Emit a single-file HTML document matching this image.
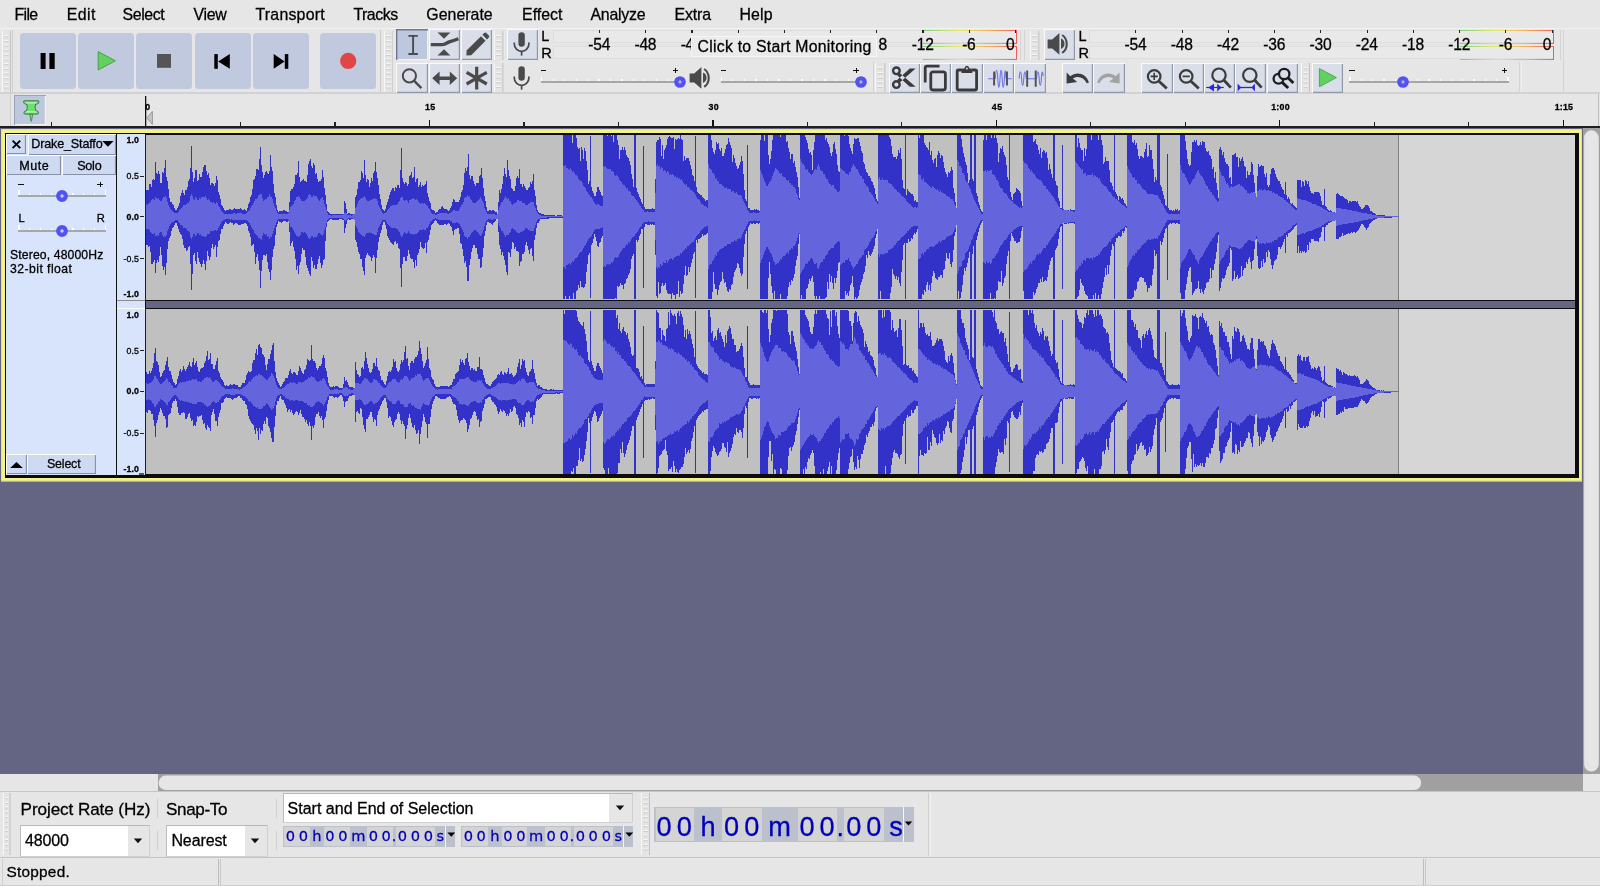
<!DOCTYPE html>
<html lang="en"><head><meta charset="utf-8"><title>Audacity</title>
<style>
html,body{margin:0;padding:0;}
body{width:1600px;height:886px;overflow:hidden;background:#e6e6e6;font-family:"Liberation Sans",sans-serif;color:#000;}
#app{position:relative;width:1600px;height:886px;overflow:hidden;background:#e6e6e6;will-change:transform;}
#app div,#app svg{position:absolute;box-sizing:border-box;}
.t{white-space:pre;-webkit-text-stroke:0.28px currentColor;}
.tb{background:#c1c9de;border-radius:3.5px;}
</style></head><body><div id="app">
<div id="menubar" style="left:0;top:0;width:1600px;height:28px;">
<div class="t" style="left:14.5px;top:6.61px;font-size:15.9px;line-height:15.9px;letter-spacing:-0.674px;">File</div>
<div class="t" style="left:66.8px;top:6.61px;font-size:15.9px;line-height:15.9px;letter-spacing:0.434px;">Edit</div>
<div class="t" style="left:122.5px;top:6.61px;font-size:15.9px;line-height:15.9px;letter-spacing:-0.398px;">Select</div>
<div class="t" style="left:193.4px;top:6.61px;font-size:15.9px;line-height:15.9px;letter-spacing:-0.259px;">View</div>
<div class="t" style="left:255.5px;top:6.61px;font-size:15.9px;line-height:15.9px;letter-spacing:0.218px;">Transport</div>
<div class="t" style="left:353.4px;top:6.61px;font-size:15.9px;line-height:15.9px;letter-spacing:-0.462px;">Tracks</div>
<div class="t" style="left:426.3px;top:6.61px;font-size:15.9px;line-height:15.9px;letter-spacing:0.015px;">Generate</div>
<div class="t" style="left:522px;top:6.61px;font-size:15.9px;line-height:15.9px;letter-spacing:0.027px;">Effect</div>
<div class="t" style="left:590.5px;top:6.61px;font-size:15.9px;line-height:15.9px;letter-spacing:-0.261px;">Analyze</div>
<div class="t" style="left:674.5px;top:6.61px;font-size:15.9px;line-height:15.9px;letter-spacing:-0.153px;">Extra</div>
<div class="t" style="left:739.5px;top:6.61px;font-size:15.9px;line-height:15.9px;letter-spacing:0.099px;">Help</div>
</div>
<div style="left:0px;top:28px;width:1600px;height:1px;background:#f2f2f2;"></div>
<div style="left:0px;top:92px;width:1600px;height:1.6px;background:#d2d2d2;"></div>
<svg style="left:2px;top:30.5px;" width="9" height="61" viewBox="0 0 9 61"><rect x="0" y="0" width="9" height="61" fill="#e4e4e4"/><rect x="0" y="0" width="1" height="61" fill="#f8f8f8"/><rect x="8" y="0" width="1" height="61" fill="#c2c2c2"/><rect x="2.4" y="4.2" width="4.2" height="1.1" fill="#fafafa"/><rect x="2.4" y="5.3" width="4.2" height="0.9" fill="#cacaca"/><rect x="2.4" y="8.86" width="4.2" height="1.1" fill="#fafafa"/><rect x="2.4" y="9.96" width="4.2" height="0.9" fill="#cacaca"/><rect x="2.4" y="13.52" width="4.2" height="1.1" fill="#fafafa"/><rect x="2.4" y="14.62" width="4.2" height="0.9" fill="#cacaca"/><rect x="2.4" y="18.18" width="4.2" height="1.1" fill="#fafafa"/><rect x="2.4" y="19.28" width="4.2" height="0.9" fill="#cacaca"/><rect x="2.4" y="22.84" width="4.2" height="1.1" fill="#fafafa"/><rect x="2.4" y="23.94" width="4.2" height="0.9" fill="#cacaca"/><rect x="2.4" y="27.5" width="4.2" height="1.1" fill="#fafafa"/><rect x="2.4" y="28.6" width="4.2" height="0.9" fill="#cacaca"/><rect x="2.4" y="32.16" width="4.2" height="1.1" fill="#fafafa"/><rect x="2.4" y="33.26" width="4.2" height="0.9" fill="#cacaca"/><rect x="2.4" y="36.82" width="4.2" height="1.1" fill="#fafafa"/><rect x="2.4" y="37.92" width="4.2" height="0.9" fill="#cacaca"/><rect x="2.4" y="41.48" width="4.2" height="1.1" fill="#fafafa"/><rect x="2.4" y="42.58" width="4.2" height="0.9" fill="#cacaca"/><rect x="2.4" y="46.14" width="4.2" height="1.1" fill="#fafafa"/><rect x="2.4" y="47.24" width="4.2" height="0.9" fill="#cacaca"/><rect x="2.4" y="50.8" width="4.2" height="1.1" fill="#fafafa"/><rect x="2.4" y="51.9" width="4.2" height="0.9" fill="#cacaca"/><rect x="2.4" y="55.46" width="4.2" height="1.1" fill="#fafafa"/><rect x="2.4" y="56.56" width="4.2" height="0.9" fill="#cacaca"/></svg>
<div style="left:11.5px;top:30px;width:1px;height:62px;background:#d0d0d0;"></div>
<div style="left:380px;top:30px;width:1.4px;height:62px;background:#cbcbcb;"></div>
<div class="tb" style="left:20px;top:32.8px;width:56px;height:56px;"></div>
<div class="tb" style="left:78.2px;top:32.8px;width:56px;height:56px;"></div>
<div class="tb" style="left:136.4px;top:32.8px;width:56px;height:56px;"></div>
<div class="tb" style="left:194.6px;top:32.8px;width:56px;height:56px;"></div>
<div class="tb" style="left:252.8px;top:32.8px;width:56px;height:56px;"></div>
<div class="tb" style="left:320.2px;top:32.8px;width:56px;height:56px;"></div>
<svg style="left:20px;top:32.8px;" width="360" height="56" viewBox="0 0 360 56"><rect x="20.6" y="20" width="5" height="16" fill="#000"/><rect x="29.4" y="20" width="5.3" height="16" fill="#000"/><path d="M78.2 18.6 L95.4 27.8 L78.2 37 Z" fill="#62d162" stroke="#3f9c3f" stroke-width="0.9" stroke-linejoin="round"/><rect x="137" y="21" width="14" height="13.8" fill="#555"/><rect x="194.3" y="21.1" width="3.5" height="14.7" fill="#000"/><path d="M209.8 21.1 V35.8 L198.2 28.45 Z" fill="#000"/><rect x="264.8" y="21.1" width="3.5" height="14.7" fill="#000"/><path d="M253.7 21.1 V35.8 L264.6 28.45 Z" fill="#000"/><circle cx="328.2" cy="27.9" r="8.1" fill="#e04646"/></svg>
<svg style="left:383.6px;top:30.5px;" width="9.4" height="61" viewBox="0 0 9.4 61"><rect x="0" y="0" width="9.4" height="61" fill="#e4e4e4"/><rect x="0" y="0" width="1" height="61" fill="#f8f8f8"/><rect x="8.4" y="0" width="1" height="61" fill="#c2c2c2"/><rect x="2.4" y="4.2" width="4.6" height="1.1" fill="#fafafa"/><rect x="2.4" y="5.3" width="4.6" height="0.9" fill="#cacaca"/><rect x="2.4" y="8.86" width="4.6" height="1.1" fill="#fafafa"/><rect x="2.4" y="9.96" width="4.6" height="0.9" fill="#cacaca"/><rect x="2.4" y="13.52" width="4.6" height="1.1" fill="#fafafa"/><rect x="2.4" y="14.62" width="4.6" height="0.9" fill="#cacaca"/><rect x="2.4" y="18.18" width="4.6" height="1.1" fill="#fafafa"/><rect x="2.4" y="19.28" width="4.6" height="0.9" fill="#cacaca"/><rect x="2.4" y="22.84" width="4.6" height="1.1" fill="#fafafa"/><rect x="2.4" y="23.94" width="4.6" height="0.9" fill="#cacaca"/><rect x="2.4" y="27.5" width="4.6" height="1.1" fill="#fafafa"/><rect x="2.4" y="28.6" width="4.6" height="0.9" fill="#cacaca"/><rect x="2.4" y="32.16" width="4.6" height="1.1" fill="#fafafa"/><rect x="2.4" y="33.26" width="4.6" height="0.9" fill="#cacaca"/><rect x="2.4" y="36.82" width="4.6" height="1.1" fill="#fafafa"/><rect x="2.4" y="37.92" width="4.6" height="0.9" fill="#cacaca"/><rect x="2.4" y="41.48" width="4.6" height="1.1" fill="#fafafa"/><rect x="2.4" y="42.58" width="4.6" height="0.9" fill="#cacaca"/><rect x="2.4" y="46.14" width="4.6" height="1.1" fill="#fafafa"/><rect x="2.4" y="47.24" width="4.6" height="0.9" fill="#cacaca"/><rect x="2.4" y="50.8" width="4.6" height="1.1" fill="#fafafa"/><rect x="2.4" y="51.9" width="4.6" height="0.9" fill="#cacaca"/><rect x="2.4" y="55.46" width="4.6" height="1.1" fill="#fafafa"/><rect x="2.4" y="56.56" width="4.6" height="0.9" fill="#cacaca"/></svg>
<div style="left:396.4px;top:29.4px;width:31.4px;height:30.5px;background:#bdc8df;box-shadow:inset 1.4px 1.4px 0 #6f7690, inset -1px -1px 0 #eef2fa;"></div>
<div style="left:396.4px;top:62.5px;width:31.4px;height:30px;background:#d9dee9;box-shadow:inset 1px 1px 0 #fbfbf2, inset -1.2px -1.2px 0 #9098ac;"></div>
<div style="left:428.6px;top:29.4px;width:31.4px;height:30.5px;background:#d9dee9;box-shadow:inset 1px 1px 0 #fbfbf2, inset -1.2px -1.2px 0 #9098ac;"></div>
<div style="left:428.6px;top:62.5px;width:31.4px;height:30px;background:#d9dee9;box-shadow:inset 1px 1px 0 #fbfbf2, inset -1.2px -1.2px 0 #9098ac;"></div>
<div style="left:460.8px;top:29.4px;width:31.4px;height:30.5px;background:#d9dee9;box-shadow:inset 1px 1px 0 #fbfbf2, inset -1.2px -1.2px 0 #9098ac;"></div>
<div style="left:460.8px;top:62.5px;width:31.4px;height:30px;background:#d9dee9;box-shadow:inset 1px 1px 0 #fbfbf2, inset -1.2px -1.2px 0 #9098ac;"></div>
<svg style="left:396.4px;top:29.1px;" width="31.4" height="30.6" viewBox="0 0 31.4 30.6"><path d="M12.4 6.9 H21.8 M12.4 25 H21.8 M17.1 6.9 V25" stroke="#4a4a4a" stroke-width="1.9" fill="none"/></svg>
<svg style="left:428.6px;top:29.1px;" width="31.4" height="30.6" viewBox="0 0 31.4 30.6"><path d="M8.6 3.6 H21.4 L15 9.8 Z M8.6 26.4 H21.4 L15 20.2 Z" fill="#4a4a4a"/><path d="M1.8 15.6 H13.5 C17 15.6 18 13.4 21 12.6 S26.5 11 29.4 9.8" stroke="#4a4a4a" stroke-width="3.4" fill="none"/></svg>
<svg style="left:460.8px;top:29.1px;" width="31.4" height="30.6" viewBox="0 0 31.4 30.6"><path d="M5.6 21.6 L20 7.2 L24.6 11.8 L10.2 26.2 L5.4 26.6 Z" fill="#4a4a4a"/><path d="M21.4 5.8 L23.2 4 Q24.4 3 25.6 4.2 L27.8 6.4 Q28.8 7.6 27.8 8.6 L26 10.4 Z" fill="#4a4a4a"/></svg>
<svg style="left:396.4px;top:63px;" width="31.4" height="30.2" viewBox="0 0 31.4 30.2"><circle cx="13.4" cy="12.8" r="6.6" stroke="#4a4a4a" stroke-width="2" fill="none"/><path d="M18.2 17.8 L25.4 25.2" stroke="#4a4a4a" stroke-width="2.4"/></svg>
<svg style="left:428.6px;top:63px;" width="31.4" height="30.2" viewBox="0 0 31.4 30.2"><path d="M3.2 15.2 L10.6 8.4 V13.4 H20.8 V8.4 L28.2 15.2 L20.8 22 V17 H10.6 V22 Z" fill="#4a4a4a"/></svg>
<svg style="left:460.8px;top:63px;" width="31.4" height="30.2" viewBox="0 0 31.4 30.2"><path d="M15.7 3.8 V26.4 M5.6 9.4 L25.8 21 M25.8 9.4 L5.6 21" stroke="#4a4a4a" stroke-width="3.2" fill="none"/></svg>
<svg style="left:494.4px;top:30.5px;" width="9.4" height="29.5" viewBox="0 0 9.4 29.5"><rect x="0" y="0" width="9.4" height="29.5" fill="#e4e4e4"/><rect x="0" y="0" width="1" height="29.5" fill="#f8f8f8"/><rect x="8.4" y="0" width="1" height="29.5" fill="#c2c2c2"/><rect x="2.4" y="4.2" width="4.6" height="1.1" fill="#fafafa"/><rect x="2.4" y="5.3" width="4.6" height="0.9" fill="#cacaca"/><rect x="2.4" y="8.86" width="4.6" height="1.1" fill="#fafafa"/><rect x="2.4" y="9.96" width="4.6" height="0.9" fill="#cacaca"/><rect x="2.4" y="13.52" width="4.6" height="1.1" fill="#fafafa"/><rect x="2.4" y="14.62" width="4.6" height="0.9" fill="#cacaca"/><rect x="2.4" y="18.18" width="4.6" height="1.1" fill="#fafafa"/><rect x="2.4" y="19.28" width="4.6" height="0.9" fill="#cacaca"/><rect x="2.4" y="22.84" width="4.6" height="1.1" fill="#fafafa"/><rect x="2.4" y="23.94" width="4.6" height="0.9" fill="#cacaca"/></svg>
<div style="left:506.6px;top:29.4px;width:31.2px;height:30.5px;background:#d9dee9;box-shadow:inset 1px 1px 0 #fbfbf2, inset -1.2px -1.2px 0 #9098ac;"></div>
<svg style="left:506.6px;top:29.2px;" width="32" height="31" viewBox="0 0 32 31"><rect x="11.4" y="3.2" width="6.4" height="14.6" rx="3.2" fill="#4a4a4a"/><path d="M7.3 13.4 v1.6 a7.3 7.3 0 0 0 14.6 0 v-1.6" stroke="#4a4a4a" stroke-width="1.7" fill="none"/><path d="M14.6 22 v4.6" stroke="#4a4a4a" stroke-width="1.7"/></svg>
<div class="t" style="left:541.3px;top:28.81px;font-size:14.5px;line-height:14.5px;">L</div>
<div class="t" style="left:541.3px;top:45.81px;font-size:14.5px;line-height:14.5px;">R</div>
<div style="left:552.5px;top:30.2px;width:464.1px;height:12.6px;border:1px solid #dedede;border-right:none;background:#e9e9e9;"></div>
<div style="left:552.5px;top:46px;width:464.1px;height:12.8px;border:1px solid #dedede;border-right:none;background:#e9e9e9;"></div>
<div style="left:922.97px;top:29.8px;width:93.63px;height:1.1px;background:linear-gradient(90deg,#7fd07f 0%,#e6ef63 40%,#f5b05a 70%,#f0605a 100%);"></div>
<div style="left:922.97px;top:43.2px;width:93.63px;height:1.1px;background:linear-gradient(90deg,#7fd07f 0%,#e6ef63 40%,#f5b05a 70%,#f0605a 100%);"></div>
<div style="left:922.97px;top:46px;width:93.63px;height:1.1px;background:linear-gradient(90deg,#7fd07f 0%,#e6ef63 40%,#f5b05a 70%,#f0605a 100%);"></div>
<div style="left:922.97px;top:59.2px;width:93.63px;height:1.1px;background:linear-gradient(90deg,#7fd07f 0%,#e6ef63 40%,#f5b05a 70%,#f0605a 100%);"></div>
<div style="left:1016px;top:29.8px;width:1.2px;height:14.5px;background:#ef5d5a;"></div>
<div style="left:1016px;top:46px;width:1.2px;height:14.3px;background:#ef5d5a;"></div>
<div style="left:599px;top:30px;width:1.1px;height:3.2px;background:#222;"></div>
<div class="t" style="left:588.251px;top:36.76px;font-size:15.6px;line-height:15.6px;letter-spacing:-0.225px;">-54</div>
<div style="left:645.21px;top:30px;width:1.1px;height:3.2px;background:#222;"></div>
<div class="t" style="left:634.461px;top:36.76px;font-size:15.6px;line-height:15.6px;letter-spacing:-0.225px;">-48</div>
<div style="left:691.42px;top:30px;width:1.1px;height:3.2px;background:#222;"></div>
<div class="t" style="left:680.671px;top:36.76px;font-size:15.6px;line-height:15.6px;letter-spacing:-0.225px;">-42</div>
<div style="left:737.63px;top:30px;width:1.1px;height:3.2px;background:#222;"></div>
<div style="left:783.84px;top:30px;width:1.1px;height:3.2px;background:#222;"></div>
<div style="left:830.05px;top:30px;width:1.1px;height:3.2px;background:#222;"></div>
<div style="left:876.26px;top:30px;width:1.1px;height:3.2px;background:#222;"></div>
<div style="left:922.47px;top:30px;width:1.1px;height:3.2px;background:#222;"></div>
<div class="t" style="left:911.721px;top:36.76px;font-size:15.6px;line-height:15.6px;letter-spacing:-0.225px;">-12</div>
<div style="left:968.68px;top:30px;width:1.1px;height:3.2px;background:#222;"></div>
<div class="t" style="left:962.183px;top:36.76px;font-size:15.6px;line-height:15.6px;letter-spacing:-0.277px;">-6</div>
<div style="left:1014.89px;top:30px;width:1.1px;height:3.2px;background:#222;"></div>
<div class="t" style="left:1005.99px;top:36.76px;font-size:15.6px;line-height:15.6px;letter-spacing:-0.174px;">0</div>
<div class="t" style="left:878.4px;top:36.76px;font-size:15.6px;line-height:15.6px;">8</div>
<div style="left:691.2px;top:35.6px;width:185.6px;height:21px;background:#ebebeb;border:1px solid #f6f6f6;"></div>
<div class="t" style="left:697.6px;top:38.66px;font-size:15.8px;line-height:15.8px;letter-spacing:0.253px;">Click to Start Monitoring</div>
<div style="left:1019.5px;top:30px;width:1px;height:30px;background:#d4d4d4;"></div>
<div style="left:1023.5px;top:30px;width:1px;height:30px;background:#d4d4d4;"></div>
<svg style="left:1030.4px;top:30.5px;" width="9.4" height="29.5" viewBox="0 0 9.4 29.5"><rect x="0" y="0" width="9.4" height="29.5" fill="#e4e4e4"/><rect x="0" y="0" width="1" height="29.5" fill="#f8f8f8"/><rect x="8.4" y="0" width="1" height="29.5" fill="#c2c2c2"/><rect x="2.4" y="4.2" width="4.6" height="1.1" fill="#fafafa"/><rect x="2.4" y="5.3" width="4.6" height="0.9" fill="#cacaca"/><rect x="2.4" y="8.86" width="4.6" height="1.1" fill="#fafafa"/><rect x="2.4" y="9.96" width="4.6" height="0.9" fill="#cacaca"/><rect x="2.4" y="13.52" width="4.6" height="1.1" fill="#fafafa"/><rect x="2.4" y="14.62" width="4.6" height="0.9" fill="#cacaca"/><rect x="2.4" y="18.18" width="4.6" height="1.1" fill="#fafafa"/><rect x="2.4" y="19.28" width="4.6" height="0.9" fill="#cacaca"/><rect x="2.4" y="22.84" width="4.6" height="1.1" fill="#fafafa"/><rect x="2.4" y="23.94" width="4.6" height="0.9" fill="#cacaca"/></svg>
<div style="left:1043.7px;top:29.4px;width:31.2px;height:30.5px;background:#d9dee9;box-shadow:inset 1px 1px 0 #fbfbf2, inset -1.2px -1.2px 0 #9098ac;"></div>
<svg style="left:1043.7px;top:29.2px;" width="32" height="31" viewBox="0 0 32 31"><path d="M3.6 10.4 h4.6 l7.2 -6.4 v21.8 l-7.2 -6.4 h-4.6 z" fill="#4a4a4a"/><path d="M17 9.6 a5.6 5.6 0 0 1 0 10.4 z" fill="#4a4a4a"/><path d="M18.2 6 a11 11 0 0 1 0 17.8" stroke="#4a4a4a" stroke-width="2.1" fill="none"/></svg>
<div class="t" style="left:1078.6px;top:28.81px;font-size:14.5px;line-height:14.5px;">L</div>
<div class="t" style="left:1078.6px;top:45.81px;font-size:14.5px;line-height:14.5px;">R</div>
<div style="left:1088.8px;top:30.2px;width:464.9px;height:12.6px;border:1px solid #dedede;border-right:none;background:#e9e9e9;"></div>
<div style="left:1088.8px;top:46px;width:464.9px;height:12.8px;border:1px solid #dedede;border-right:none;background:#e9e9e9;"></div>
<div style="left:1459.55px;top:29.8px;width:94.15px;height:1.1px;background:linear-gradient(90deg,#7fd07f 0%,#e6ef63 40%,#f5b05a 70%,#f0605a 100%);"></div>
<div style="left:1459.55px;top:43.2px;width:94.15px;height:1.1px;background:linear-gradient(90deg,#7fd07f 0%,#e6ef63 40%,#f5b05a 70%,#f0605a 100%);"></div>
<div style="left:1459.55px;top:46px;width:94.15px;height:1.1px;background:linear-gradient(90deg,#7fd07f 0%,#e6ef63 40%,#f5b05a 70%,#f0605a 100%);"></div>
<div style="left:1459.55px;top:59.2px;width:94.15px;height:1.1px;background:linear-gradient(90deg,#7fd07f 0%,#e6ef63 40%,#f5b05a 70%,#f0605a 100%);"></div>
<div style="left:1553.1px;top:29.8px;width:1.2px;height:14.5px;background:#ef5d5a;"></div>
<div style="left:1553.1px;top:46px;width:1.2px;height:14.3px;background:#ef5d5a;"></div>
<div style="left:1135.3px;top:30px;width:1.1px;height:3.2px;background:#222;"></div>
<div class="t" style="left:1124.55px;top:36.76px;font-size:15.6px;line-height:15.6px;letter-spacing:-0.225px;">-54</div>
<div style="left:1181.55px;top:30px;width:1.1px;height:3.2px;background:#222;"></div>
<div class="t" style="left:1170.8px;top:36.76px;font-size:15.6px;line-height:15.6px;letter-spacing:-0.225px;">-48</div>
<div style="left:1227.8px;top:30px;width:1.1px;height:3.2px;background:#222;"></div>
<div class="t" style="left:1217.05px;top:36.76px;font-size:15.6px;line-height:15.6px;letter-spacing:-0.225px;">-42</div>
<div style="left:1274.05px;top:30px;width:1.1px;height:3.2px;background:#222;"></div>
<div class="t" style="left:1263.3px;top:36.76px;font-size:15.6px;line-height:15.6px;letter-spacing:-0.225px;">-36</div>
<div style="left:1320.3px;top:30px;width:1.1px;height:3.2px;background:#222;"></div>
<div class="t" style="left:1309.55px;top:36.76px;font-size:15.6px;line-height:15.6px;letter-spacing:-0.225px;">-30</div>
<div style="left:1366.55px;top:30px;width:1.1px;height:3.2px;background:#222;"></div>
<div class="t" style="left:1355.8px;top:36.76px;font-size:15.6px;line-height:15.6px;letter-spacing:-0.225px;">-24</div>
<div style="left:1412.8px;top:30px;width:1.1px;height:3.2px;background:#222;"></div>
<div class="t" style="left:1402.05px;top:36.76px;font-size:15.6px;line-height:15.6px;letter-spacing:-0.225px;">-18</div>
<div style="left:1459.05px;top:30px;width:1.1px;height:3.2px;background:#222;"></div>
<div class="t" style="left:1448.3px;top:36.76px;font-size:15.6px;line-height:15.6px;letter-spacing:-0.225px;">-12</div>
<div style="left:1505.3px;top:30px;width:1.1px;height:3.2px;background:#222;"></div>
<div class="t" style="left:1498.8px;top:36.76px;font-size:15.6px;line-height:15.6px;letter-spacing:-0.277px;">-6</div>
<div style="left:1551.55px;top:30px;width:1.1px;height:3.2px;background:#222;"></div>
<div class="t" style="left:1542.65px;top:36.76px;font-size:15.6px;line-height:15.6px;letter-spacing:-0.174px;">0</div>
<div style="left:1560px;top:30px;width:1px;height:30px;background:#d4d4d4;"></div>
<div style="left:1563px;top:30px;width:1px;height:62px;background:#d4d4d4;"></div>
<svg style="left:494.4px;top:62.5px;" width="9.4" height="29.5" viewBox="0 0 9.4 29.5"><rect x="0" y="0" width="9.4" height="29.5" fill="#e4e4e4"/><rect x="0" y="0" width="1" height="29.5" fill="#f8f8f8"/><rect x="8.4" y="0" width="1" height="29.5" fill="#c2c2c2"/><rect x="2.4" y="4.2" width="4.6" height="1.1" fill="#fafafa"/><rect x="2.4" y="5.3" width="4.6" height="0.9" fill="#cacaca"/><rect x="2.4" y="8.86" width="4.6" height="1.1" fill="#fafafa"/><rect x="2.4" y="9.96" width="4.6" height="0.9" fill="#cacaca"/><rect x="2.4" y="13.52" width="4.6" height="1.1" fill="#fafafa"/><rect x="2.4" y="14.62" width="4.6" height="0.9" fill="#cacaca"/><rect x="2.4" y="18.18" width="4.6" height="1.1" fill="#fafafa"/><rect x="2.4" y="19.28" width="4.6" height="0.9" fill="#cacaca"/><rect x="2.4" y="22.84" width="4.6" height="1.1" fill="#fafafa"/><rect x="2.4" y="23.94" width="4.6" height="0.9" fill="#cacaca"/></svg>
<svg style="left:506.6px;top:63.2px;" width="32" height="31" viewBox="0 0 32 31"><rect x="11.4" y="3.2" width="6.4" height="14.6" rx="3.2" fill="#4a4a4a"/><path d="M7.3 13.4 v1.6 a7.3 7.3 0 0 0 14.6 0 v-1.6" stroke="#4a4a4a" stroke-width="1.7" fill="none"/><path d="M14.6 22 v4.6" stroke="#4a4a4a" stroke-width="1.7"/></svg>
<div style="left:541.2px;top:69.7px;width:5.2px;height:1.5px;background:#111;"></div>
<div style="left:672.8px;top:69.7px;width:5.6px;height:1.5px;background:#111;"></div>
<div style="left:674.9px;top:67.6px;width:1.5px;height:5.6px;background:#111;"></div>
<div style="left:541.2px;top:81.4px;width:138.8px;height:2.1px;background:#a6a6a6;"></div>
<div style="left:541.2px;top:76.8px;width:1.3px;height:4.6px;background:#ffffff;"></div>
<div style="left:552.642px;top:79px;width:1.3px;height:2.4px;background:#ffffff;"></div>
<div style="left:564.083px;top:79px;width:1.3px;height:2.4px;background:#ffffff;"></div>
<div style="left:575.525px;top:79px;width:1.3px;height:2.4px;background:#ffffff;"></div>
<div style="left:586.967px;top:79px;width:1.3px;height:2.4px;background:#ffffff;"></div>
<div style="left:598.408px;top:79px;width:1.3px;height:2.4px;background:#ffffff;"></div>
<div style="left:609.85px;top:79px;width:1.3px;height:2.4px;background:#ffffff;"></div>
<div style="left:621.292px;top:79px;width:1.3px;height:2.4px;background:#ffffff;"></div>
<div style="left:632.733px;top:79px;width:1.3px;height:2.4px;background:#ffffff;"></div>
<div style="left:644.175px;top:79px;width:1.3px;height:2.4px;background:#ffffff;"></div>
<div style="left:655.617px;top:79px;width:1.3px;height:2.4px;background:#ffffff;"></div>
<div style="left:667.058px;top:79px;width:1.3px;height:2.4px;background:#ffffff;"></div>
<div style="left:678.5px;top:76.8px;width:1.3px;height:4.6px;background:#ffffff;"></div>
<svg style="left:673.2px;top:75.3px;" width="14" height="14" viewBox="0 0 14 14"><circle cx="7" cy="7" r="3.75" stroke="#5252f0" stroke-width="4.2" fill="#b0b0c8"/></svg>
<svg style="left:686.2px;top:63.2px;" width="32" height="31" viewBox="0 0 32 31"><path d="M3.6 10.4 h4.6 l7.2 -6.4 v21.8 l-7.2 -6.4 h-4.6 z" fill="#4a4a4a"/><path d="M17 9.6 a5.6 5.6 0 0 1 0 10.4 z" fill="#4a4a4a"/><path d="M18.2 6 a11 11 0 0 1 0 17.8" stroke="#4a4a4a" stroke-width="2.1" fill="none"/></svg>
<div style="left:720.6px;top:69.7px;width:5.2px;height:1.5px;background:#111;"></div>
<div style="left:853.4px;top:69.7px;width:5.6px;height:1.5px;background:#111;"></div>
<div style="left:855.5px;top:67.6px;width:1.5px;height:5.6px;background:#111;"></div>
<div style="left:720.6px;top:81.4px;width:140px;height:2.1px;background:#a6a6a6;"></div>
<div style="left:720.6px;top:76.8px;width:1.3px;height:4.6px;background:#ffffff;"></div>
<div style="left:732.142px;top:79px;width:1.3px;height:2.4px;background:#ffffff;"></div>
<div style="left:743.683px;top:79px;width:1.3px;height:2.4px;background:#ffffff;"></div>
<div style="left:755.225px;top:79px;width:1.3px;height:2.4px;background:#ffffff;"></div>
<div style="left:766.767px;top:79px;width:1.3px;height:2.4px;background:#ffffff;"></div>
<div style="left:778.308px;top:79px;width:1.3px;height:2.4px;background:#ffffff;"></div>
<div style="left:789.85px;top:79px;width:1.3px;height:2.4px;background:#ffffff;"></div>
<div style="left:801.392px;top:79px;width:1.3px;height:2.4px;background:#ffffff;"></div>
<div style="left:812.933px;top:79px;width:1.3px;height:2.4px;background:#ffffff;"></div>
<div style="left:824.475px;top:79px;width:1.3px;height:2.4px;background:#ffffff;"></div>
<div style="left:836.017px;top:79px;width:1.3px;height:2.4px;background:#ffffff;"></div>
<div style="left:847.558px;top:79px;width:1.3px;height:2.4px;background:#ffffff;"></div>
<div style="left:859.1px;top:76.8px;width:1.3px;height:4.6px;background:#ffffff;"></div>
<svg style="left:853.7px;top:75.3px;" width="14" height="14" viewBox="0 0 14 14"><circle cx="7" cy="7" r="3.75" stroke="#5252f0" stroke-width="4.2" fill="#b0b0c8"/></svg>
<div style="left:872.8px;top:62px;width:1px;height:30px;background:#d4d4d4;"></div>
<svg style="left:875.4px;top:62.5px;" width="10.4" height="29.5" viewBox="0 0 10.4 29.5"><rect x="0" y="0" width="10.4" height="29.5" fill="#e4e4e4"/><rect x="0" y="0" width="1" height="29.5" fill="#f8f8f8"/><rect x="9.4" y="0" width="1" height="29.5" fill="#c2c2c2"/><rect x="2.4" y="4.2" width="5.6" height="1.1" fill="#fafafa"/><rect x="2.4" y="5.3" width="5.6" height="0.9" fill="#cacaca"/><rect x="2.4" y="8.86" width="5.6" height="1.1" fill="#fafafa"/><rect x="2.4" y="9.96" width="5.6" height="0.9" fill="#cacaca"/><rect x="2.4" y="13.52" width="5.6" height="1.1" fill="#fafafa"/><rect x="2.4" y="14.62" width="5.6" height="0.9" fill="#cacaca"/><rect x="2.4" y="18.18" width="5.6" height="1.1" fill="#fafafa"/><rect x="2.4" y="19.28" width="5.6" height="0.9" fill="#cacaca"/><rect x="2.4" y="22.84" width="5.6" height="1.1" fill="#fafafa"/><rect x="2.4" y="23.94" width="5.6" height="0.9" fill="#cacaca"/></svg>
<div style="left:888.8px;top:62.5px;width:31.2px;height:30px;background:#d9dee9;box-shadow:inset 1px 1px 0 #fbfbf2, inset -1.2px -1.2px 0 #9098ac;"></div>
<div style="left:920.2px;top:62.5px;width:31.2px;height:30px;background:#d9dee9;box-shadow:inset 1px 1px 0 #fbfbf2, inset -1.2px -1.2px 0 #9098ac;"></div>
<div style="left:951.4px;top:62.5px;width:31.2px;height:30px;background:#d9dee9;box-shadow:inset 1px 1px 0 #fbfbf2, inset -1.2px -1.2px 0 #9098ac;"></div>
<div style="left:983px;top:62.5px;width:31.2px;height:30px;background:#d9dee9;box-shadow:inset 1px 1px 0 #fbfbf2, inset -1.2px -1.2px 0 #9098ac;"></div>
<div style="left:1014.4px;top:62.5px;width:31.2px;height:30px;background:#d9dee9;box-shadow:inset 1px 1px 0 #fbfbf2, inset -1.2px -1.2px 0 #9098ac;"></div>
<div style="left:1062.2px;top:62.5px;width:31.2px;height:30px;background:#d9dee9;box-shadow:inset 1px 1px 0 #fbfbf2, inset -1.2px -1.2px 0 #9098ac;"></div>
<div style="left:1093.4px;top:62.5px;width:31.2px;height:30px;background:#d9dee9;box-shadow:inset 1px 1px 0 #fbfbf2, inset -1.2px -1.2px 0 #9098ac;"></div>
<div style="left:1141.4px;top:62.5px;width:31.2px;height:30px;background:#d9dee9;box-shadow:inset 1px 1px 0 #fbfbf2, inset -1.2px -1.2px 0 #9098ac;"></div>
<div style="left:1172.8px;top:62.5px;width:31.2px;height:30px;background:#d9dee9;box-shadow:inset 1px 1px 0 #fbfbf2, inset -1.2px -1.2px 0 #9098ac;"></div>
<div style="left:1204px;top:62.5px;width:31.2px;height:30px;background:#d9dee9;box-shadow:inset 1px 1px 0 #fbfbf2, inset -1.2px -1.2px 0 #9098ac;"></div>
<div style="left:1235.2px;top:62.5px;width:31.2px;height:30px;background:#d9dee9;box-shadow:inset 1px 1px 0 #fbfbf2, inset -1.2px -1.2px 0 #9098ac;"></div>
<div style="left:1266.6px;top:62.5px;width:31.2px;height:30px;background:#d9dee9;box-shadow:inset 1px 1px 0 #fbfbf2, inset -1.2px -1.2px 0 #9098ac;"></div>
<svg style="left:888.8px;top:63px;" width="31.2" height="30.2" viewBox="0 0 31.2 30.2"><circle cx="7.4" cy="7.8" r="3.3" stroke="#3a3a3a" stroke-width="2.4" fill="none"/><circle cx="7.4" cy="21.6" r="3.3" stroke="#3a3a3a" stroke-width="2.4" fill="none"/><path d="M10.2 9.4 L26.6 23.8 L20.8 23.8 L8.4 12.6 Z M10.2 20 L26.6 5.6 L20.8 5.6 L8.4 16.8 Z" fill="#3a3a3a"/></svg>
<svg style="left:920.2px;top:63px;" width="31.2" height="30.2" viewBox="0 0 31.2 30.2"><rect x="10.8" y="8.8" width="14.6" height="18.2" rx="2.2" stroke="#3a3a3a" stroke-width="2.8" fill="none"/><path d="M5.2 19.6 V5 Q5.2 3.2 7 3.2 H19.6" stroke="#3a3a3a" stroke-width="2.8" fill="none"/></svg>
<svg style="left:951.4px;top:63px;" width="31.2" height="30.2" viewBox="0 0 31.2 30.2"><path d="M11 7 H7.6 Q6.2 7 6.2 8.4 V25.6 Q6.2 27 7.6 27 H24.2 Q25.6 27 25.6 25.6 V8.4 Q25.6 7 24.2 7 H20.8" stroke="#3a3a3a" stroke-width="2.8" fill="none"/><path d="M10.4 10 L11.2 5.6 H13.4 Q13.8 2.8 15.9 2.8 T18.4 5.6 H20.6 L21.4 10 Z" fill="#3a3a3a"/><circle cx="15.9" cy="5.4" r="1" fill="#d9dee9"/></svg>
<svg style="left:983px;top:63px;" width="31.2" height="30.2" viewBox="0 0 31.2 30.2"><path d="M5.2 15.8 H10.4 M24.8 15.8 H28.8" stroke="#6f74ec" stroke-width="1.1"/><path d="M12.4 15.8 C13 4.4 14.2 4.4 14.8 15.8 S16.4 27 17 15.8 S18.6 4.4 19.2 15.8 S20.8 27 21.4 15.8 S22.6 6 23 15.8" stroke="#6f74ec" stroke-width="1.1" fill="none"/><path d="M11.1 8.6 V22.4 M24 8.6 V22.4" stroke="#4f4f4f" stroke-width="1.9"/></svg>
<svg style="left:1014.4px;top:63px;" width="31.2" height="30.2" viewBox="0 0 31.2 30.2"><path d="M5.2 15.6 C5.8 6.6 7 6.6 7.6 15.6 S9.2 24.6 9.8 15.6 S11.4 6.6 12.2 15.6 M22.6 15.6 C23.2 6.6 24.6 6.6 25.2 15.6 S26.8 24.6 27.4 15.6 S28.6 8 29.2 13" stroke="#6f74ec" stroke-width="1.1" fill="none"/><path d="M14 15.8 H21" stroke="#6f74ec" stroke-width="1.1"/><path d="M13.2 7.6 V23.8 M21.7 7.6 V23.8" stroke="#4f4f4f" stroke-width="1.9"/></svg>
<svg style="left:1062.2px;top:63px;" width="31.2" height="30.2" viewBox="0 0 31.2 30.2"><path d="M4.6 9.6 L4.6 20.6 L15.2 19 L11 15.6 C15.6 12.6 21.6 14 24.8 20.2 L27 19.4 C24.2 10.6 15 7.8 8.4 13.2 Z" fill="#3c3c3c"/></svg>
<svg style="left:1093.4px;top:63px;" width="31.2" height="30.2" viewBox="0 0 31.2 30.2"><path d="M26.6 9.6 L26.6 20.6 L16 19 L20.2 15.6 C15.6 12.6 9.6 14 6.4 20.2 L4.2 19.4 C7 10.6 16.2 7.8 22.8 13.2 Z" fill="#a2a2a2"/></svg>
<svg style="left:1141.4px;top:63px;" width="31.2" height="30.2" viewBox="0 0 31.2 30.2"><circle cx="13.2" cy="13.4" r="6.3" stroke="#3c3c3c" stroke-width="2.2" fill="none"/><path d="M17.736 17.936 L25.8 25.6" stroke="#3c3c3c" stroke-width="2.8"/><path d="M9.6 13.4 H16.8 M13.2 9.8 V17" stroke="#3c3c3c" stroke-width="1.6"/></svg>
<svg style="left:1172.8px;top:63px;" width="31.2" height="30.2" viewBox="0 0 31.2 30.2"><circle cx="13.2" cy="13.4" r="6.3" stroke="#3c3c3c" stroke-width="2.2" fill="none"/><path d="M17.736 17.936 L25.8 25.6" stroke="#3c3c3c" stroke-width="2.8"/><path d="M9.6 13.4 H16.8" stroke="#3c3c3c" stroke-width="1.7"/></svg>
<svg style="left:1204px;top:63px;" width="31.2" height="30.2" viewBox="0 0 31.2 30.2"><circle cx="15" cy="12.2" r="6.7" stroke="#3c3c3c" stroke-width="2.2" fill="none"/><path d="M19.824 17.024 L26.8 24.6" stroke="#3c3c3c" stroke-width="2.8"/><path d="M2.2 24.5 H19.8" stroke="#2a2ad0" stroke-width="1.2"/><path d="M4.1 24.5 L10 20.7 V28.4 Z M17.6 24.5 L13.2 20.7 V28.4 Z" fill="#2a2ad0"/></svg>
<svg style="left:1235.2px;top:63px;" width="31.2" height="30.2" viewBox="0 0 31.2 30.2"><circle cx="14.8" cy="12.2" r="6.7" stroke="#3c3c3c" stroke-width="2.2" fill="none"/><path d="M19.624 17.024 L26.6 24.6" stroke="#3c3c3c" stroke-width="2.8"/><path d="M3 24.5 H19.6" stroke="#2a2ad0" stroke-width="1.3"/><path d="M2.6 20.5 V28.5 L6.2 24.5 Z M19.9 20.5 V28.5 L16.5 24.5 Z" fill="#2a2ad0"/></svg>
<svg style="left:1266.6px;top:63px;" width="31.2" height="30.2" viewBox="0 0 31.2 30.2"><circle cx="11.5" cy="15.7" r="4.9" stroke="#1c1c1c" stroke-width="2.3" fill="none"/><path d="M15.2 19.4 L21.2 25" stroke="#1c1c1c" stroke-width="2.9"/><circle cx="17.2" cy="11" r="5.2" stroke="#1c1c1c" stroke-width="2.3" fill="#d9dee9"/><path d="M21 14.8 L26.4 20" stroke="#1c1c1c" stroke-width="2.9"/></svg>
<svg style="left:1300.6px;top:62.5px;" width="9" height="29.5" viewBox="0 0 9 29.5"><rect x="0" y="0" width="9" height="29.5" fill="#e4e4e4"/><rect x="0" y="0" width="1" height="29.5" fill="#f8f8f8"/><rect x="8" y="0" width="1" height="29.5" fill="#c2c2c2"/><rect x="2.4" y="4.2" width="4.2" height="1.1" fill="#fafafa"/><rect x="2.4" y="5.3" width="4.2" height="0.9" fill="#cacaca"/><rect x="2.4" y="8.86" width="4.2" height="1.1" fill="#fafafa"/><rect x="2.4" y="9.96" width="4.2" height="0.9" fill="#cacaca"/><rect x="2.4" y="13.52" width="4.2" height="1.1" fill="#fafafa"/><rect x="2.4" y="14.62" width="4.2" height="0.9" fill="#cacaca"/><rect x="2.4" y="18.18" width="4.2" height="1.1" fill="#fafafa"/><rect x="2.4" y="19.28" width="4.2" height="0.9" fill="#cacaca"/><rect x="2.4" y="22.84" width="4.2" height="1.1" fill="#fafafa"/><rect x="2.4" y="23.94" width="4.2" height="0.9" fill="#cacaca"/></svg>
<div style="left:1312px;top:62.5px;width:31.4px;height:30px;background:#d9dee9;box-shadow:inset 1px 1px 0 #fbfbf2, inset -1.2px -1.2px 0 #9098ac;"></div>
<svg style="left:1312px;top:63px;" width="31.4" height="30.2" viewBox="0 0 31.4 30.2"><path d="M7.4 5.6 L24.4 14.6 L7.4 23.8 Z" fill="#62d162" stroke="#46a646" stroke-width="0.9" stroke-linejoin="round"/></svg>
<div style="left:1349.4px;top:69.7px;width:5.2px;height:1.5px;background:#111;"></div>
<div style="left:1501.6px;top:69.7px;width:5.6px;height:1.5px;background:#111;"></div>
<div style="left:1503.7px;top:67.6px;width:1.5px;height:5.6px;background:#111;"></div>
<div style="left:1349.4px;top:81.4px;width:159.4px;height:2.1px;background:#a6a6a6;"></div>
<div style="left:1349.4px;top:76.8px;width:1.3px;height:4.6px;background:#ffffff;"></div>
<div style="left:1360.68px;top:79px;width:1.3px;height:2.4px;background:#ffffff;"></div>
<div style="left:1371.96px;top:79px;width:1.3px;height:2.4px;background:#ffffff;"></div>
<div style="left:1383.24px;top:79px;width:1.3px;height:2.4px;background:#ffffff;"></div>
<div style="left:1394.51px;top:79px;width:1.3px;height:2.4px;background:#ffffff;"></div>
<div style="left:1405.79px;top:79px;width:1.3px;height:2.4px;background:#ffffff;"></div>
<div style="left:1417.07px;top:79px;width:1.3px;height:2.4px;background:#ffffff;"></div>
<div style="left:1428.35px;top:79px;width:1.3px;height:2.4px;background:#ffffff;"></div>
<div style="left:1439.63px;top:79px;width:1.3px;height:2.4px;background:#ffffff;"></div>
<div style="left:1450.91px;top:79px;width:1.3px;height:2.4px;background:#ffffff;"></div>
<div style="left:1462.19px;top:79px;width:1.3px;height:2.4px;background:#ffffff;"></div>
<div style="left:1473.46px;top:79px;width:1.3px;height:2.4px;background:#ffffff;"></div>
<div style="left:1484.74px;top:79px;width:1.3px;height:2.4px;background:#ffffff;"></div>
<div style="left:1496.02px;top:79px;width:1.3px;height:2.4px;background:#ffffff;"></div>
<div style="left:1507.3px;top:76.8px;width:1.3px;height:4.6px;background:#ffffff;"></div>
<svg style="left:1395.9px;top:75.3px;" width="14" height="14" viewBox="0 0 14 14"><circle cx="7" cy="7" r="3.75" stroke="#5252f0" stroke-width="4.2" fill="#b0b0c8"/></svg>
<div style="left:1518.6px;top:62px;width:1px;height:30px;background:#d4d4d4;"></div>
<div style="left:1521px;top:62px;width:1px;height:30px;background:#f0f0f0;"></div>
<div id="ruler" style="left:0;top:94px;width:1600px;height:34px;">
<div style="left:0px;top:0px;width:1598px;height:32px;background:#e6e6e6;"></div>
<div style="left:1598px;top:0px;width:1.2px;height:33px;background:#bdbdbd;"></div>
<div style="left:0px;top:0px;width:11px;height:31.6px;background:#e3e3e3;border-right:1px solid #d0d0d0;"></div>
<div style="left:14px;top:0.8px;width:31.6px;height:30.6px;background:#bdc8df;box-shadow:inset 1px 1px 0 #98a3bd, inset -1.2px -1px 0 #f4f4ea;"></div>
<svg style="left:14px;top:0.8px;" width="31.6" height="30.6" viewBox="0 0 31.6 30.6"><path d="M10.2 5.8 H24.2 Q25.2 5.9 24.8 6.9 L24.2 8.4 Q23.9 9 23 9 H21.6 Q20.4 12.8 22 16.2 H23.2 Q24.2 16.3 24.3 17.2 L24.4 18.2 Q24.4 19.1 23.4 19.1 H11 Q10 19.1 10 18.2 L10.1 17.2 Q10.2 16.3 11.2 16.2 H12.4 Q14 12.8 12.8 9 H11.4 Q10.5 9 10.2 8.4 L9.6 6.9 Q9.2 5.9 10.2 5.8 Z" fill="#6ee06e" stroke="#2f7d39" stroke-width="1"/><path d="M11.6 7.9 H22.8 M11.8 16.9 H22.6" stroke="#e6fbe2" stroke-width="0.9"/><path d="M15.8 19.3 H18.6 L17.6 25.4 L17.2 26.4 L16.8 25.4 Z" fill="#8be08b" stroke="#2f7d39" stroke-width="0.8"/></svg>
<div style="left:50.9167px;top:27.8px;width:1.2px;height:3.8px;background:#222;"></div>
<div style="left:145px;top:1.6px;width:1px;height:30.2px;background:#111;"></div>
<div style="left:146px;top:1.6px;width:1px;height:30.2px;background:#a8a8a8;"></div>
<div style="left:239.883px;top:27.8px;width:1.2px;height:3.8px;background:#222;"></div>
<div style="left:334.367px;top:27.8px;width:1.2px;height:3.8px;background:#222;"></div>
<div style="left:428.85px;top:25.6px;width:1.3px;height:6px;background:#111;"></div>
<div style="left:523.333px;top:27.8px;width:1.2px;height:3.8px;background:#222;"></div>
<div style="left:617.817px;top:27.8px;width:1.2px;height:3.8px;background:#222;"></div>
<div style="left:712.3px;top:25.6px;width:1.3px;height:6px;background:#111;"></div>
<div style="left:806.783px;top:27.8px;width:1.2px;height:3.8px;background:#222;"></div>
<div style="left:901.267px;top:27.8px;width:1.2px;height:3.8px;background:#222;"></div>
<div style="left:995.75px;top:25.6px;width:1.3px;height:6px;background:#111;"></div>
<div style="left:1090.23px;top:27.8px;width:1.2px;height:3.8px;background:#222;"></div>
<div style="left:1184.72px;top:27.8px;width:1.2px;height:3.8px;background:#222;"></div>
<div style="left:1279.2px;top:25.6px;width:1.3px;height:6px;background:#111;"></div>
<div style="left:1373.68px;top:27.8px;width:1.2px;height:3.8px;background:#222;"></div>
<div style="left:1468.17px;top:27.8px;width:1.2px;height:3.8px;background:#222;"></div>
<div style="left:1562.65px;top:25.6px;width:1.3px;height:6px;background:#111;"></div>
<div class="t" style="left:145.2px;top:8.66px;font-size:8.8px;line-height:8.8px;letter-spacing:-0.494px;font-weight:bold;">0</div>
<div class="t" style="left:424.96px;top:8.66px;font-size:8.8px;line-height:8.8px;letter-spacing:0.392px;font-weight:bold;">15</div>
<div class="t" style="left:708.41px;top:8.66px;font-size:8.8px;line-height:8.8px;letter-spacing:0.392px;font-weight:bold;">30</div>
<div class="t" style="left:991.86px;top:8.66px;font-size:8.8px;line-height:8.8px;letter-spacing:0.392px;font-weight:bold;">45</div>
<div class="t" style="left:1271.24px;top:8.66px;font-size:8.8px;line-height:8.8px;letter-spacing:0.235px;font-weight:bold;">1:00</div>
<div class="t" style="left:1554.69px;top:8.66px;font-size:8.8px;line-height:8.8px;letter-spacing:0.235px;font-weight:bold;">1:15</div>
<svg style="left:145px;top:16px;" width="9" height="16" viewBox="0 0 9 16"><path d="M7.4 1.4 V14.4 L1.8 7.9 Z" fill="#c4c4c4" stroke="#8a8a8a" stroke-width="0.8"/></svg>
<div style="left:0px;top:31.8px;width:1600px;height:2.2px;background:#1e1e1e;"></div>
</div>
<div id="trackpanel" style="left:0;top:128px;width:1582.5px;height:646px;background:#636583;overflow:hidden;">
<div style="left:1px;top:1px;width:1581.3px;height:352.2px;background:#f4f486;box-shadow:inset 0 0 0 0.6px #d6d68a;"></div>
<div style="left:4.6px;top:4.5px;width:1574px;height:345px;background:#0c0c10;"></div>
<div style="left:1px;top:353px;width:1581px;height:1px;background:#b4b586;"></div>
<div style="left:6px;top:6px;width:110.4px;height:340.5px;background:#d7e4fb;"></div>
<div style="left:116.3px;top:6px;width:1px;height:340.6px;background:#111;"></div>
<div style="left:117.2px;top:6px;width:27.6px;height:340.6px;background:#d7e4fb;"></div>
<div style="left:144.8px;top:6.6px;width:1430.2px;height:165.4px;background:#c0c0c0;"></div>
<div style="left:144.8px;top:181.2px;width:1430.2px;height:165.3px;background:#c0c0c0;"></div>
<div style="left:1398.8px;top:6.6px;width:176.2px;height:165.4px;background:#d6d6d6;"></div>
<div style="left:1398.8px;top:181.2px;width:176.2px;height:165.3px;background:#d6d6d6;"></div>
<div style="left:1398px;top:6.6px;width:1px;height:165.4px;background:#7e7e7e;"></div>
<div style="left:1398px;top:181.2px;width:1px;height:165.3px;background:#7e7e7e;"></div>
<div style="left:144.8px;top:172px;width:1430.2px;height:9.2px;background:#0c0c10;"></div>
<div style="left:146px;top:173px;width:1429px;height:7.2px;background:#646684;"></div>
<div style="left:117.2px;top:171.8px;width:27.6px;height:1px;background:#8c8c8c;"></div>
<div style="left:117.2px;top:179.8px;width:27.6px;height:1.2px;background:#fbfbfb;"></div>
<div style="left:144.8px;top:6.6px;width:1.3px;height:165.4px;background:#3a1414;"></div>
<div style="left:144.8px;top:181.2px;width:1.3px;height:165.3px;background:#3a1414;"></div>
<svg style="left:0;top:6px;" width="1582" height="342" viewBox="0 0 1582 342" shape-rendering="crispEdges">
<path fill="#3232c8" d="M146 56V56h1V56h1V55.9h1V50.4h1V50h1V52.8h1V45.5h1V44.5h1V45.6h1V27.6h1V39h1V39.5h1V36.8h1V40.3h1V48.8h1V48.5h1V38.3h1V39.1h1V34.1h1V25.6h1V42.6h1V46.9h1V54.7h1V64h1V68h1V68h1V70.1h1V71.3h1V73.7h1V75.8h1V75.7h1V73.8h1V72h1V68.6h1V62.4h1V58.9h1V56.4h1V59.1h1V60.9h1V56.3h1V56.4h1V53.2h1V47.4h1V45.2h1V33.5h1V11.6h1V38.2h1V48.3h1V44.2h1V36.1h1V36.4h1V47.1h1V45.7h1V39.5h1V43.4h1V43.2h1V38h1V32.8h1V30.8h1V31.4h1V37.1h1V41h1V38.5h1V44.1h1V50.5h1V49h1V48.6h1V50.1h1V51.7h1V49.1h1V42.4h1V46.2h1V57.5h1V61.2h1V64.8h1V71.3h1V72.1h1V74.4h1V76.4h1V77h1V75.5h1V76.4h1V76.4h1V75h1V75.4h1V76.2h1V75.6h1V74.7h1V74.4h1V75.3h1V75.2h1V75.1h1V75.4h1V74.6h1V74.1h1V75.1h1V76.2h1V75.7h1V75.4h1V75.5h1V76.6h1V74.3h1V69.9h1V67.7h1V62.5h1V60.9h1V55.3h1V45.8h1V44.9h1V42.4h1V34.8h1V35.1h1V36h1V25h1V12.6h1V31.1h1V37.6h1V43.6h1V41.3h1V37.5h1V37.2h1V38.7h1V40.4h1V37h1V20.6h1V33.2h1V37.2h1V49.6h1V59.1h1V63.1h1V71.2h1V75.5h1V77.5h1V77.2h1V76.7h1V77.4h1V77.2h1V76.3h1V76.3h1V76.6h1V76.6h1V77.6h1V78.4h1V68.4h1V57.1h1V54.9h1V55.3h1V53h1V50.1h1V41.3h1V41.3h1V39h1V26.6h1V43.1h1V47.7h1V46.7h1V46.2h1V44.9h1V47.3h1V46.8h1V47.5h1V41h1V30.3h1V27.2h1V24.6h1V32.1h1V34.1h1V29h1V31.1h1V39.5h1V39.4h1V44.7h1V48.1h1V47.2h1V47.4h1V44.6h1V36.4h1V43.3h1V54.4h1V61.4h1V69.6h1V77h1V78.3h1V79.1h1V79.8h1V80.2h1V80.1h1V80.1h1V80.2h1V80h1V79.7h1V79.7h1V79.6h1V79.7h1V79.7h1V79.5h1V79.5h1V79.6h1V66.6h1V69.3h1V75.2h1V79.7h1V79.4h1V79h1V79.7h1V80h1V79.7h1V79.5h1V79.7h1V62.8h1V60.7h1V54.6h1V48.1h1V47.9h1V46.4h1V37.3h1V39.1h1V44.4h1V25.6h1V40.8h1V48.1h1V44.8h1V45.8h1V53.4h1V49.1h1V44.3h1V47.1h1V38.8h1V36.6h1V27.6h1V37.9h1V44.4h1V51.1h1V60h1V65.3h1V70.7h1V75.2h1V76.4h1V77.1h1V75.2h1V71.4h1V68.3h1V65.2h1V61.2h1V58.1h1V56.4h1V54.2h1V54h1V56.8h1V53h1V53.9h1V50.6h1V50.5h1V53.9h1V36.3h1V13.6h1V43.5h1V47.6h1V49.5h1V47.8h1V49.2h1V52h1V49.7h1V42h1V40.9h1V37.8h1V43.7h1V42.5h1V32.6h1V47.5h1V44.7h1V44.4h1V52.5h1V51h1V47.7h1V53.1h1V50.9h1V51.5h1V50.5h1V49.6h1V46.6h1V58.9h1V62.8h1V66.7h1V69.4h1V74.6h1V76h1V76.1h1V77.4h1V79h1V78.3h1V77.8h1V75.8h1V74.7h1V75.3h1V73.4h1V72.2h1V74.1h1V75.2h1V75.3h1V75h1V75.8h1V76.7h1V75.5h1V74.2h1V72h1V68.3h1V64.6h1V66.1h1V67.8h1V68.2h1V68.3h1V68h1V65.8h1V62.8h1V57.5h1V55.5h1V50.6h1V38.9h1V34.3h1V37.3h1V32.5h1V19.6h1V41.4h1V45.3h1V41.5h1V41.7h1V46.5h1V49.9h1V51.7h1V49h1V49.3h1V48.7h1V41.9h1V40.5h1V33.6h1V43.6h1V53.6h1V62h1V66.7h1V73.1h1V76.9h1V77h1V75.8h1V76.1h1V76.9h1V76.1h1V75.8h1V77h1V77.9h1V78.4h1V79.9h1V68h1V56.4h1V59.2h1V55.4h1V49.7h1V42.2h1V34.4h1V40.2h1V42.9h1V25.6h1V35.5h1V42.4h1V45.2h1V54.4h1V55.2h1V56.8h1V56.5h1V51.7h1V44h1V41.5h1V44.1h1V34.6h1V49.5h1V50.2h1V52.5h1V49.6h1V52h1V54.1h1V56.1h1V55.5h1V54h1V52.9h1V48.3h1V49.5h1V46.5h1V39.6h1V55.6h1V61.7h1V70.9h1V76.1h1V77.5h1V78.5h1V79.2h1V79.9h1V80.1h1V80h1V80.5h1V80.5h1V80.8h1V81h1V81h1V81.1h1V81.3h1V81.3h1V81.3h1V81h1V81.2h1V81.5h1V81.5h1V81.4h1V81.4h1V81.4h1V81.4h1V81.4h1V81.7h1V0.6h1V0.6h1V0.6h1V0.6h1V0.6h1V0.6h1V0.6h1V0.6h1V0.6h1V8.6h1V0.6h1V0.6h1V0.6h1V3.8h1V13.2h1V14.5h1V14.3h1V26.7h1V13.4h1V16h1V24.6h1V14.2h1V16.8h1V26.7h1V35.6h1V49.9h1V46.9h1V1.6h1V52.8h1V56.9h1V59.3h1V61.7h1V61.8h1V58.4h1V53.2h1V52.5h1V55.8h1V57.7h1V60.6h1V62.4h1V0.6h1V0.6h1V0.6h1V0.6h1V1.7h1V0.6h1V0.6h1V0.6h1V2h1V0.6h1V7.8h1V0.6h1V0.6h1V0.6h1V5.8h1V11.3h1V24.8h1V16.1h1V15.9h1V12.8h1V15.9h1V13.4h1V16.3h1V20.7h1V22.7h1V23.8h1V26.5h1V30.8h1V40h1V44.9h1V53.2h1V0.6h1V0.6h1V54.3h1V58.1h1V60.4h1V62.9h1V64.5h1V68h1V70h1V11.6h1V73.2h1V75h1V75h1V74.9h1V74.5h1V74.5h1V74.9h1V75.1h1V74.4h1V74.9h1V75.1h1V45.2h1V8.3h1V5.5h1V6.4h1V3h1V5h1V21.8h1V10.7h1V25.4h1V15.7h1V13.6h1V11.3h1V4.7h1V3.3h1V2.3h1V3.2h1V4.1h1V3.6h1V2.8h1V15.3h1V4.7h1V6.2h1V4.8h1V3.8h1V5.2h1V0.6h1V4.5h1V5.9h1V26.8h1V21.5h1V25.6h1V23.5h1V24.1h1V24.4h1V27.2h1V30.7h1V34.9h1V41.2h1V42.1h1V47h1V1.6h1V53.4h1V57.9h1V59.1h1V60.3h1V60.8h1V61.4h1V62.8h1V64h1V64.5h1V66.7h1V65.8h1V65.9h1V0.6h1V0.6h1V0.6h1V5.5h1V14.1h1V17.8h1V19.5h1V16.4h1V7.8h1V9.5h1V9.2h1V14.6h1V16.8h1V14h1V21.9h1V22.3h1V19h1V14.5h1V11.2h1V9.8h1V3.9h1V8.3h1V10.5h1V14h1V28.2h1V20.8h1V23.5h1V29.3h1V31.6h1V34.6h1V33.9h1V31h1V27.9h1V21.5h1V26.6h1V39.7h1V55.9h1V65.2h1V67.1h1V10.6h1V73.6h1V74.4h1V75.7h1V76h1V75.7h1V75.9h1V75.4h1V75.7h1V75.4h1V76h1V75.5h1V76.6h1V5.5h1V0.6h1V0.6h1V0.6h1V7.4h1V0.6h1V0.6h1V0.6h1V21.2h1V30.2h1V25h1V16.9h1V6.1h1V0.6h1V0.6h1V0.6h1V0.6h1V1.2h1V0.6h1V0.6h1V2.8h1V0.6h1V0.6h1V0.6h1V0.6h1V0.6h1V8.1h1V6.9h1V14.4h1V18h1V24.5h1V19.7h1V19.5h1V28.9h1V27.1h1V33.1h1V38.4h1V43.4h1V52.9h1V64.2h1V0.6h1V0.6h1V0.6h1V0.6h1V0.6h1V3.2h1V5.6h1V8.5h1V15h1V18.9h1V17.5h1V21.4h1V35.7h1V15.8h1V8.3h1V0.6h1V0.6h1V0.6h1V0.6h1V0.6h1V0.6h1V0.6h1V0.6h1V0.6h1V0.6h1V6.1h1V3.7h1V7.6h1V9.6h1V13.3h1V18.8h1V22.4h1V17.7h1V9.6h1V7.9h1V14.6h1V20h1V30.6h1V36.9h1V38h1V0.6h1V0.6h1V0.6h1V0.6h1V1.8h1V0.6h1V0.6h1V0.6h1V1.6h1V10.1h1V14.4h1V16.9h1V20.2h1V10.2h1V3.9h1V4.9h1V5h1V3.5h1V3.7h1V7.9h1V11.5h1V17h1V19.1h1V27.8h1V29.5h1V35h1V38.4h1V38.7h1V42.4h1V42.4h1V43.9h1V47.2h1V48.3h1V50.5h1V54h1V59.7h1V65.4h1V67.3h1V0.6h1V0.6h1V0.6h1V0.6h1V0.6h1V0.6h1V0.6h1V0.6h1V0.6h1V0.6h1V0.6h1V2.6h1V4.8h1V12.3h1V19.7h1V22.9h1V22.9h1V22.7h1V24.7h1V22.3h1V15.8h1V19.2h1V13.6h1V25h1V45.6h1V53.7h1V54.5h1V0.6h1V60.5h1V54.9h1V56.8h1V58.4h1V59.1h1V59.7h1V60.3h1V62.3h1V66.7h1V65.6h1V67.6h1V68.3h1V0.6h1V3.7h1V0.6h1V0.6h1V0.6h1V1.2h1V9.4h1V11h1V12.5h1V13.9h1V15.9h1V7.9h1V20.9h1V17h1V26.3h1V28.6h1V24.9h1V23.5h1V32.8h1V21.1h1V17.3h1V18.6h1V24.3h1V20.7h1V22.2h1V28.3h1V33.7h1V37.7h1V40h1V43.4h1V37.9h1V38.8h1V37.3h1V32.7h1V36.4h1V53.5h1V59.4h1V67.5h1V73.8h1V0.6h1V0.6h1V0.6h1V1h1V4.7h1V13.2h1V18.7h1V23.2h1V27.5h1V30.9h1V39.1h1V49.2h1V45.9h1V0.6h1V0.6h1V45.4h1V46.7h1V0.6h1V0.6h1V59h1V62.3h1V67.5h1V71h1V74.8h1V76.6h1V77.5h1V5.9h1V0.6h1V0.6h1V6.1h1V0.6h1V0.6h1V0.6h1V0.6h1V4.1h1V0.6h1V0.6h1V4.1h1V0.6h1V4h1V9h1V28.2h1V18.6h1V14.4h1V15h1V12.4h1V18.1h1V21.4h1V22.8h1V31.4h1V43.1h1V46.4h1V0.6h1V58h1V63.3h1V65.7h1V59.7h1V59.4h1V57.6h1V53.7h1V54.7h1V56.1h1V57.3h1V59.2h1V67.3h1V72.3h1V0.6h1V0.6h1V0.6h1V0.6h1V0.6h1V0.6h1V0.6h1V0.6h1V0.6h1V0.6h1V8h1V7.4h1V5.1h1V10.1h1V11.4h1V15.8h1V20.2h1V14.2h1V24.2h1V17.8h1V15.6h1V17h1V19.4h1V18.3h1V23.5h1V35.7h1V29.8h1V34.9h1V40h1V43.6h1V0.6h1V0.6h1V47.4h1V50.8h1V51.7h1V63.9h1V67h1V73.7h1V73.5h1V10.6h1V75.2h1V76.1h1V75.5h1V76.1h1V75.8h1V75.7h1V76.5h1V75.4h1V75.9h1V75.5h1V75.9h1V75.7h1V0.6h1V0.6h1V13.3h1V4.3h1V8.7h1V13.8h1V16.3h1V16.1h1V26.7h1V14.2h1V21.9h1V15.3h1V0.6h1V0.6h1V0.6h1V0.6h1V5.9h1V0.6h1V0.6h1V0.6h1V0.6h1V0.6h1V0.6h1V6.2h1V0.6h1V0.6h1V6.3h1V10.5h1V30h1V28.4h1V23h1V26.7h1V26.9h1V26.5h1V36.1h1V47.8h1V49.1h1V51.6h1V55.5h1V0.6h1V57.5h1V60.2h1V62.1h1V66h1V61.9h1V62.8h1V64.5h1V64.2h1V65.8h1V68.9h1V70.3h1V72.2h1V0.6h1V0.6h1V0.6h1V1.1h1V0.6h1V7.7h1V8.6h1V6.3h1V10.5h1V8.9h1V14.7h1V21.9h1V24.8h1V22.3h1V22.3h1V23.3h1V23.5h1V18.3h1V15.1h1V9.3h1V22.6h1V22.2h1V10.9h1V15.8h1V16.3h1V24.8h1V34.6h1V48h1V43.3h1V45.5h1V0.6h1V0.6h1V0.6h1V51.3h1V53.4h1V57h1V61.4h1V65.3h1V70.7h1V71.9h1V19.6h1V74.2h1V75.8h1V75.5h1V75.7h1V76.5h1V76.1h1V77h1V75.4h1V75.6h1V75.4h1V76.9h1V75.7h1V0.6h1V0.6h1V0.6h1V0.6h1V0.6h1V6.6h1V16.3h1V25h1V30.4h1V32.4h1V30.6h1V18.4h1V8.1h1V7.7h1V5.9h1V8.2h1V6.3h1V11h1V11.8h1V11.4h1V8.1h1V11.4h1V7.1h1V7.9h1V8.4h1V14.1h1V16.5h1V18.4h1V17.4h1V21.2h1V22.3h1V24.6h1V34.7h1V32.9h1V44.1h1V38.3h1V49.3h1V55.6h1V64.4h1V15h1V13.1h1V16.4h1V20.9h1V18.1h1V24.2h1V27.8h1V29.5h1V29.7h1V32h1V43.8h1V42.9h1V50.3h1V20.6h1V20.8h1V19.5h1V18.7h1V23.3h1V23.4h1V33.2h1V24.2h1V26.7h1V25.3h1V23.3h1V27.1h1V32.1h1V33.4h1V44.2h1V37.4h1V40.6h1V40.7h1V38.1h1V27.9h1V30.3h1V40.5h1V48.6h1V59.1h1V63.3h1V41.8h1V30.1h1V33h1V31.7h1V30.7h1V31.5h1V32h1V40.4h1V42.6h1V39.3h1V50.6h1V52.6h1V51.2h1V39.5h1V35h1V33.9h1V34.3h1V35.8h1V40.1h1V43.1h1V45.1h1V46.6h1V47.4h1V50h1V52.8h1V55.4h1V56.3h1V59.7h1V48.1h1V60.7h1V64.6h1V63h1V64.7h1V69.4h1V69.5h1V68.8h1V71.2h1V71.8h1V73.4h1V73.6h1V45.8h1V45.9h1V45.9h1V45.5h1V52.6h1V47.1h1V48.2h1V52.2h1V46.4h1V47.4h1V49.5h1V46.7h1V52.6h1V57.4h1V59.2h1V59h1V59.5h1V58.2h1V58h1V58.1h1V57.8h1V58.2h1V58.6h1V62.3h1V66.8h1V71.3h1V71.4h1V55h1V72.3h1V73h1V74.5h1V76.1h1V76.5h1V76.4h1V76.9h1V78.1h1V78.1h1V78.3h1V78.8h1V59.9h1V58.7h1V60h1V61h1V61.8h1V62h1V62.4h1V63.3h1V64.1h1V65h1V65h1V66.3h1V68.9h1V66.6h1V66.7h1V68.2h1V67.2h1V66.8h1V67.1h1V67h1V67.6h1V67.3h1V70h1V72h1V73.2h1V74.7h1V75.1h1V74.2h1V72.7h1V71.1h1V70.8h1V70.5h1V72.2h1V73.8h1V76.6h1V77.1h1V78h1V78.6h1V79.2h1V80.3h1V80.6h1V81.1h1V81.3h1V81.3h1V81.3h1V81.3h1V81.4h1V81.4h1V81.4h1V81.6h1V81.6h1V81.5h1V81.7h1V81.8h1V81.7h1V81.8h1V81.8h1V81.8h1V81.9h1V81.9h1V81.9h1V82h1V82h1V83.2h-1V83.2h-1V83.3h-1V83.3h-1V83.3h-1V83.4h-1V83.4h-1V83.5h-1V83.5h-1V83.6h-1V83.5h-1V83.6h-1V83.7h-1V83.6h-1V83.7h-1V83.6h-1V83.8h-1V83.8h-1V83.8h-1V83.7h-1V83.9h-1V84.1h-1V84.8h-1V85.4h-1V86.1h-1V86.4h-1V87.2h-1V87.9h-1V89.3h-1V90h-1V92.9h-1V93.8h-1V95.5h-1V93.7h-1V92.7h-1V91.2h-1V89.8h-1V89.9h-1V92h-1V94.3h-1V96.2h-1V97h-1V98.4h-1V99.2h-1V98.1h-1V98.1h-1V98.5h-1V98.1h-1V98.7h-1V99.7h-1V99.3h-1V99.5h-1V100.4h-1V100.7h-1V100.8h-1V102.1h-1V98.9h-1V102.2h-1V102.7h-1V103.4h-1V105.2h-1V104.7h-1V105.1h-1V86.4h-1V86.6h-1V87.1h-1V87.4h-1V88.3h-1V88.4h-1V89.1h-1V89.2h-1V90.9h-1V90.7h-1V93.2h-1V106.8h-1V93.1h-1V92.9h-1V97.7h-1V102.9h-1V104.3h-1V108.1h-1V106.9h-1V107.1h-1V107.1h-1V106.5h-1V105h-1V105.2h-1V105.1h-1V108.9h-1V108.1h-1V115.7h-1V110.6h-1V117.9h-1V118.9h-1V117h-1V118.4h-1V116.9h-1V119.2h-1V117.3h-1V119.4h-1V112.4h-1V119.2h-1V91.3h-1V91.8h-1V92.7h-1V94.5h-1V96.1h-1V97.4h-1V98.1h-1V99.4h-1V98.7h-1V102.6h-1V100.9h-1V119.2h-1V105.3h-1V108.2h-1V111.2h-1V113.1h-1V114.5h-1V112.6h-1V112.6h-1V121h-1V125.2h-1V125.5h-1V126.7h-1V130.9h-1V134.5h-1V131.1h-1V125.4h-1V118.3h-1V116.1h-1V122.8h-1V117.6h-1V127.7h-1V129.1h-1V124.9h-1V133h-1V126.6h-1V133.7h-1V135.4h-1V133.5h-1V121.5h-1V104.7h-1V106.1h-1V114.5h-1V126h-1V127.1h-1V135.3h-1V128h-1V122.6h-1V125.4h-1V129.6h-1V128.1h-1V134.3h-1V134.4h-1V136.3h-1V142.2h-1V131.9h-1V143.2h-1V144h-1V144.7h-1V141.3h-1V142.7h-1V145.1h-1V137h-1V144.7h-1V147.1h-1V116.1h-1V114.2h-1V129.1h-1V132.3h-1V133.2h-1V135.9h-1V140.6h-1V144h-1V145.2h-1V143.7h-1V148h-1V153.7h-1V156.7h-1V101.3h-1V109h-1V117.8h-1V124.6h-1V129.5h-1V135.6h-1V136.1h-1V143.5h-1V133.6h-1V145.2h-1V148h-1V147.7h-1V149.1h-1V153.7h-1V155.8h-1V160h-1V157.6h-1V154.7h-1V159.4h-1V155.1h-1V147.4h-1V153.5h-1V154.5h-1V155.2h-1V157.3h-1V158.7h-1V160.9h-1V148.2h-1V133.1h-1V133.5h-1V136.8h-1V143.4h-1V149.5h-1V156.3h-1V164.6h-1V164.6h-1V164.6h-1V164.6h-1V159.1h-1V89.6h-1V89.5h-1V89.4h-1V89.3h-1V89.6h-1V89.1h-1V89.2h-1V89.1h-1V89.5h-1V89.4h-1V89.6h-1V90.7h-1V145.6h-1V93.5h-1V95.2h-1V99.3h-1V104h-1V108.4h-1V110.5h-1V106.8h-1V164.6h-1V164.6h-1V164.6h-1V119.8h-1V121.5h-1V116.4h-1V134.5h-1V140.9h-1V151.5h-1V150.5h-1V154h-1V153.5h-1V157.8h-1V151.2h-1V147.9h-1V147.5h-1V143.8h-1V144.3h-1V142.7h-1V142.9h-1V144.2h-1V147h-1V148.3h-1V154.9h-1V157.1h-1V156.4h-1V162.8h-1V164h-1V164.6h-1V164.6h-1V164.6h-1V164.6h-1V164.6h-1V93.7h-1V92.6h-1V97.3h-1V99.3h-1V97.4h-1V101.9h-1V102.7h-1V101.9h-1V102.4h-1V104h-1V103.9h-1V107.8h-1V164.6h-1V111.8h-1V109.6h-1V116.2h-1V122.4h-1V130.5h-1V139.7h-1V130.7h-1V140.9h-1V134.2h-1V143h-1V147.9h-1V154.3h-1V160h-1V164.6h-1V164.6h-1V160.8h-1V164.6h-1V164.6h-1V158.8h-1V164.6h-1V161.2h-1V164.6h-1V164.6h-1V164.6h-1V164.6h-1V164.6h-1V162h-1V161.4h-1V160.1h-1V157.2h-1V152.3h-1V150.7h-1V148.6h-1V145.4h-1V156.4h-1V162h-1V163.1h-1V164.6h-1V164.6h-1V89.5h-1V89.1h-1V89.3h-1V89.4h-1V89.4h-1V89.4h-1V89.7h-1V89.1h-1V89.5h-1V89.8h-1V89.6h-1V88.8h-1V154.6h-1V91.7h-1V92.6h-1V97.6h-1V105.2h-1V111.9h-1V114.4h-1V116.1h-1V164.6h-1V164.6h-1V122.7h-1V124.1h-1V127.3h-1V131.2h-1V136.1h-1V142.8h-1V146.7h-1V146.2h-1V147h-1V148h-1V142.8h-1V147.9h-1V145.1h-1V149.1h-1V148.7h-1V152.9h-1V154.8h-1V158.8h-1V161h-1V157.8h-1V164.6h-1V164.6h-1V164.6h-1V164.6h-1V164.6h-1V164.6h-1V164.6h-1V164.6h-1V164.6h-1V157h-1V93.1h-1V97.1h-1V104.4h-1V107.9h-1V107.7h-1V109.3h-1V109.4h-1V107.4h-1V106.9h-1V103.7h-1V101.8h-1V99.4h-1V106.9h-1V164.6h-1V117.2h-1V121.7h-1V129.8h-1V141.6h-1V144.2h-1V148.9h-1V151.5h-1V137.4h-1V147.7h-1V147.5h-1V147h-1V156h-1V157.1h-1V164.6h-1V164.2h-1V164.6h-1V164.6h-1V164.6h-1V159.3h-1V164.6h-1V164.6h-1V164.6h-1V164.6h-1V164.6h-1V164.6h-1V164.6h-1V87.3h-1V88.6h-1V90.5h-1V94.1h-1V98.1h-1V101.8h-1V106.2h-1V164.6h-1V164.6h-1V112.3h-1V119.8h-1V164.6h-1V164.6h-1V118.2h-1V123.6h-1V128.7h-1V133.3h-1V136.6h-1V134.3h-1V141.2h-1V150.5h-1V158h-1V164.2h-1V164.6h-1V156.8h-1V164.6h-1V91.4h-1V97.8h-1V102.1h-1V116.3h-1V128h-1V132.7h-1V130.1h-1V119.1h-1V125.2h-1V123.6h-1V119.2h-1V126.9h-1V134.7h-1V136.4h-1V143.8h-1V140.9h-1V140.9h-1V142.5h-1V143.3h-1V145.9h-1V145.2h-1V143.5h-1V138.5h-1V137.3h-1V141.6h-1V148.5h-1V156.7h-1V151.4h-1V155.5h-1V148.2h-1V151h-1V157.6h-1V156.4h-1V160.8h-1V159.5h-1V164.6h-1V164.6h-1V164.6h-1V164.6h-1V94.7h-1V98.1h-1V99.5h-1V98.7h-1V100.5h-1V104.6h-1V104.1h-1V107.2h-1V107.9h-1V104.5h-1V108.6h-1V108.7h-1V164.6h-1V109.4h-1V111.1h-1V126.3h-1V137.5h-1V151.5h-1V149h-1V143.1h-1V146.4h-1V141.6h-1V144.5h-1V142.4h-1V140.3h-1V135h-1V153.3h-1V158.9h-1V164.6h-1V164.6h-1V164.6h-1V164.6h-1V164.6h-1V164.6h-1V164.6h-1V164.6h-1V164.6h-1V156.9h-1V164.6h-1V164.6h-1V94.8h-1V99.7h-1V104.4h-1V111.5h-1V114.7h-1V118.2h-1V120h-1V121.5h-1V120.9h-1V116.5h-1V124.3h-1V120.5h-1V132.1h-1V137.8h-1V140.1h-1V144.7h-1V147.9h-1V150.5h-1V156.2h-1V161.9h-1V163.6h-1V164.6h-1V163.1h-1V164.6h-1V153.3h-1V142.2h-1V148.8h-1V150.9h-1V157.4h-1V161.5h-1V158.5h-1V160.6h-1V157.4h-1V164.6h-1V164.6h-1V164.6h-1V164.6h-1V164.6h-1V127.9h-1V129.2h-1V136.6h-1V144.4h-1V148.7h-1V143.9h-1V155.4h-1V149.2h-1V141.7h-1V147.5h-1V139.5h-1V155.2h-1V148h-1V162.7h-1V163.9h-1V164.6h-1V164.6h-1V164.6h-1V164.6h-1V164.6h-1V161.6h-1V164.6h-1V164.6h-1V161.5h-1V164.6h-1V161.7h-1V148.2h-1V141.7h-1V143.8h-1V147.3h-1V145.3h-1V150.2h-1V153.8h-1V155.3h-1V164.6h-1V164.6h-1V164.6h-1V164.6h-1V160.6h-1V164.6h-1V100.2h-1V110.3h-1V121.5h-1V126.4h-1V132.3h-1V140.2h-1V144h-1V147.1h-1V146.2h-1V151.2h-1V148.2h-1V152.5h-1V161.9h-1V164.6h-1V164.6h-1V164.6h-1V164.6h-1V164.6h-1V164.6h-1V160.1h-1V164.6h-1V164.6h-1V164.6h-1V164.6h-1V164.6h-1V156.5h-1V164.6h-1V159h-1V152.1h-1V140h-1V127.7h-1V144.3h-1V164.6h-1V164.6h-1V164.6h-1V164.6h-1V164.6h-1V164.6h-1V164.6h-1V164.6h-1V89.1h-1V89.6h-1V88.7h-1V89.2h-1V89.5h-1V89.8h-1V89.3h-1V89.5h-1V89.6h-1V89.2h-1V91h-1V92.6h-1V154.6h-1V97.2h-1V99.8h-1V110.3h-1V123.1h-1V140.1h-1V142.2h-1V138.6h-1V133.6h-1V130.1h-1V128.6h-1V133.7h-1V136.3h-1V137.6h-1V143h-1V150.2h-1V151.4h-1V156h-1V155.4h-1V157.6h-1V157.1h-1V153.4h-1V148h-1V148.7h-1V144.8h-1V138.3h-1V146.5h-1V148.4h-1V150.9h-1V155.9h-1V161.2h-1V155h-1V155.3h-1V149.6h-1V137.5h-1V157.7h-1V164.6h-1V164.6h-1V164.6h-1V164.6h-1V99.2h-1V100.4h-1V100.8h-1V101.2h-1V102.1h-1V99.5h-1V102.8h-1V104.3h-1V105.3h-1V105.3h-1V109h-1V106.1h-1V163.6h-1V117.7h-1V120.1h-1V124.7h-1V129.2h-1V132.5h-1V138h-1V132.5h-1V141.4h-1V141.5h-1V132.3h-1V141h-1V150.2h-1V159.4h-1V159.5h-1V157.2h-1V162.8h-1V146.5h-1V159.7h-1V160.3h-1V164.6h-1V160.6h-1V160.6h-1V159.3h-1V164.5h-1V160.4h-1V159.9h-1V159.9h-1V158.7h-1V156.3h-1V148.6h-1V151.2h-1V151.8h-1V149.4h-1V152.2h-1V158.5h-1V159.9h-1V148h-1V164.2h-1V162.2h-1V121.1h-1V90.8h-1V90.6h-1V90.2h-1V90.5h-1V90.2h-1V90.6h-1V90.5h-1V90.6h-1V90.3h-1V90.3h-1V92.5h-1V153.6h-1V95.1h-1V95.3h-1V100.3h-1V101.9h-1V105.5h-1V107.5h-1V105.6h-1V164.6h-1V164.6h-1V119.9h-1V121.8h-1V124.6h-1V135.1h-1V139.4h-1V140.9h-1V144.4h-1V144.6h-1V148.6h-1V149.6h-1V155.1h-1V151.4h-1V150.9h-1V148.6h-1V152.1h-1V153.3h-1V151.5h-1V164.6h-1V164.4h-1V164.6h-1V164.6h-1V164.6h-1V164.6h-1V164.6h-1V164.6h-1V164.6h-1V164.6h-1V164.6h-1V164.6h-1V164.6h-1V164.6h-1V102.4h-1V104.3h-1V107.5h-1V109.4h-1V113h-1V111.5h-1V106.9h-1V102.9h-1V99.5h-1V105.4h-1V108.9h-1V111h-1V163.6h-1V118.6h-1V121h-1V130.2h-1V137.6h-1V150.1h-1V153.4h-1V153.7h-1V152.5h-1V152.9h-1V147.1h-1V154.3h-1V151.1h-1V156.2h-1V156.9h-1V164.6h-1V164.6h-1V159.1h-1V164.6h-1V164.6h-1V164.6h-1V162.3h-1V164.6h-1V164.6h-1V164.6h-1V162h-1V164.6h-1V164.6h-1V83.5h-1V83.6h-1V83.7h-1V83.7h-1V83.5h-1V83.6h-1V83.8h-1V83.9h-1V84h-1V84h-1V83.9h-1V84h-1V84.1h-1V84.4h-1V84.7h-1V84.8h-1V84.8h-1V84.9h-1V84.6h-1V84.8h-1V85h-1V84.9h-1V85.4h-1V87h-1V88.7h-1V89.2h-1V94.2h-1V101.1h-1V105.7h-1V126.5h-1V121.9h-1V113.9h-1V115.4h-1V120.2h-1V116.3h-1V112.3h-1V108h-1V110.5h-1V117.9h-1V120h-1V120.3h-1V126.5h-1V128.2h-1V131.6h-1V118.4h-1V116.6h-1V116.5h-1V113.4h-1V115.1h-1V109.3h-1V107.9h-1V114.8h-1V122.6h-1V118.6h-1V118.1h-1V140.7h-1V137.6h-1V130.7h-1V125.7h-1V121.5h-1V117.5h-1V121.4h-1V115.4h-1V111h-1V97.5h-1V84.8h-1V85.4h-1V87h-1V88.2h-1V88.8h-1V91.3h-1V90.2h-1V89.2h-1V89.1h-1V88.3h-1V88h-1V90.9h-1V97.3h-1V101.9h-1V114.3h-1V122.7h-1V132.6h-1V134h-1V125h-1V124.6h-1V120.4h-1V114h-1V114.4h-1V110.6h-1V111h-1V113.6h-1V117.8h-1V124.9h-1V130.7h-1V146.9h-1V147.4h-1V132.5h-1V126.9h-1V129h-1V122.4h-1V114.9h-1V109.7h-1V109h-1V99.8h-1V94h-1V93.7h-1V94.5h-1V95.2h-1V96.4h-1V101h-1V96.7h-1V92.7h-1V91.8h-1V90.2h-1V89.4h-1V89.9h-1V90.8h-1V89.7h-1V89.5h-1V90.7h-1V91.4h-1V90.7h-1V90.9h-1V91.2h-1V89.8h-1V88.8h-1V87.2h-1V85.8h-1V87.3h-1V88.8h-1V89.7h-1V91.4h-1V95.8h-1V100.7h-1V106h-1V108.2h-1V119.3h-1V109.1h-1V113.8h-1V115.2h-1V113.9h-1V112.9h-1V108.1h-1V114.6h-1V118.6h-1V121h-1V131.9h-1V125.8h-1V133.6h-1V127.9h-1V125.2h-1V124.5h-1V124.1h-1V120.4h-1V115.7h-1V121.6h-1V127h-1V127.4h-1V122.6h-1V122.6h-1V129.6h-1V153h-1V133.8h-1V114.8h-1V113.7h-1V109.4h-1V109.9h-1V106.5h-1V107.8h-1V110.8h-1V109.7h-1V108.9h-1V108h-1V106.4h-1V103.8h-1V101.5h-1V95h-1V91.4h-1V88.2h-1V87.7h-1V91h-1V95.7h-1V99.1h-1V103h-1V107.5h-1V115.7h-1V123.5h-1V138.7h-1V123.3h-1V120.8h-1V123.6h-1V126.9h-1V122.8h-1V121.8h-1V121h-1V119.2h-1V121.3h-1V123.7h-1V140.7h-1V136.6h-1V132.9h-1V125.3h-1V125.3h-1V120.1h-1V117.7h-1V113.2h-1V107.8h-1V106.3h-1V85.6h-1V85.4h-1V85.3h-1V85.4h-1V85.5h-1V85.8h-1V85.4h-1V85.5h-1V89.9h-1V94.4h-1V98.9h-1V86h-1V85.5h-1V85.3h-1V85.1h-1V85.1h-1V85.6h-1V86.3h-1V86.3h-1V86.3h-1V86.3h-1V86.3h-1V85.7h-1V85.1h-1V85.1h-1V85.9h-1V87h-1V87.8h-1V93.3h-1V107.3h-1V124.6h-1V126.1h-1V130.7h-1V133.9h-1V128.5h-1V122.3h-1V125.1h-1V129.9h-1V135.3h-1V134.9h-1V131.2h-1V133.6h-1V127.3h-1V122.5h-1V141.8h-1V139.8h-1V137h-1V133.5h-1V130.6h-1V123h-1V116h-1V116.2h-1V113.9h-1V119.8h-1V128.1h-1V131.4h-1V139.7h-1V131.7h-1V135.8h-1V124.8h-1V116.8h-1V113.2h-1V107.4h-1V108.9h-1V111.5h-1V98.2h-1V87.4h-1V87.7h-1V87.5h-1V87.1h-1V87.1h-1V87.3h-1V87.9h-1V88.5h-1V88.3h-1V87.7h-1V87.3h-1V89.7h-1V92.7h-1V100.6h-1V111.9h-1V115.1h-1V123.1h-1V136.4h-1V145.8h-1V138h-1V135.4h-1V128.4h-1V119.5h-1V121.6h-1V120.9h-1V120.5h-1V125.5h-1V137.2h-1V154h-1V136.4h-1V126.6h-1V120h-1V123.4h-1V129.8h-1V118.1h-1V109.9h-1V110.9h-1V112.2h-1V103.4h-1V99h-1V96.7h-1V91.5h-1V89.9h-1V88.8h-1V89.3h-1V90.4h-1V89.9h-1V90.3h-1V91.1h-1V91.4h-1V91.1h-1V90.1h-1V89h-1V89.1h-1V90.3h-1V90.8h-1V89.3h-1V88.5h-1V88.2h-1V88.7h-1V90.1h-1V89.8h-1V88.6h-1V88.3h-1V89.8h-1V92.3h-1V95.2h-1V94.8h-1V99.5h-1V105.8h-1V106.9h-1V112.8h-1V123.4h-1V111.3h-1V113.2h-1V115.3h-1V110.3h-1V113.5h-1V123.1h-1V125.6h-1V121.5h-1V117.4h-1V127.2h-1V136.4h-1V129.6h-1V125.9h-1V130.4h-1V133.3h-1V130.3h-1V128h-1V123.6h-1V118.2h-1V130h-1V127.1h-1V118.7h-1V120.7h-1V139.6h-1V155.5h-1V129.9h-1V112.4h-1V112.5h-1V115.9h-1V116.6h-1V113.5h-1V114.4h-1V110.6h-1V105h-1V100.7h-1V99.8h-1V97.8h-1V95.1h-1V91.6h-1V89h-1V88.9h-1V91.2h-1V92.8h-1V94.2h-1V97.4h-1V101.9h-1V103.7h-1V107.3h-1V115.2h-1V128.7h-1V140.7h-1V132.7h-1V136.4h-1V132h-1V120.7h-1V112.5h-1V121.6h-1V127.8h-1V125.8h-1V129h-1V138.7h-1V125.9h-1V127.9h-1V130.2h-1V129.7h-1V117.7h-1V111.9h-1V113.3h-1V111.2h-1V111h-1Z"/>
<path fill="#6464dc" d="M146 70.2V70.2h1V70.5h1V69.9h1V69.4h1V67.5h1V65.8h1V65.4h1V65.3h1V65.9h1V63.4h1V63.5h1V64.6h1V63.5h1V65.8h1V67.4h1V66.9h1V64.5h1V62.7h1V63h1V62h1V63.9h1V67.9h1V70.5h1V73.3h1V75h1V76.2h1V77h1V77.7h1V78.6h1V79.1h1V79.1h1V78.8h1V77.6h1V76.3h1V74.7h1V74.1h1V72.8h1V71.4h1V71h1V70.9h1V70.1h1V68.7h1V68.5h1V66.9h1V61.8h1V60h1V61.9h1V65.1h1V65.7h1V63.4h1V64.2h1V65.9h1V66.4h1V63.8h1V65.1h1V63.2h1V62.9h1V62.9h1V62.7h1V61.8h1V63.7h1V65.7h1V64.9h1V65.7h1V67.9h1V68.2h1V68.7h1V67.8h1V69.2h1V69.5h1V67.9h1V68.9h1V71.5h1V73.4h1V75.4h1V76.9h1V77.8h1V78.9h1V79.5h1V79.8h1V79.9h1V79.9h1V79.8h1V79.8h1V79.7h1V80h1V79.5h1V79.1h1V79.2h1V79.6h1V79.6h1V79.4h1V79.3h1V79.3h1V79.3h1V79.3h1V79.6h1V79.6h1V79.6h1V79.7h1V79.2h1V78.3h1V76.8h1V75.8h1V73.8h1V72.3h1V70.7h1V69.4h1V66.6h1V64.8h1V64.6h1V63.5h1V61h1V60.8h1V60.1h1V59.5h1V63.5h1V66.7h1V65.5h1V64.7h1V64.9h1V62.6h1V63.1h1V60.4h1V61.8h1V62.5h1V64.9h1V68.6h1V71.7h1V74.4h1V77.2h1V79h1V80.1h1V80.2h1V80.1h1V80.2h1V80.4h1V80.2h1V80.4h1V80.4h1V80.2h1V79.9h1V79.2h1V76.3h1V72.6h1V71.8h1V70.9h1V69.7h1V67.3h1V65.7h1V63.1h1V63.2h1V62.3h1V63.1h1V64.6h1V66.9h1V67h1V66.5h1V67h1V65.8h1V64.8h1V63.7h1V60.8h1V60.4h1V61.4h1V63.3h1V62.9h1V61.4h1V61.8h1V62.4h1V61.8h1V63.9h1V66.4h1V66.6h1V65.1h1V63.8h1V62.8h1V65.6h1V69.5h1V72.7h1V76.2h1V79h1V80.5h1V81h1V81.3h1V81.5h1V81.3h1V81.2h1V81.3h1V81.3h1V81.2h1V81.2h1V81.3h1V81.4h1V81.4h1V81.4h1V80.8h1V80h1V79h1V78.6h1V79.2h1V80.6h1V81.1h1V81.2h1V81.4h1V81.5h1V81.4h1V80.3h1V79.7h1V74.3h1V72.6h1V70.3h1V67.4h1V66.2h1V65.2h1V64.1h1V63.6h1V63.3h1V62.3h1V64h1V65.8h1V66.7h1V66.7h1V67.4h1V65.9h1V66h1V65.4h1V65.1h1V64.2h1V64.7h1V64.5h1V66.9h1V71.1h1V72.9h1V74.8h1V77.1h1V79h1V79.5h1V79.4h1V78.9h1V77.5h1V75.6h1V74.5h1V73.5h1V72.1h1V71.5h1V71.3h1V71.1h1V71.3h1V71.4h1V70.6h1V70.1h1V67.8h1V67.2h1V63.8h1V62.5h1V63.1h1V65.5h1V66.9h1V65.9h1V65.7h1V66.7h1V68.5h1V66.4h1V65.7h1V65.1h1V65.3h1V64.3h1V65.2h1V65.7h1V64.9h1V65.8h1V67.6h1V69h1V69.5h1V69.4h1V68.9h1V69.8h1V69.1h1V69.5h1V71.2h1V71.7h1V73.6h1V74.9h1V77.1h1V78.6h1V79.6h1V80.1h1V80.4h1V80.8h1V80.6h1V80.3h1V79.6h1V79.3h1V79.1h1V79h1V78.8h1V79.1h1V79.3h1V79.4h1V79.3h1V79.7h1V79.5h1V79.1h1V78.7h1V78h1V76.6h1V76.2h1V76.4h1V76.6h1V76.9h1V76.5h1V76.6h1V75h1V73h1V70.8h1V69.6h1V67.7h1V63.6h1V62.5h1V62.6h1V60.7h1V62.6h1V62.2h1V64.5h1V65.9h1V67.7h1V68.7h1V68.8h1V68.8h1V68h1V67h1V66.1h1V64.6h1V63.3h1V64.6h1V66.6h1V69.2h1V73.5h1V75.8h1V77.9h1V79.6h1V80.2h1V79.8h1V79.8h1V79.7h1V79.6h1V79.9h1V80.3h1V80.7h1V80.5h1V80.4h1V76.2h1V73.1h1V71.3h1V68.2h1V68.3h1V66.4h1V63.9h1V62.4h1V63.9h1V64.6h1V64.1h1V66.6h1V66.8h1V69.8h1V71.1h1V70.1h1V69.3h1V69.4h1V67.7h1V65.9h1V66.4h1V66.6h1V66.9h1V66.8h1V68.5h1V68.7h1V69.3h1V70.9h1V71.2h1V70.6h1V69.5h1V69.2h1V68.2h1V68.1h1V67.9h1V68.3h1V71.6h1V73.8h1V77.2h1V79h1V80.2h1V80.7h1V81.2h1V81.5h1V81.5h1V81.5h1V81.7h1V81.6h1V81.7h1V81.8h1V81.8h1V81.9h1V81.9h1V82h1V82h1V81.9h1V82h1V82h1V82.1h1V82.1h1V82.1h1V82.1h1V82.1h1V82.1h1V82.1h1V31.8h1V31.9h1V30.5h1V34.4h1V34.4h1V35.2h1V36h1V34.3h1V35.9h1V37.9h1V37.3h1V39.4h1V41.2h1V41.3h1V42.3h1V44.6h1V46.1h1V46.9h1V47.4h1V49h1V51.6h1V53.3h1V53.9h1V56.6h1V58.4h1V59.9h1V61.1h1V62.7h1V63.3h1V65.4h1V66.8h1V69.2h1V70.1h1V70.5h1V70.2h1V70.2h1V70.7h1V71.5h1V71.7h1V71.8h1V32.2h1V33h1V32.4h1V34.3h1V34.8h1V35h1V34.6h1V35.3h1V37.3h1V36.6h1V38h1V41.1h1V41.8h1V41.4h1V42.3h1V42.7h1V45.5h1V47.3h1V48.2h1V49.9h1V51.2h1V51.2h1V53.3h1V54.9h1V54.3h1V57.3h1V56.7h1V58.3h1V60.7h1V62h1V61.9h1V63.1h1V65.2h1V66.3h1V67.5h1V68.8h1V70.9h1V72.4h1V73.5h1V75.1h1V76.1h1V77.5h1V77.7h1V77.5h1V77.4h1V77.8h1V77.6h1V77.6h1V77.6h1V77.5h1V77.5h1V77.5h1V58.8h1V32.1h1V30.3h1V32.2h1V31.7h1V35.2h1V33.1h1V33.8h1V36.9h1V35.9h1V36.7h1V39.1h1V36.7h1V38.1h1V40.6h1V40h1V41.2h1V39.7h1V40.6h1V42.6h1V41.8h1V43.7h1V43.1h1V44.5h1V43.7h1V46.2h1V45.3h1V47h1V48.6h1V49.5h1V50.9h1V50h1V52.9h1V52.9h1V53.8h1V55.5h1V56.1h1V57.3h1V57.7h1V59.1h1V60.9h1V63.3h1V64.7h1V64.8h1V66.2h1V68.3h1V69.5h1V69.9h1V71.1h1V71.8h1V71.9h1V72.8h1V73.7h1V30.2h1V33.9h1V34.9h1V35.7h1V38.6h1V38.8h1V40.9h1V44.6h1V43.5h1V46.8h1V47.4h1V49.5h1V50.1h1V50h1V51.6h1V51.6h1V53.5h1V53.6h1V53.1h1V54.9h1V55h1V55.2h1V55.3h1V57.5h1V57.1h1V57.2h1V58.8h1V58.6h1V58.4h1V60.2h1V60.6h1V61.2h1V60.7h1V62.4h1V65.3h1V66.8h1V68.8h1V70.7h1V73.2h1V75.6h1V77.3h1V78.7h1V78.6h1V78.7h1V78.7h1V78.4h1V78.8h1V78.6h1V78.7h1V78.7h1V78.5h1V78.4h1V36.2h1V39.1h1V41.4h1V44.4h1V46.9h1V49.3h1V52.1h1V52.3h1V50.3h1V47.9h1V46.7h1V45.2h1V42.1h1V38.6h1V37.2h1V34.3h1V35.3h1V35.9h1V36.7h1V38.5h1V40.3h1V39.2h1V42h1V43.3h1V43h1V43.9h1V46.3h1V47h1V45.7h1V48.9h1V49.3h1V50.8h1V50.7h1V53.2h1V52.8h1V55.3h1V58.7h1V61.3h1V64.8h1V66.1h1V25.3h1V27.7h1V29.7h1V30.4h1V31.9h1V35h1V35.9h1V34.8h1V38h1V38.5h1V40.4h1V41.4h1V40h1V37.7h1V35.6h1V34.9h1V35.8h1V31.7h1V30.3h1V32.9h1V36.3h1V37.1h1V37h1V40.1h1V40.4h1V43.3h1V44.7h1V44.8h1V48.3h1V49.7h1V49.8h1V51.5h1V51.2h1V51.4h1V54.4h1V55h1V55.8h1V57.6h1V58.3h1V57.3h1V34h1V35.2h1V36.3h1V37.3h1V36.7h1V38.9h1V39.7h1V39.7h1V41.3h1V38.2h1V37.6h1V34.4h1V32.4h1V29.9h1V32.2h1V33h1V35.4h1V35.1h1V38.1h1V40.3h1V41.5h1V42.1h1V44.6h1V44.6h1V49h1V49.9h1V51.7h1V52.1h1V54.3h1V57.7h1V58h1V60.4h1V61h1V62.7h1V64.5h1V67.1h1V67.9h1V70.4h1V45h1V42.5h1V45.5h1V45.5h1V44.2h1V45.7h1V45.7h1V46.2h1V46h1V46.3h1V48.8h1V48.9h1V50.3h1V50.4h1V51.7h1V52.6h1V54.6h1V54.7h1V56.4h1V58.3h1V58.2h1V59h1V59.8h1V61.8h1V62.2h1V62.8h1V64.1h1V65.1h1V66.6h1V67.9h1V68.5h1V69.9h1V70.2h1V71.8h1V72.5h1V73.6h1V73.3h1V73.3h1V73.6h1V73.3h1V40.4h1V40.5h1V41.4h1V44.9h1V45.8h1V44.3h1V47.7h1V47.5h1V49h1V50.2h1V50.7h1V52h1V52.7h1V53.5h1V52.1h1V52.7h1V53.5h1V54.6h1V55.7h1V55h1V56.9h1V57.8h1V56.3h1V57.9h1V58.9h1V58.9h1V59.7h1V60.2h1V61.9h1V61.8h1V63.3h1V63.2h1V64.5h1V64.5h1V64.9h1V67.1h1V69.5h1V71.6h1V73.8h1V25.7h1V28.4h1V31.8h1V32.3h1V33.5h1V38.7h1V39.1h1V40.7h1V45.9h1V47.7h1V48.1h1V50.5h1V53.3h1V55.4h1V59.3h1V60.6h1V63.8h1V65.8h1V67.7h1V69.8h1V72.3h1V74.1h1V76.3h1V78.2h1V79.6h1V79.7h1V36.8h1V36.7h1V35.6h1V37.8h1V36.2h1V36.5h1V37.3h1V35.7h1V36.4h1V39.9h1V41.4h1V41.2h1V42.9h1V45.5h1V46.4h1V47.9h1V51.5h1V53.7h1V54.4h1V55.3h1V57.6h1V59.1h1V59h1V60.3h1V61.8h1V64.3h1V65.4h1V66h1V67.2h1V67.3h1V68.9h1V69.8h1V70.1h1V70.8h1V71.9h1V72.6h1V73.7h1V73.4h1V73.6h1V73.3h1V27.4h1V28.8h1V29.3h1V30h1V30.9h1V33.5h1V35.1h1V37.5h1V35.7h1V38.3h1V39.7h1V39.6h1V41.6h1V44.2h1V45.1h1V44.6h1V46.3h1V45.7h1V47.1h1V48.8h1V50.9h1V51.7h1V51.7h1V54.7h1V54.5h1V56.5h1V57.8h1V58.9h1V61.2h1V62.4h1V63.4h1V65.1h1V66.7h1V68.2h1V69.9h1V71.5h1V73h1V74.9h1V75.4h1V75.7h1V76.4h1V76.1h1V76.3h1V76.3h1V76.3h1V76.7h1V76.9h1V77.2h1V77.2h1V77.3h1V77.5h1V77.7h1V27h1V29.1h1V29.7h1V31.7h1V33.1h1V33.7h1V36.3h1V35.3h1V39.5h1V39.1h1V38.6h1V41.5h1V41.4h1V40.8h1V40.7h1V41.3h1V41.2h1V39.4h1V42.5h1V40.9h1V42.3h1V43.1h1V43.1h1V45.1h1V44h1V47.1h1V48.5h1V50h1V51.2h1V51.9h1V52.3h1V52.9h1V54.7h1V56.6h1V58.1h1V57.6h1V60.3h1V61.5h1V62.7h1V63.1h1V65h1V65.3h1V66.1h1V67.3h1V67.6h1V68.8h1V70.1h1V70.6h1V71.4h1V72.4h1V73h1V73.6h1V32.3h1V34.6h1V36.9h1V39h1V40h1V42.8h1V44.2h1V43.4h1V46.4h1V45.9h1V49.7h1V49.3h1V49.9h1V51h1V52.9h1V54.7h1V55h1V55.9h1V56.3h1V58.2h1V59.5h1V60.3h1V59.7h1V59.7h1V59.8h1V60.1h1V59.8h1V60.8h1V60.7h1V61.2h1V60.7h1V63.2h1V64.5h1V65.8h1V68.6h1V70h1V72h1V73.5h1V75.8h1V77.5h1V79.3h1V79.5h1V79.7h1V79.6h1V79.7h1V79.7h1V79.7h1V79.6h1V79.5h1V79.7h1V79.5h1V79.7h1V79.6h1V31.2h1V36.3h1V38.5h1V38.8h1V40h1V42.5h1V43.9h1V46.7h1V48.9h1V50.6h1V50.1h1V47.8h1V45.9h1V44.7h1V43.8h1V40.5h1V39.4h1V36.9h1V35.7h1V39.4h1V41.4h1V42.3h1V42.9h1V45h1V47.1h1V49.6h1V51.7h1V52.4h1V54.7h1V56.2h1V57.9h1V57.9h1V61h1V61.1h1V63.1h1V64.8h1V66h1V67.7h1V67.4h1V35.1h1V38h1V40.5h1V41.7h1V41.9h1V44.3h1V47h1V49.5h1V48.9h1V50.8h1V54h1V53.4h1V52.4h1V52.5h1V52.6h1V52h1V52.2h1V51.3h1V51.2h1V50h1V50h1V51.7h1V50.6h1V52.5h1V53.3h1V54.8h1V56h1V56h1V58.6h1V59.1h1V59.5h1V59.2h1V58h1V58.6h1V58.2h1V57.6h1V59.1h1V63.3h1V56.8h1V57.2h1V55.2h1V55.9h1V55.2h1V56.5h1V56.3h1V55.4h1V55.6h1V57.2h1V56.2h1V55.9h1V56.7h1V57.3h1V56.5h1V58.5h1V57.5h1V59.2h1V59.6h1V59.5h1V60.1h1V62.1h1V61.9h1V62.7h1V63.2h1V63.7h1V64.3h1V65.8h1V65.8h1V67.6h1V68.2h1V69h1V69.7h1V70.4h1V71.7h1V72.9h1V73.9h1V74.7h1V75.6h1V75.8h1V64.2h1V64.6h1V64.7h1V65.3h1V65.5h1V65.9h1V66.2h1V65.7h1V66.4h1V67.2h1V66.8h1V68.2h1V68.3h1V67.9h1V68.5h1V69.6h1V69.6h1V69.8h1V70.3h1V71.1h1V71.7h1V71.7h1V72.2h1V72.5h1V73.3h1V73.9h1V74.6h1V75h1V76h1V76.4h1V77.3h1V77.8h1V77.7h1V78.1h1V78h1V78.1h1V78.2h1V78.6h1V78.8h1V73.5h1V73.5h1V74.2h1V74h1V74.4h1V74.7h1V74.8h1V74.9h1V75.2h1V75h1V75.2h1V75.6h1V75.8h1V76.1h1V75.9h1V76.3h1V76.6h1V76.7h1V76.8h1V77.2h1V77.1h1V77.7h1V77.6h1V77.9h1V78.2h1V78.5h1V78.5h1V78.9h1V78.9h1V79.1h1V79.3h1V79.6h1V79.8h1V79.9h1V80.1h1V80.4h1V80.5h1V80.8h1V80.9h1V81.2h1V81.4h1V81.6h1V81.6h1V81.7h1V81.7h1V81.7h1V81.7h1V81.7h1V81.8h1V81.8h1V81.8h1V81.8h1V81.9h1V81.9h1V81.9h1V81.9h1V82h1V82h1V82h1V82h1V82.1h1V82.1h1V82.1h1V83.1h-1V83.1h-1V83.1h-1V83.2h-1V83.2h-1V83.2h-1V83.2h-1V83.3h-1V83.3h-1V83.3h-1V83.3h-1V83.4h-1V83.4h-1V83.4h-1V83.4h-1V83.5h-1V83.5h-1V83.5h-1V83.5h-1V83.5h-1V83.6h-1V83.6h-1V83.8h-1V84h-1V84.3h-1V84.4h-1V84.7h-1V84.8h-1V85.1h-1V85.3h-1V85.4h-1V85.6h-1V85.9h-1V86.1h-1V86.3h-1V86.3h-1V86.7h-1V86.7h-1V87h-1V87.3h-1V87.6h-1V87.5h-1V88.1h-1V88h-1V88.4h-1V88.5h-1V88.6h-1V88.9h-1V89.3h-1V89.1h-1V89.4h-1V89.6h-1V90h-1V90.2h-1V90h-1V90.3h-1V90.4h-1V90.5h-1V90.8h-1V91.2h-1V91h-1V91.7h-1V91.7h-1V86.4h-1V86.6h-1V87h-1V87.1h-1V87.2h-1V87.1h-1V87.5h-1V87.4h-1V87.9h-1V88.8h-1V89.2h-1V90.2h-1V90.6h-1V91.3h-1V91.9h-1V92.7h-1V93h-1V93.5h-1V93.5h-1V94.1h-1V94.9h-1V95.4h-1V95.6h-1V95.6h-1V96.7h-1V97.3h-1V96.9h-1V97h-1V98.4h-1V98h-1V98.8h-1V99.5h-1V99h-1V99.3h-1V99.7h-1V99.9h-1V100.5h-1V100.6h-1V101h-1V89.4h-1V89.6h-1V90.5h-1V91.3h-1V92.3h-1V93.5h-1V94.8h-1V95.5h-1V96.2h-1V97h-1V97.6h-1V99.4h-1V99.4h-1V100.9h-1V101.5h-1V102h-1V102.5h-1V103.3h-1V103.1h-1V105.1h-1V105.7h-1V105.6h-1V106h-1V107.7h-1V106.7h-1V108.7h-1V107.9h-1V108.5h-1V109.3h-1V109h-1V108h-1V109.6h-1V109.8h-1V108.9h-1V108.7h-1V110h-1V109.3h-1V110h-1V108h-1V108.4h-1V101.9h-1V106.1h-1V107.6h-1V107h-1V106.6h-1V107.2h-1V106h-1V105.7h-1V106.1h-1V106.6h-1V109.2h-1V109.2h-1V110.4h-1V111.9h-1V112.7h-1V114.6h-1V113.5h-1V115.2h-1V115.2h-1V114h-1V113.9h-1V113h-1V113.2h-1V112.6h-1V112.7h-1V112.8h-1V111.8h-1V111.2h-1V114.4h-1V116.3h-1V115.7h-1V118.2h-1V120.9h-1V123.3h-1V123.5h-1V124.7h-1V127.2h-1V130.1h-1V97.8h-1V97.5h-1V99.2h-1V100.4h-1V102.1h-1V104.1h-1V104.2h-1V107.3h-1V107.3h-1V109h-1V110.5h-1V112.8h-1V113.5h-1V115.6h-1V118.1h-1V120.2h-1V122.3h-1V122.9h-1V123.8h-1V125.8h-1V129.5h-1V128.3h-1V125.8h-1V124.7h-1V121.4h-1V120.5h-1V119.3h-1V117.4h-1V115.1h-1V114.6h-1V116.3h-1V118.5h-1V121.3h-1V122.7h-1V125.2h-1V126.4h-1V126.7h-1V128.9h-1V134h-1V85.6h-1V85.5h-1V85.7h-1V85.5h-1V85.7h-1V85.6h-1V85.5h-1V85.5h-1V85.5h-1V85.6h-1V85.5h-1V85.7h-1V85.9h-1V87.7h-1V89.4h-1V91.7h-1V93.2h-1V95.2h-1V96.6h-1V99.4h-1V100.7h-1V102h-1V104.5h-1V104h-1V104.5h-1V104.4h-1V105.4h-1V105.1h-1V105.4h-1V105.5h-1V105.5h-1V104.9h-1V105.7h-1V107h-1V108.9h-1V109.3h-1V110.2h-1V110.5h-1V112.3h-1V114.2h-1V115.3h-1V115.9h-1V115.5h-1V119.3h-1V118.8h-1V121.8h-1V121h-1V122.4h-1V125.2h-1V126.2h-1V128.3h-1V130.6h-1V132.9h-1V91.6h-1V92.2h-1V92.8h-1V93.8h-1V94.6h-1V95.1h-1V96.4h-1V97.6h-1V97.9h-1V99.1h-1V99.9h-1V100.2h-1V102.1h-1V102.5h-1V103.7h-1V104.9h-1V107.6h-1V107.1h-1V108.6h-1V110.5h-1V112.3h-1V112.9h-1V113.3h-1V114h-1V115.2h-1V116.7h-1V118.1h-1V121.2h-1V120.1h-1V122.1h-1V122.1h-1V122.9h-1V124.3h-1V122.7h-1V125.8h-1V124h-1V123.9h-1V124.5h-1V124.4h-1V123.8h-1V123.7h-1V126.6h-1V126.1h-1V125.7h-1V129.9h-1V128.9h-1V131.5h-1V132.1h-1V133.5h-1V135.5h-1V136.1h-1V138.2h-1V87.5h-1V87.7h-1V87.9h-1V88h-1V88h-1V88.3h-1V88.5h-1V88.9h-1V88.9h-1V88.9h-1V89.1h-1V88.8h-1V89.5h-1V89.8h-1V90.3h-1V92.2h-1V93.7h-1V95.3h-1V97h-1V98.5h-1V100.1h-1V101.8h-1V102.8h-1V104h-1V106.3h-1V107.4h-1V108.7h-1V110.7h-1V110.5h-1V113.5h-1V113.5h-1V114.3h-1V116.4h-1V118.1h-1V119.5h-1V118.9h-1V120.6h-1V120.1h-1V121h-1V123.6h-1V125.6h-1V125.5h-1V126.9h-1V129.5h-1V127.7h-1V130.1h-1V131.7h-1V134.3h-1V135.2h-1V135.9h-1V136.4h-1V137.8h-1V91.9h-1V91.6h-1V91.8h-1V91.5h-1V92.6h-1V93.3h-1V94.4h-1V95.1h-1V95.4h-1V96.3h-1V97.9h-1V98h-1V99.2h-1V99.8h-1V100.9h-1V103.4h-1V104.9h-1V106.2h-1V106.1h-1V107.6h-1V109.9h-1V110.8h-1V111.5h-1V113.7h-1V117.3h-1V118.8h-1V119.7h-1V122.3h-1V124h-1V123.8h-1V125.3h-1V128.8h-1V129.5h-1V127.9h-1V128.7h-1V129h-1V127.4h-1V129.6h-1V128.5h-1V128.4h-1V85.5h-1V85.6h-1V87h-1V88.9h-1V91.1h-1V92.9h-1V95.4h-1V97.5h-1V99.4h-1V101.4h-1V104.6h-1V105.9h-1V109.8h-1V111.9h-1V114.7h-1V117.1h-1V117.5h-1V119.3h-1V124.5h-1V126.1h-1V126.5h-1V131.7h-1V132.9h-1V133.4h-1V136.8h-1V139.5h-1V91.4h-1V93.6h-1V95.7h-1V98.1h-1V100.3h-1V100.7h-1V100.7h-1V102h-1V101.9h-1V103.4h-1V103.3h-1V105h-1V105.5h-1V106.3h-1V106.3h-1V107.3h-1V108.9h-1V107.4h-1V108.3h-1V110.2h-1V109.5h-1V110.6h-1V111.7h-1V112.5h-1V113.1h-1V111.7h-1V112.5h-1V113.2h-1V114.5h-1V115h-1V116.2h-1V117.7h-1V117.5h-1V120.9h-1V119.4h-1V120.3h-1V123.8h-1V124.7h-1V124.8h-1V91.9h-1V91.6h-1V91.9h-1V91.9h-1V91.6h-1V92.7h-1V93.4h-1V95h-1V95.3h-1V96.7h-1V97.3h-1V98.6h-1V100.1h-1V101.1h-1V102.4h-1V103h-1V103.4h-1V105.4h-1V106.2h-1V107h-1V106.9h-1V108.8h-1V110.5h-1V110.6h-1V112.6h-1V113.5h-1V114.8h-1V114.9h-1V116.3h-1V116.4h-1V118.9h-1V119.2h-1V119h-1V119.5h-1V119.5h-1V121h-1V119.7h-1V119.7h-1V122.7h-1V120.2h-1V94.8h-1V97.3h-1V98.1h-1V100.7h-1V102.5h-1V104.2h-1V104.8h-1V107.2h-1V107.5h-1V110.9h-1V113.1h-1V113.5h-1V115.3h-1V116.2h-1V120.6h-1V120.6h-1V123.1h-1V123.7h-1V124.9h-1V127.1h-1V130.1h-1V129.8h-1V132.2h-1V133h-1V135.3h-1V132.8h-1V130.8h-1V127.6h-1V127h-1V123.9h-1V125.5h-1V125.5h-1V126.3h-1V128.5h-1V127.9h-1V128.9h-1V130h-1V131.2h-1V107.9h-1V106.9h-1V107.6h-1V109.4h-1V110.2h-1V110.8h-1V113.8h-1V114h-1V113.7h-1V115.4h-1V115.5h-1V116.9h-1V120.4h-1V120.5h-1V121.9h-1V124.8h-1V125.1h-1V128.2h-1V128.1h-1V128.9h-1V132.3h-1V134.9h-1V133.5h-1V129.4h-1V130.3h-1V129.6h-1V127.5h-1V125.2h-1V123.8h-1V124.8h-1V126.7h-1V127.2h-1V130.4h-1V129.3h-1V130.2h-1V133.3h-1V134.8h-1V135.5h-1V137.5h-1V139.9h-1V99.1h-1V100.4h-1V103.9h-1V106.5h-1V109.9h-1V112.4h-1V112h-1V114.5h-1V114.4h-1V115.9h-1V116.3h-1V119.5h-1V118.2h-1V118.9h-1V121.3h-1V122.2h-1V121.9h-1V123.2h-1V126h-1V124.9h-1V126.7h-1V128.5h-1V129.3h-1V129.9h-1V130.9h-1V128h-1V126.6h-1V123.1h-1V120h-1V118.5h-1V117.3h-1V114.9h-1V112.9h-1V113.1h-1V115.9h-1V118.3h-1V120.8h-1V123.8h-1V126.1h-1V129h-1V86.8h-1V86.7h-1V86.5h-1V86.5h-1V86.6h-1V86.4h-1V86.8h-1V86.5h-1V86.5h-1V86.6h-1V86.5h-1V87.9h-1V89.6h-1V92h-1V94.5h-1V96.4h-1V98.4h-1V99.9h-1V102.8h-1V104.5h-1V104h-1V104.6h-1V105h-1V106.8h-1V106.6h-1V106.4h-1V108h-1V108.1h-1V107.7h-1V109.9h-1V110h-1V110.2h-1V110.3h-1V112.1h-1V111.6h-1V111.7h-1V113.6h-1V113.6h-1V115.2h-1V115.1h-1V115.7h-1V117.8h-1V118.4h-1V121.7h-1V120.6h-1V124.3h-1V126.4h-1V126.6h-1V129.5h-1V130.3h-1V131.3h-1V135h-1V91.5h-1V92.4h-1V93.3h-1V93.4h-1V94.1h-1V95.3h-1V95.7h-1V96.9h-1V99h-1V100.4h-1V100.5h-1V101.9h-1V104.3h-1V106.1h-1V107.5h-1V107.9h-1V109.1h-1V109.7h-1V111.4h-1V112.3h-1V112.3h-1V115.2h-1V114.3h-1V115.7h-1V116.6h-1V118.2h-1V119.9h-1V119h-1V121.5h-1V120.7h-1V122.1h-1V121.5h-1V123.4h-1V122.6h-1V124.6h-1V125.5h-1V124h-1V125.2h-1V124.6h-1V127.1h-1V128.5h-1V126.1h-1V128.5h-1V129.3h-1V128.3h-1V131.4h-1V132.1h-1V130h-1V133.5h-1V133h-1V134.9h-1V133.1h-1V106.4h-1V87.7h-1V87.7h-1V87.7h-1V87.6h-1V87.6h-1V87.6h-1V87.4h-1V87.8h-1V87.7h-1V87.5h-1V87.7h-1V89.1h-1V90.1h-1V91.7h-1V92.8h-1V94.3h-1V96.4h-1V97.7h-1V98.9h-1V100h-1V102.1h-1V103.3h-1V103.2h-1V104.5h-1V106.9h-1V108.5h-1V107.9h-1V110.9h-1V110.3h-1V111.9h-1V114h-1V114h-1V115.3h-1V117h-1V117.9h-1V119.7h-1V122.5h-1V122.9h-1V123.8h-1V123.4h-1V124.1h-1V127.2h-1V128.6h-1V127.9h-1V129.9h-1V130.6h-1V130.2h-1V130.4h-1V130.9h-1V132.8h-1V132.2h-1V133h-1V93.4h-1V93.5h-1V93.7h-1V94.5h-1V95h-1V95h-1V94.7h-1V95.1h-1V96h-1V98.4h-1V99.8h-1V101.9h-1V102.5h-1V104.1h-1V105.3h-1V106.8h-1V108.6h-1V111.3h-1V111.9h-1V113.6h-1V116.2h-1V117.8h-1V118.3h-1V119.1h-1V120.6h-1V122.9h-1V123.9h-1V124h-1V125.8h-1V127.9h-1V127.3h-1V129.3h-1V130.9h-1V129.2h-1V130h-1V130.8h-1V130.8h-1V134.7h-1V133.3h-1V133.4h-1V83.1h-1V83.1h-1V83.1h-1V83.1h-1V83.1h-1V83.1h-1V83.1h-1V83.2h-1V83.2h-1V83.3h-1V83.2h-1V83.2h-1V83.3h-1V83.3h-1V83.4h-1V83.4h-1V83.5h-1V83.6h-1V83.5h-1V83.7h-1V83.7h-1V83.7h-1V84h-1V84.5h-1V85h-1V86.2h-1V88h-1V91.4h-1V93.6h-1V96.9h-1V97.3h-1V97.1h-1V97h-1V96h-1V95.7h-1V94.6h-1V94h-1V94.3h-1V95.9h-1V96.5h-1V96.7h-1V98.4h-1V98.3h-1V98.6h-1V98.8h-1V99.3h-1V97.5h-1V95.8h-1V95.9h-1V95.1h-1V94.1h-1V95.4h-1V98.4h-1V98.6h-1V101.1h-1V100.6h-1V101.3h-1V102.8h-1V101.3h-1V98.8h-1V96.9h-1V97h-1V93.9h-1V92.1h-1V89h-1V84.8h-1V84.7h-1V84.5h-1V84.9h-1V85.3h-1V85.6h-1V85.5h-1V85.4h-1V85.4h-1V85h-1V85.6h-1V87.3h-1V89.4h-1V91.7h-1V96h-1V98.6h-1V100.6h-1V101.9h-1V100.6h-1V99.1h-1V98.2h-1V97.2h-1V96.4h-1V96.4h-1V96.5h-1V97.5h-1V99.3h-1V100.7h-1V103h-1V102.6h-1V104.5h-1V102.6h-1V102.7h-1V101.6h-1V97.5h-1V95.6h-1V94.4h-1V92.2h-1V90.2h-1V88.6h-1V88.7h-1V88.3h-1V88.6h-1V88.8h-1V89h-1V88.6h-1V87.2h-1V86.5h-1V86.1h-1V85.7h-1V85.5h-1V85.9h-1V85.8h-1V85.9h-1V86.1h-1V86.4h-1V86.2h-1V86.1h-1V85.9h-1V85.6h-1V84.9h-1V84.6h-1V84.4h-1V84.8h-1V85.1h-1V85.6h-1V86.6h-1V88.1h-1V90.3h-1V91.6h-1V93.5h-1V94h-1V95.7h-1V96.1h-1V95.4h-1V96.3h-1V95.8h-1V95.7h-1V96.2h-1V97.6h-1V99.4h-1V100.3h-1V99.5h-1V100h-1V100.9h-1V99.9h-1V100.1h-1V99.5h-1V98.8h-1V96.7h-1V98.5h-1V99.5h-1V99.3h-1V98.3h-1V99.7h-1V102.1h-1V102.7h-1V101.4h-1V98h-1V97.4h-1V95.1h-1V94.6h-1V93.8h-1V93.9h-1V94.1h-1V93.9h-1V93.7h-1V93.1h-1V91.7h-1V90.7h-1V89.6h-1V87.7h-1V86.3h-1V85.8h-1V85.7h-1V86.2h-1V88.1h-1V90.4h-1V92.3h-1V94.1h-1V98.3h-1V100.7h-1V100.5h-1V101h-1V100.1h-1V99.8h-1V99.2h-1V99.3h-1V97.8h-1V98.5h-1V98.5h-1V99.4h-1V101.2h-1V102.9h-1V101.9h-1V101.6h-1V101.1h-1V100h-1V99h-1V97.8h-1V94.9h-1V92.6h-1V90.9h-1V85.5h-1V84.9h-1V83.8h-1V83.7h-1V83.8h-1V84h-1V84.1h-1V84.6h-1V86h-1V86.6h-1V86.2h-1V85.2h-1V84.4h-1V83.8h-1V83.8h-1V83.8h-1V83.9h-1V84h-1V84h-1V83.9h-1V83.9h-1V84h-1V83.9h-1V83.7h-1V83.9h-1V84.2h-1V84.7h-1V86.2h-1V89h-1V92.5h-1V95.7h-1V99.6h-1V102.4h-1V101.4h-1V100.1h-1V98.6h-1V98.8h-1V101.3h-1V103.4h-1V102.8h-1V103.4h-1V103.8h-1V102.3h-1V101.9h-1V103.8h-1V104.8h-1V104.4h-1V101.5h-1V100.4h-1V99.4h-1V98.2h-1V98.7h-1V98.2h-1V98.3h-1V100.6h-1V102.1h-1V102.9h-1V102h-1V102.1h-1V99.5h-1V97.9h-1V95.5h-1V94.3h-1V93.4h-1V92.6h-1V88.9h-1V86h-1V85.3h-1V85h-1V84.8h-1V84.8h-1V85h-1V84.8h-1V85h-1V85.1h-1V85h-1V85.1h-1V86.2h-1V88h-1V90.8h-1V93.5h-1V96.6h-1V100.3h-1V102.7h-1V103.4h-1V104.8h-1V102.1h-1V102.6h-1V100.3h-1V100.5h-1V99.7h-1V98.5h-1V101.7h-1V105.7h-1V105.1h-1V104.4h-1V104.2h-1V101.7h-1V100.6h-1V100.4h-1V98.6h-1V95.8h-1V94.5h-1V92.9h-1V91.4h-1V89.4h-1V88.4h-1V86.9h-1V86h-1V85.5h-1V85.6h-1V85.6h-1V85.6h-1V85.9h-1V85.9h-1V85.9h-1V85.9h-1V85.8h-1V85.6h-1V85.6h-1V86h-1V86.1h-1V85.7h-1V85.2h-1V85.5h-1V85.4h-1V85.4h-1V85.3h-1V85.3h-1V85.4h-1V85.7h-1V86.3h-1V87.4h-1V88.3h-1V89.8h-1V91.8h-1V93.7h-1V96.3h-1V97.3h-1V95.7h-1V96h-1V97.4h-1V96.5h-1V97h-1V97.3h-1V99.5h-1V100.3h-1V99.5h-1V101.5h-1V103.4h-1V102.5h-1V102.3h-1V102.3h-1V102h-1V100.1h-1V101.4h-1V98.8h-1V99.3h-1V101h-1V101.8h-1V99.5h-1V100.1h-1V103.3h-1V105.2h-1V103.4h-1V98.3h-1V96.7h-1V96.5h-1V95.1h-1V94.3h-1V94.2h-1V93.8h-1V92.4h-1V91.1h-1V90.5h-1V88.9h-1V87.6h-1V86.4h-1V86.1h-1V86.1h-1V86.6h-1V87.5h-1V88.2h-1V89h-1V90.2h-1V91.9h-1V94.7h-1V97.3h-1V101.3h-1V103.2h-1V102.2h-1V102.5h-1V100.7h-1V98.3h-1V97.8h-1V99.4h-1V101.7h-1V100.6h-1V101.7h-1V101.8h-1V99.3h-1V99.9h-1V99.8h-1V99.4h-1V97.7h-1V95.8h-1V95.3h-1V94.7h-1V95h-1Z"/>
<path fill="#3232c8" d="M146 237.6V237.6h1V240.3h1V240.1h1V237.3h1V238.7h1V237.1h1V234.2h1V229h1V219.1h1V213.6h1V226.5h1V227.9h1V230.9h1V238.4h1V243.1h1V241.5h1V238.9h1V237h1V235.6h1V230.9h1V227.2h1V222.6h1V233.2h1V236.8h1V237.3h1V241.1h1V244.6h1V248.4h1V249.4h1V251h1V250.1h1V245.3h1V242h1V236.9h1V234.6h1V237.8h1V236.3h1V232.2h1V234.7h1V237.2h1V235h1V232.5h1V230.5h1V228h1V231.5h1V232.5h1V228.2h1V223.6h1V230.8h1V229.1h1V227.4h1V233.4h1V237.2h1V237.9h1V235.1h1V234.2h1V233.7h1V233.2h1V229.1h1V226.8h1V222h1V217.3h1V225.5h1V224.8h1V218.6h1V230.2h1V230h1V235.2h1V234.9h1V230.8h1V227.4h1V223.6h1V236.8h1V238.5h1V242.9h1V245.4h1V245.5h1V248.3h1V251.4h1V251.8h1V251.3h1V251.7h1V251.6h1V251.1h1V250.2h1V250.5h1V250.7h1V250.4h1V249.8h1V251.2h1V251.3h1V251.2h1V252.5h1V252.8h1V252.5h1V251.1h1V248.6h1V248.7h1V248.6h1V246.3h1V241.2h1V238.8h1V237.4h1V237.9h1V238.3h1V236.6h1V228.7h1V226.1h1V225.6h1V219.2h1V214.8h1V220.5h1V210.6h1V210.4h1V213.2h1V214h1V220h1V221.3h1V222.9h1V230.8h1V235.8h1V229.7h1V224.9h1V225.3h1V219.5h1V216.3h1V210.8h1V208.6h1V226.7h1V237.8h1V243.7h1V246.7h1V249.3h1V250.9h1V252.9h1V252.2h1V250.2h1V248.1h1V247h1V244.2h1V243.8h1V244.3h1V240.6h1V236.9h1V235.1h1V238.8h1V240h1V237.5h1V238.1h1V238.8h1V240.5h1V241.3h1V236.6h1V232.3h1V234.2h1V236.5h1V239.1h1V239.5h1V236.3h1V234.8h1V231.1h1V225.4h1V225.6h1V226.9h1V226.2h1V210.6h1V224.8h1V227.3h1V226.7h1V229.1h1V233.9h1V235.6h1V234.1h1V232.3h1V231.6h1V229.6h1V223.6h1V220.8h1V224h1V233.5h1V236.9h1V242.8h1V248.6h1V252.3h1V252.5h1V253.3h1V252.6h1V252.4h1V252.8h1V252.4h1V251.8h1V251.9h1V252.9h1V253.6h1V253.6h1V254.4h1V253.5h1V250.4h1V242.6h1V246.9h1V246.1h1V247.8h1V251h1V252.9h1V252.6h1V252.8h1V253.1h1V253.8h1V253.8h1V227.6h1V236.3h1V239.8h1V241.3h1V242.9h1V242.1h1V234.1h1V233.3h1V234.7h1V226.5h1V217.6h1V223.5h1V230.3h1V233.5h1V238.4h1V238.8h1V238.2h1V234.7h1V228.7h1V228.5h1V232.4h1V223.6h1V232.6h1V235.5h1V236.9h1V242.1h1V246h1V246.3h1V248.2h1V249.8h1V251.3h1V246.6h1V241.9h1V238h1V237.4h1V237.7h1V235.5h1V232.6h1V224.6h1V228.2h1V227.4h1V233.7h1V237h1V238.1h1V236.3h1V229.8h1V225.6h1V228.1h1V225.7h1V218.2h1V211.6h1V224.6h1V224.2h1V232.3h1V235.6h1V229.3h1V227.1h1V226.9h1V228.7h1V225.4h1V222.8h1V222.8h1V220.6h1V217.2h1V206.6h1V214.1h1V220.2h1V226.5h1V233.7h1V231.9h1V228.8h1V225.8h1V212.6h1V225.2h1V233.5h1V236.3h1V243.2h1V244.9h1V246.4h1V249.8h1V252h1V252.5h1V253.1h1V253h1V252.6h1V252.4h1V252.2h1V251.8h1V251.6h1V252h1V252.3h1V251.8h1V252.2h1V253.2h1V252.4h1V251.2h1V250.8h1V247.5h1V245.2h1V245.1h1V240.3h1V238.7h1V238.1h1V236.8h1V231.4h1V224.6h1V227.5h1V225.9h1V229.1h1V231h1V225.1h1V223.5h1V218.6h1V227.9h1V231.5h1V235.9h1V234h1V234.2h1V236.1h1V235.3h1V236.6h1V236.5h1V232.6h1V232.8h1V222.6h1V234.6h1V235h1V236h1V241.4h1V243.8h1V247.5h1V250h1V249.9h1V251.4h1V252.1h1V251.8h1V249.6h1V248h1V247.2h1V245.6h1V244.9h1V244.3h1V241h1V240.1h1V241.3h1V238.2h1V237.3h1V240h1V240.7h1V238.2h1V239.2h1V239.5h1V238h1V233.6h1V239.9h1V240.1h1V238.9h1V241.2h1V242.7h1V242.2h1V240.7h1V238.6h1V233.3h1V229.2h1V224.6h1V235h1V230.5h1V224.8h1V226.5h1V226.3h1V234.3h1V238h1V241.4h1V242h1V237.5h1V237.3h1V235.3h1V225.6h1V234.9h1V238.9h1V244.7h1V249.1h1V251.6h1V250.8h1V250.9h1V253h1V253.3h1V254.1h1V254.7h1V254.5h1V254.8h1V255.4h1V255.7h1V255.7h1V255.5h1V255.1h1V255h1V255.5h1V255.4h1V255.6h1V255.9h1V255.9h1V255.7h1V255.5h1V255.5h1V255.8h1V255.8h1V255.8h1V175.6h1V179.7h1V175.6h1V175.6h1V175.6h1V175.6h1V175.6h1V175.6h1V175.6h1V175.6h1V175.6h1V175.7h1V175.6h1V177.2h1V182.9h1V186.9h1V188h1V190.2h1V190.9h1V192.4h1V188.2h1V195.2h1V199.6h1V206.5h1V217.7h1V225.6h1V228.1h1V176.6h1V227.1h1V231.2h1V234.4h1V236.9h1V237.4h1V232.2h1V228.8h1V228.9h1V231.6h1V234.2h1V235.9h1V238.8h1V175.6h1V175.6h1V175.6h1V175.6h1V175.6h1V175.6h1V175.6h1V175.6h1V175.6h1V175.6h1V175.6h1V175.6h1V175.6h1V183.7h1V181.2h1V195.4h1V189.2h1V197h1V199.3h1V195.3h1V192.8h1V197.3h1V197.9h1V200.7h1V199.2h1V205.3h1V207.5h1V213.3h1V219.7h1V222.1h1V221.3h1V175.6h1V175.6h1V233.9h1V233.6h1V235h1V237.9h1V242.8h1V242.4h1V244.8h1V191.6h1V248.5h1V251.1h1V249.8h1V249.7h1V249.6h1V249.7h1V250.1h1V249.6h1V249.6h1V249.6h1V249.7h1V226.8h1V175.6h1V177.5h1V178.9h1V193.6h1V194.4h1V205.7h1V196h1V200.6h1V201.8h1V206.9h1V195.1h1V194.4h1V178h1V190.6h1V176.2h1V179.1h1V180.5h1V181.5h1V179.6h1V181.9h1V189.9h1V178.7h1V176.6h1V182h1V176.9h1V179.7h1V183.3h1V190.9h1V202.8h1V196.4h1V205.2h1V194.8h1V199.9h1V196.6h1V199.8h1V204.7h1V210.1h1V214h1V222.5h1V176.6h1V229.9h1V232.4h1V234.3h1V234.9h1V236.4h1V237.1h1V238.5h1V238.3h1V239.7h1V240h1V240.2h1V240.5h1V175.6h1V175.6h1V182.8h1V199.1h1V196.5h1V207.1h1V204.3h1V202h1V205.8h1V195.9h1V193.5h1V199h1V198.4h1V202h1V205h1V208.1h1V213.2h1V200.7h1V209.4h1V197.2h1V195.1h1V192.4h1V194.4h1V199.5h1V205.1h1V204.8h1V211.4h1V211.1h1V217.8h1V217.4h1V216.7h1V215.1h1V212.2h1V208.6h1V212.1h1V223.2h1V233.8h1V242.5h1V243.1h1V191.6h1V247.2h1V249.2h1V250.7h1V250.9h1V250.9h1V250.4h1V250.8h1V251h1V251h1V250.9h1V250.5h1V251h1V175.6h1V175.6h1V177.6h1V179.2h1V175.6h1V175.6h1V178.5h1V175.6h1V194.9h1V207.8h1V201.3h1V188.5h1V184.9h1V175.6h1V175.6h1V175.6h1V176.6h1V175.6h1V175.6h1V175.6h1V175.6h1V175.6h1V175.6h1V175.6h1V175.6h1V175.6h1V175.6h1V180.1h1V197.7h1V201.2h1V209.7h1V196.7h1V196.9h1V201.5h1V207.9h1V212.7h1V217.1h1V224.5h1V233.3h1V239.5h1V175.6h1V175.6h1V175.6h1V175.6h1V175.6h1V181h1V183.1h1V185.1h1V186.6h1V193.3h1V197.5h1V200.4h1V200.4h1V192.5h1V179.6h1V175.6h1V179.9h1V175.6h1V175.6h1V175.6h1V175.6h1V175.6h1V175.6h1V175.6h1V175.6h1V175.6h1V180.3h1V183.5h1V185.1h1V201h1V176.7h1V192.5h1V175.6h1V175.6h1V175.6h1V182h1V178.2h1V192.3h1V199.7h1V203.6h1V175.6h1V175.6h1V175.6h1V175.6h1V175.6h1V175.6h1V175.6h1V175.6h1V176.7h1V186.9h1V187.4h1V192.2h1V207h1V189.1h1V178.7h1V176.5h1V177.7h1V187.7h1V181.9h1V187h1V191.4h1V192.9h1V195.1h1V198.9h1V212.6h1V206.7h1V210.1h1V212.5h1V218h1V217.4h1V220.8h1V221.7h1V222.5h1V226.1h1V231.9h1V234.3h1V240.5h1V243.3h1V175.6h1V175.6h1V175.6h1V175.6h1V183.5h1V175.6h1V182.5h1V175.6h1V175.6h1V175.6h1V175.6h1V175.6h1V178.2h1V196h1V186.3h1V193.9h1V198.3h1V196.6h1V196.2h1V203.4h1V193.8h1V185h1V184.6h1V196.1h1V212.1h1V231.2h1V230h1V185.6h1V231.3h1V231.5h1V230.9h1V233.5h1V234.3h1V234.2h1V236.9h1V236.1h1V239h1V240.3h1V241.6h1V242.7h1V175.6h1V194h1V188.8h1V189h1V193.3h1V189.2h1V192.9h1V198.8h1V201h1V200.2h1V202.4h1V201.7h1V198.3h1V205.6h1V212.3h1V212.3h1V211.1h1V208.9h1V205.5h1V204.4h1V206.7h1V204.8h1V205.1h1V205.3h1V207.3h1V212h1V216.5h1V226.1h1V228.1h1V228.6h1V221.6h1V227h1V220.8h1V219h1V222.2h1V228.6h1V238.5h1V245.9h1V250.3h1V175.6h1V175.6h1V175.6h1V176h1V184.7h1V189h1V188.6h1V194.3h1V204h1V208.3h1V211h1V215.2h1V225.7h1V175.6h1V175.6h1V223h1V224.2h1V175.6h1V175.6h1V235.3h1V238.9h1V242.7h1V246.5h1V251.1h1V251.8h1V252.9h1V175.6h1V175.6h1V175.6h1V175.6h1V175.6h1V175.6h1V175.6h1V175.6h1V175.6h1V178.4h1V182.6h1V175.6h1V187.1h1V189.4h1V195.2h1V195.4h1V199.6h1V197.6h1V196.9h1V198.9h1V198.7h1V208.2h1V204.3h1V211.9h1V220h1V227.6h1V177.6h1V232.8h1V237.5h1V238.4h1V234.9h1V233.7h1V230.5h1V229.7h1V231.1h1V235.7h1V236.4h1V234.6h1V244.7h1V247.3h1V175.6h1V175.6h1V175.6h1V175.6h1V175.6h1V181.1h1V175.6h1V175.6h1V179.3h1V175.6h1V179.5h1V189.4h1V193.5h1V191.3h1V197.4h1V198.7h1V201.5h1V198.3h1V200.1h1V193.7h1V196.6h1V205.5h1V202.2h1V202.9h1V201.7h1V207.2h1V212.3h1V217.3h1V221.8h1V220h1V175.6h1V175.6h1V225.8h1V228.9h1V228.4h1V234.9h1V242.8h1V246.9h1V248.5h1V185.6h1V250h1V251h1V251h1V250.9h1V250.8h1V251h1V250.9h1V250.4h1V251h1V250.5h1V250.4h1V250.9h1V175.6h1V175.6h1V181.2h1V184.6h1V188.1h1V187.6h1V189.1h1V194.1h1V189.8h1V183.1h1V183.9h1V179.3h1V175.6h1V180.6h1V175.6h1V175.6h1V175.6h1V175.6h1V180h1V182.5h1V175.6h1V182.4h1V175.6h1V175.6h1V180.8h1V179.6h1V182.3h1V185.4h1V193.2h1V193.5h1V195.2h1V199.2h1V198.1h1V199.5h1V209.1h1V217.1h1V225.5h1V228.7h1V233.2h1V175.6h1V233.8h1V234.5h1V236.1h1V236.5h1V237h1V238.4h1V239.6h1V238.8h1V243.9h1V243.5h1V245.4h1V247h1V175.6h1V175.6h1V175.6h1V175.6h1V186.1h1V186.4h1V188.2h1V192.9h1V189.8h1V195.5h1V195.8h1V203.5h1V204.4h1V206.4h1V213.7h1V201.9h1V200.4h1V203.9h1V200h1V196.8h1V201.4h1V195.9h1V194h1V197.3h1V201.4h1V204.7h1V215.9h1V222.7h1V224.1h1V225.1h1V175.6h1V175.6h1V175.6h1V228.9h1V228.5h1V232.5h1V235.8h1V240.5h1V197.6h1V246.6h1V247.9h1V249.8h1V250.8h1V250.9h1V250.7h1V250.4h1V250.5h1V250.5h1V250.6h1V250.9h1V250.7h1V250.4h1V250.5h1V175.6h1V182.2h1V179.1h1V175.6h1V175.6h1V183.6h1V192.4h1V197.3h1V205.5h1V207.8h1V204.4h1V202.4h1V180.7h1V181.5h1V182.2h1V179.8h1V183.4h1V184.2h1V194.6h1V183.3h1V182.2h1V183h1V179.4h1V184.3h1V186.4h1V189.2h1V187.2h1V192.6h1V192.1h1V197.8h1V200.7h1V200h1V201.2h1V209.2h1V211.1h1V215.8h1V224.4h1V231.5h1V241.3h1V186.6h1V192.1h1V189.1h1V193.9h1V198.1h1V197.8h1V202h1V201.5h1V207.8h1V208.3h1V212.8h1V220.1h1V224.5h1V202.2h1V204.6h1V192.8h1V197.1h1V197.7h1V194.1h1V195.1h1V198h1V208.4h1V207.2h1V201.6h1V201.3h1V204.2h1V207.5h1V210.7h1V214.9h1V214.8h1V216.1h1V209.4h1V204.1h1V204.4h1V214.7h1V224.6h1V234.1h1V234.6h1V216.1h1V204.6h1V205.4h1V207.9h1V207.2h1V208.4h1V207.4h1V211.4h1V211.8h1V215.2h1V220.1h1V221.5h1V223.9h1V215.6h1V209.6h1V206.3h1V209h1V210.4h1V212h1V215.6h1V218.8h1V221.6h1V221.6h1V226.5h1V228.4h1V229.5h1V232h1V235.3h1V223.3h1V236.2h1V238h1V237.9h1V240.4h1V241.2h1V242.9h1V244.6h1V246.2h1V248.7h1V248.5h1V248.6h1V221.5h1V219.7h1V221.7h1V220.6h1V226.1h1V226.9h1V222.6h1V223h1V226.7h1V223.2h1V222.7h1V221.9h1V228.2h1V231.3h1V235.2h1V234.2h1V235h1V233h1V233.9h1V236.3h1V233.5h1V231.9h1V233.1h1V236.5h1V243.1h1V247h1V246.4h1V231.6h1V247.6h1V248.5h1V249.8h1V250.9h1V251h1V251.4h1V252h1V252.3h1V253.7h1V253.2h1V253.7h1V233.5h1V235h1V234.7h1V236.5h1V235.9h1V237.6h1V241.3h1V238.4h1V239.2h1V240.1h1V239.6h1V240.7h1V241.5h1V241.2h1V241.5h1V241.7h1V241.7h1V241.9h1V241.1h1V241.7h1V242.5h1V242.1h1V244h1V246.4h1V249.8h1V249.9h1V250.2h1V249h1V248.1h1V246.6h1V245.3h1V246.4h1V247.1h1V249.5h1V250.9h1V252.1h1V253.2h1V253.6h1V254.3h1V255.4h1V255.5h1V256.2h1V256.2h1V256.3h1V256.6h1V256.4h1V256.6h1V256.4h1V256.5h1V256.5h1V256.5h1V256.6h1V256.8h1V256.6h1V256.7h1V256.7h1V256.8h1V256.8h1V256.9h1V257h1V257h1V257h1V257h1V258.2h-1V258.2h-1V258.3h-1V258.3h-1V258.4h-1V258.4h-1V258.4h-1V258.4h-1V258.5h-1V258.5h-1V258.5h-1V258.6h-1V258.6h-1V258.7h-1V258.7h-1V258.6h-1V258.6h-1V258.8h-1V258.8h-1V258.7h-1V258.9h-1V259.1h-1V259.6h-1V259.9h-1V261h-1V261.5h-1V262.1h-1V263.2h-1V264.2h-1V266.2h-1V267.6h-1V269h-1V269.5h-1V268.9h-1V267.2h-1V266.5h-1V265.5h-1V265.2h-1V266.7h-1V268.7h-1V270.5h-1V272.8h-1V272.8h-1V273.2h-1V273h-1V274h-1V274.1h-1V274.4h-1V274h-1V274h-1V274.3h-1V274.9h-1V275.4h-1V275.1h-1V273h-1V277.5h-1V277.1h-1V278.8h-1V278.4h-1V280.3h-1V280.2h-1V281.4h-1V281.3h-1V261.5h-1V262h-1V261.5h-1V262h-1V263.3h-1V263.6h-1V263.7h-1V264.6h-1V264.1h-1V267.3h-1V268h-1V283.7h-1V268.1h-1V266.5h-1V273.4h-1V278h-1V282.7h-1V279.9h-1V282.2h-1V281.9h-1V282.8h-1V277.2h-1V281.4h-1V277.2h-1V279.3h-1V284.4h-1V287.2h-1V291.9h-1V293.4h-1V292.4h-1V294.3h-1V293.9h-1V292.2h-1V293.9h-1V294.2h-1V293.6h-1V292.8h-1V289.5h-1V295.7h-1V266.4h-1V267h-1V267.6h-1V267.7h-1V271.3h-1V271.8h-1V274.5h-1V272.4h-1V276.5h-1V278.1h-1V275.3h-1V293.7h-1V277.3h-1V282.3h-1V284.9h-1V287.7h-1V289.2h-1V292h-1V294.2h-1V297.3h-1V297.7h-1V302.1h-1V303.4h-1V306.2h-1V308.2h-1V303.9h-1V301h-1V292.9h-1V291.4h-1V296h-1V298.3h-1V303.1h-1V306.2h-1V307.6h-1V307h-1V310.4h-1V303h-1V311.8h-1V301.6h-1V297.6h-1V279.7h-1V281.4h-1V289.8h-1V302.4h-1V312.8h-1V309.3h-1V305.4h-1V298.7h-1V298h-1V303.9h-1V303.6h-1V307.3h-1V308.7h-1V311.9h-1V312.5h-1V312.6h-1V306.7h-1V318.4h-1V316h-1V320.2h-1V310.6h-1V310.3h-1V320.3h-1V318.4h-1V319.1h-1V288.5h-1V298.2h-1V304.1h-1V305.9h-1V308h-1V311.5h-1V313.4h-1V318.7h-1V319.3h-1V324.5h-1V326.7h-1V329.4h-1V317h-1V276.2h-1V284.3h-1V294.1h-1V294.9h-1V306.4h-1V310.4h-1V313.9h-1V313.8h-1V319.8h-1V319.3h-1V323.5h-1V323.1h-1V323.1h-1V328.5h-1V332.7h-1V332.8h-1V329.1h-1V332.4h-1V328.8h-1V331h-1V332.4h-1V331.1h-1V332.8h-1V329.6h-1V333.2h-1V319.6h-1V337.8h-1V324.5h-1V308.3h-1V308h-1V312.4h-1V314h-1V324.3h-1V335.1h-1V339.6h-1V339.6h-1V339.6h-1V339.6h-1V339.6h-1V264.8h-1V264.6h-1V264.6h-1V264.8h-1V264.2h-1V264.4h-1V264.7h-1V264.4h-1V264.4h-1V264.5h-1V264.8h-1V265.6h-1V266.8h-1V268.9h-1V317.6h-1V274.3h-1V279.3h-1V284.1h-1V286.4h-1V287.6h-1V339.6h-1V339.6h-1V339.6h-1V283.8h-1V290.9h-1V294.5h-1V301.3h-1V311.9h-1V314.9h-1V318.1h-1V312.7h-1V319.2h-1V320.7h-1V321.5h-1V314.7h-1V315.5h-1V310.5h-1V312h-1V307.8h-1V309.1h-1V312h-1V314.5h-1V317h-1V309.5h-1V319.7h-1V321.3h-1V326.2h-1V326.6h-1V330.3h-1V339.6h-1V339.6h-1V339.6h-1V336.9h-1V268h-1V270.3h-1V271.6h-1V272.1h-1V275.6h-1V275.7h-1V276h-1V277.7h-1V277.4h-1V278.4h-1V280.4h-1V281.6h-1V339.6h-1V285.6h-1V287.8h-1V289.1h-1V297.6h-1V303.6h-1V315.5h-1V312.5h-1V305.3h-1V316h-1V320.1h-1V317.3h-1V318.2h-1V331.5h-1V335.2h-1V334.5h-1V339.6h-1V339.6h-1V339.6h-1V339.6h-1V334.5h-1V339.6h-1V339.6h-1V339.6h-1V339.6h-1V339.6h-1V339.6h-1V332h-1V336.6h-1V334.4h-1V326.8h-1V323.7h-1V322.5h-1V325.3h-1V326.6h-1V327.9h-1V334.6h-1V334.9h-1V339.1h-1V339.6h-1V263.4h-1V264.8h-1V264.7h-1V264.6h-1V263.6h-1V264.7h-1V264.2h-1V264.8h-1V264.5h-1V264.7h-1V264.2h-1V264.6h-1V329.6h-1V267.4h-1V267.9h-1V273.4h-1V279.2h-1V287.5h-1V288.9h-1V289.4h-1V339.6h-1V339.6h-1V294.2h-1V294.3h-1V299h-1V304.9h-1V308.1h-1V309h-1V310.4h-1V314.9h-1V315.3h-1V318h-1V318.8h-1V317.3h-1V318.3h-1V317h-1V320.8h-1V319.5h-1V321.1h-1V324h-1V336.5h-1V337.3h-1V339.6h-1V339.6h-1V339.6h-1V339.6h-1V339.6h-1V339.6h-1V339.6h-1V339.6h-1V339.6h-1V339.6h-1V268.8h-1V272.2h-1V280.7h-1V278.1h-1V282.5h-1V285.2h-1V284.5h-1V284.4h-1V282.6h-1V280.7h-1V277.3h-1V277.6h-1V283.5h-1V337.6h-1V289.4h-1V287.2h-1V303.7h-1V311.3h-1V304.7h-1V320.2h-1V318.3h-1V318.1h-1V319h-1V317.6h-1V315.4h-1V321.6h-1V327.9h-1V332.8h-1V339.6h-1V339.6h-1V339.6h-1V339.6h-1V339.6h-1V339.6h-1V339.6h-1V339.6h-1V339.6h-1V339.6h-1V339.6h-1V339.6h-1V262.3h-1V263.8h-1V266h-1V269h-1V273.2h-1V277.8h-1V280.6h-1V339.6h-1V339.6h-1V292.2h-1V295h-1V339.6h-1V339.6h-1V295.6h-1V296.3h-1V303.3h-1V310.2h-1V302.9h-1V316.3h-1V323.4h-1V328h-1V335.7h-1V339.2h-1V339.6h-1V339.6h-1V339.6h-1V264.5h-1V270.4h-1V276.2h-1V285.1h-1V287.4h-1V299h-1V297.6h-1V293.9h-1V287.8h-1V287.1h-1V291.6h-1V293.8h-1V300.2h-1V296.7h-1V306.7h-1V306h-1V308.6h-1V299.7h-1V308.8h-1V310.8h-1V309.4h-1V304h-1V303.3h-1V299.9h-1V296.1h-1V312.3h-1V308.1h-1V316.2h-1V316.2h-1V303.4h-1V318.6h-1V319.5h-1V318.9h-1V322.4h-1V321.1h-1V320.8h-1V316h-1V321.5h-1V339.6h-1V272h-1V272.4h-1V275.1h-1V275.7h-1V278.7h-1V278.8h-1V276.4h-1V282h-1V282.4h-1V282.9h-1V280.6h-1V283.9h-1V329.6h-1V287h-1V289.5h-1V302.4h-1V319.6h-1V320.5h-1V324.5h-1V323h-1V320.3h-1V319.2h-1V318.6h-1V316.4h-1V318.1h-1V324.2h-1V331h-1V339.4h-1V339.6h-1V339.6h-1V339.6h-1V339.6h-1V332.4h-1V339.6h-1V339.6h-1V339.6h-1V339.6h-1V339.6h-1V339.6h-1V339.6h-1V273h-1V273.8h-1V276.8h-1V287.5h-1V292.2h-1V290.4h-1V292.7h-1V293.4h-1V296.7h-1V298.8h-1V302.7h-1V300.8h-1V308.6h-1V311h-1V316.3h-1V319.8h-1V320h-1V324.9h-1V334.1h-1V325.7h-1V321.5h-1V335h-1V332.5h-1V336.2h-1V328.4h-1V315.4h-1V321.5h-1V323.2h-1V328.6h-1V335.4h-1V339.6h-1V339.6h-1V339.6h-1V339.6h-1V339.6h-1V339.6h-1V339.6h-1V339.6h-1V313.8h-1V319.3h-1V326.3h-1V335.7h-1V339.6h-1V339.6h-1V339.6h-1V339.6h-1V331.9h-1V339.6h-1V327.7h-1V333.2h-1V336.9h-1V339.6h-1V339.6h-1V339.6h-1V335.3h-1V339.6h-1V339.6h-1V338h-1V339.6h-1V339.6h-1V339.6h-1V339.6h-1V339.6h-1V332h-1V319.3h-1V315.9h-1V319.2h-1V321.1h-1V324.6h-1V323.5h-1V328.2h-1V335.3h-1V333.2h-1V339.6h-1V334.9h-1V339.6h-1V339.6h-1V339.6h-1V276.2h-1V282.5h-1V289.9h-1V296.8h-1V301.4h-1V308.4h-1V311.2h-1V313.1h-1V316.8h-1V313.2h-1V314h-1V321.7h-1V335.6h-1V339.6h-1V339.6h-1V339.6h-1V339.6h-1V339.6h-1V335.2h-1V333.8h-1V339.6h-1V339.6h-1V339.6h-1V339.6h-1V335.5h-1V335.2h-1V339.6h-1V319.8h-1V326.6h-1V307.1h-1V306.6h-1V322.6h-1V339.6h-1V339.6h-1V339.6h-1V339.6h-1V339.6h-1V339.6h-1V339.6h-1V339.6h-1V264.3h-1V264.5h-1V264.3h-1V264.6h-1V264.4h-1V264.3h-1V264.4h-1V264.8h-1V264.5h-1V264.4h-1V264.2h-1V268h-1V323.6h-1V273.6h-1V271.7h-1V280.3h-1V293.8h-1V304.3h-1V298.3h-1V295.9h-1V295.9h-1V298.5h-1V297.8h-1V293.8h-1V301.3h-1V299.6h-1V303.1h-1V310h-1V314.2h-1V316.6h-1V319.1h-1V323.1h-1V308h-1V317.6h-1V314.2h-1V313h-1V309h-1V309.4h-1V314.9h-1V316.5h-1V318.1h-1V321.2h-1V321.9h-1V320.4h-1V318.4h-1V313.9h-1V312.2h-1V317.2h-1V322.5h-1V337.2h-1V339.6h-1V339.6h-1V275.1h-1V275.4h-1V275.8h-1V275.7h-1V277.8h-1V277.4h-1V279.1h-1V279.8h-1V280.6h-1V282.3h-1V284h-1V286.4h-1V338.6h-1V292.4h-1V298.4h-1V303.9h-1V306.7h-1V314.6h-1V319h-1V316.2h-1V318.3h-1V320.4h-1V314.4h-1V322.7h-1V330.3h-1V332.7h-1V333h-1V335h-1V336h-1V339.2h-1V337.6h-1V335h-1V338.1h-1V332.4h-1V327.3h-1V338.3h-1V332.9h-1V335.2h-1V335.1h-1V336.8h-1V321.2h-1V316.7h-1V305.8h-1V315.2h-1V315.7h-1V317.1h-1V319.8h-1V321.4h-1V321.8h-1V334.1h-1V339.2h-1V339.6h-1V296.1h-1V265.1h-1V265.3h-1V264.4h-1V264.6h-1V265.3h-1V265.8h-1V265.4h-1V265.6h-1V265.6h-1V265.6h-1V266.8h-1V323.6h-1V270.2h-1V272.6h-1V275.4h-1V278.4h-1V280.9h-1V282.6h-1V285.7h-1V339.6h-1V339.6h-1V291.9h-1V291.5h-1V297.1h-1V301.9h-1V306.4h-1V309.2h-1V311.2h-1V316.1h-1V319.7h-1V323.1h-1V319.1h-1V308.1h-1V318.7h-1V315.4h-1V329.1h-1V328.6h-1V338.9h-1V339.6h-1V339.6h-1V339.6h-1V339.6h-1V339.6h-1V339.6h-1V339.6h-1V339.6h-1V333.5h-1V339.6h-1V339.6h-1V339.6h-1V335.5h-1V333.5h-1V276.7h-1V280h-1V282h-1V284h-1V286.8h-1V287.6h-1V281.9h-1V278.4h-1V277.3h-1V280h-1V282.9h-1V286.6h-1V338.6h-1V289.2h-1V284.4h-1V297.6h-1V307.3h-1V314.5h-1V320.5h-1V327.1h-1V327.5h-1V324.8h-1V327.1h-1V313.8h-1V326.2h-1V332.4h-1V331.7h-1V339.6h-1V339.6h-1V334.2h-1V338h-1V337h-1V339.6h-1V339.6h-1V339.6h-1V339.6h-1V339.6h-1V339.6h-1V339.6h-1V339.6h-1V259.3h-1V259.2h-1V259.3h-1V259.7h-1V259.8h-1V259.5h-1V259.4h-1V259.7h-1V260.1h-1V259.9h-1V259.6h-1V259.9h-1V259.9h-1V259.8h-1V260.1h-1V260.3h-1V260h-1V259.9h-1V260.1h-1V260.3h-1V261.2h-1V262.8h-1V264.1h-1V264.7h-1V265.7h-1V265h-1V266.7h-1V273.6h-1V280.8h-1V280.5h-1V290.2h-1V283.2h-1V283.6h-1V278.4h-1V277.2h-1V279.3h-1V278.3h-1V283.2h-1V293h-1V287.5h-1V286.1h-1V293.2h-1V288.6h-1V291.3h-1V284.4h-1V281.1h-1V280h-1V274h-1V271.6h-1V273.2h-1V277.1h-1V277.8h-1V275.1h-1V278.5h-1V282.1h-1V280.1h-1V282.3h-1V279.3h-1V276.8h-1V276h-1V277.8h-1V276.9h-1V275.4h-1V278.1h-1V280.3h-1V277.4h-1V272.9h-1V270.5h-1V269.8h-1V268.4h-1V268.1h-1V266.2h-1V262.8h-1V262.5h-1V263.4h-1V264.3h-1V264.7h-1V265.2h-1V269.5h-1V273.5h-1V277.3h-1V286.8h-1V288.3h-1V293.3h-1V285.4h-1V285.9h-1V281.8h-1V278.1h-1V276.9h-1V277.5h-1V280.5h-1V283.5h-1V284.6h-1V290.9h-1V295.2h-1V298h-1V289.4h-1V286.2h-1V285.1h-1V283.5h-1V286.3h-1V286.2h-1V286.5h-1V289h-1V285.7h-1V282h-1V276.1h-1V271h-1V269.7h-1V269.6h-1V267.8h-1V264.8h-1V263.1h-1V261.9h-1V262.6h-1V263.1h-1V263.6h-1V265.1h-1V265.1h-1V264.6h-1V264.8h-1V265.4h-1V265h-1V263.8h-1V263.5h-1V262.7h-1V262.1h-1V262.3h-1V265.1h-1V266.6h-1V269.5h-1V275.4h-1V283.1h-1V290.1h-1V289.9h-1V303.5h-1V290.4h-1V287.7h-1V283.3h-1V279.8h-1V286.9h-1V293.3h-1V300h-1V309.6h-1V296h-1V298.6h-1V300.3h-1V295.9h-1V291h-1V294.4h-1V293.3h-1V288.7h-1V284.4h-1V280h-1V284.4h-1V291.1h-1V295.3h-1V304.5h-1V292.2h-1V289.8h-1V287h-1V290.1h-1V286.2h-1V280.2h-1V278.4h-1V279.5h-1V284.8h-1V286h-1V287.6h-1V293.1h-1V290.6h-1V286.8h-1V282.6h-1V282.2h-1V284h-1V274h-1V268h-1V263.5h-1V264.4h-1V265.7h-1V267h-1V269.8h-1V272.2h-1V275.1h-1V277.3h-1V280.9h-1V292.3h-1V285.7h-1V285.4h-1V288h-1V283.2h-1V278.2h-1V277.9h-1V281.2h-1V283h-1V284.6h-1V285.1h-1V298.4h-1V295.3h-1V290.9h-1V282.5h-1V274.7h-1V273.5h-1V279.7h-1V279h-1V276.8h-1V278.1h-1V288.2h-1V260.9h-1V261h-1V260.8h-1V261.5h-1V262.2h-1V261.8h-1V263.7h-1V266.9h-1V266.8h-1V268h-1V272.9h-1V266.6h-1V263h-1V260.9h-1V261.2h-1V261.7h-1V263.2h-1V263.6h-1V262.6h-1V263.3h-1V263.8h-1V262.7h-1V261.8h-1V261.9h-1V261.7h-1V262.1h-1V265.8h-1V269.5h-1V277.1h-1V282.5h-1V284.5h-1V294.3h-1V286.4h-1V281.7h-1V284h-1V281.5h-1V277.9h-1V280.3h-1V279.6h-1V282.8h-1V290.9h-1V293.6h-1V291.8h-1V305.5h-1V292.3h-1V288.4h-1V292.2h-1V290.4h-1V285.7h-1V287.6h-1V284.9h-1V283.3h-1V282.5h-1V280.3h-1V276.4h-1V279h-1V280.6h-1V277.7h-1V276.6h-1V278.2h-1V279.9h-1V280.6h-1V279h-1V276.4h-1V278.1h-1V275.4h-1V275.6h-1V278.1h-1V273.9h-1V271.3h-1V269h-1V266.2h-1V266.3h-1V265.1h-1V262h-1V264h-1V266.6h-1V266.9h-1V270.8h-1V281.6h-1V293.1h-1V307.6h-1V308.2h-1V303.7h-1V298.1h-1V294.1h-1V291.6h-1V283.5h-1V283.3h-1V290.2h-1V286.9h-1V290.4h-1V296.9h-1V295.6h-1V299.5h-1V294.1h-1V305.5h-1V296.8h-1V294.2h-1V299.6h-1V295.7h-1V290.5h-1V289.9h-1V289h-1V287.1h-1V284.5h-1V281.6h-1V274.7h-1V271.2h-1V270.2h-1V267.3h-1V266.9h-1V265.8h-1V264.3h-1V263.6h-1V262h-1V261.7h-1V263.1h-1V263.6h-1V263.5h-1V264.3h-1V265.1h-1V265.6h-1V264.7h-1V264.3h-1V263.7h-1V264.1h-1V263.9h-1V263.2h-1V263.7h-1V265.4h-1V268.4h-1V268.8h-1V268.9h-1V275.5h-1V278.8h-1V282.6h-1V292.3h-1V286.8h-1V287.4h-1V280.1h-1V274.7h-1V278.2h-1V281.1h-1V297.4h-1V293.8h-1V293.4h-1V290.5h-1V295.9h-1V294.4h-1V288.5h-1V289.7h-1V285.6h-1V280.9h-1V281.5h-1V281.7h-1V283.4h-1V282.2h-1V287.8h-1V291.5h-1V290.8h-1V292.3h-1V285.9h-1V286.5h-1V284.2h-1V279.3h-1V279.9h-1V282.8h-1V285.1h-1V285h-1V278.9h-1V277.8h-1V278.6h-1V279.1h-1V281.2h-1V280.6h-1V278.9h-1V273.2h-1V266.9h-1V265.3h-1V266.9h-1V266.8h-1V268.8h-1V274.3h-1V278.9h-1V280.2h-1V280.8h-1V293.3h-1V293.8h-1V285.2h-1V281.9h-1V282.3h-1V278.6h-1V275.6h-1V274.3h-1V278.2h-1V281h-1V285.5h-1V289.1h-1V302.5h-1V291.5h-1V285.7h-1V280.2h-1V279.6h-1V276.5h-1V275.6h-1V275.7h-1V278.5h-1V278.3h-1Z"/>
<path fill="#6464dc" d="M146 248.9V248.9h1V249.5h1V250h1V249.2h1V248.9h1V247.8h1V246.7h1V245h1V242.4h1V242.2h1V244.3h1V245.1h1V247.2h1V248.7h1V250.2h1V249.6h1V249.1h1V247.8h1V247.1h1V246.2h1V244.4h1V244.6h1V247.7h1V247.8h1V249.2h1V250.8h1V252.4h1V253.7h1V254h1V254.1h1V253.5h1V251.9h1V250.1h1V249.1h1V248h1V248.8h1V248.4h1V247.8h1V247.7h1V247.9h1V247.3h1V246.9h1V247h1V246.2h1V246.5h1V246.4h1V245h1V244.9h1V245.6h1V244.9h1V245.2h1V247.2h1V247.7h1V247.4h1V247.6h1V247.5h1V246.2h1V245.8h1V244.2h1V243.8h1V243.1h1V242.6h1V243.6h1V243h1V244.4h1V245.8h1V247.5h1V247.8h1V247.4h1V245.8h1V246.2h1V246.8h1V247.6h1V249.1h1V250.4h1V251.9h1V252.8h1V253.4h1V254.4h1V254.9h1V255h1V254.9h1V254.9h1V255h1V254.5h1V254.6h1V254.4h1V254.7h1V254.6h1V255h1V254.9h1V255.2h1V255.4h1V255.5h1V255.2h1V254.7h1V254h1V253.4h1V253.3h1V252.4h1V251h1V250.3h1V248.4h1V247.4h1V247.8h1V246.3h1V244.8h1V243.3h1V243.3h1V241.8h1V241.3h1V241.8h1V240.4h1V239.9h1V240.5h1V240.6h1V241.7h1V243.2h1V243.6h1V244.6h1V246.4h1V245.6h1V243.8h1V242.5h1V241.7h1V239.4h1V239.8h1V241.5h1V243.5h1V248.1h1V251.1h1V252.9h1V253.9h1V254.6h1V255.1h1V254.8h1V254.1h1V253.7h1V252.9h1V251.7h1V250.9h1V250.4h1V250h1V249.1h1V248.4h1V249.4h1V249.1h1V248.3h1V248.7h1V249.4h1V249.7h1V249.7h1V248.2h1V248.3h1V248.1h1V248.5h1V248.2h1V247.7h1V246.5h1V246.2h1V245.8h1V244.6h1V242.9h1V244.3h1V242.6h1V242.4h1V242.6h1V243.3h1V243.8h1V246.4h1V247.3h1V247.7h1V248.2h1V246.8h1V246h1V246.7h1V245.3h1V243.6h1V245.1h1V247.4h1V249.5h1V251.8h1V253.4h1V254.8h1V255.6h1V255.7h1V255.6h1V255.5h1V255.4h1V255.2h1V255.1h1V255.3h1V255.5h1V255.9h1V255.9h1V255.8h1V255.3h1V254h1V253.5h1V253.3h1V253.1h1V253.6h1V254.7h1V255.4h1V255.6h1V255.8h1V255.9h1V254.8h1V254.3h1V249.3h1V249.3h1V249.3h1V249h1V249.8h1V249.7h1V249h1V246.9h1V245.6h1V244h1V243.8h1V245.2h1V245.2h1V246.7h1V247.7h1V248.5h1V248.6h1V247.6h1V245.2h1V245.2h1V246.4h1V246.1h1V246.8h1V248.6h1V249.3h1V250.8h1V252.1h1V253h1V253.8h1V254h1V253.9h1V252.5h1V250.6h1V248.8h1V248h1V248.1h1V247.1h1V245.2h1V244.8h1V245.4h1V245.1h1V246.8h1V247.8h1V248.9h1V248h1V245.5h1V245.3h1V245.5h1V243.8h1V242.3h1V242.2h1V242.2h1V242.7h1V245.3h1V246.5h1V245.9h1V244.4h1V243.6h1V244.1h1V242.6h1V241.4h1V241.5h1V240.3h1V240.3h1V240.1h1V239.7h1V242.2h1V244.7h1V246.6h1V245.7h1V244.5h1V243.9h1V244.2h1V243.7h1V245.6h1V248.3h1V250.4h1V251.9h1V253.1h1V254.3h1V255h1V255.4h1V255.5h1V255.3h1V255.2h1V254.8h1V254.8h1V254.9h1V255h1V254.8h1V254.9h1V255h1V255.4h1V255.3h1V255.3h1V255h1V254.5h1V253.1h1V252.4h1V252.2h1V250.9h1V249.9h1V248.4h1V247.8h1V245.4h1V244.9h1V245.3h1V244.7h1V245h1V244.9h1V244.2h1V243.9h1V243h1V243.4h1V245h1V246.4h1V247.1h1V247.2h1V247.8h1V248.1h1V248.3h1V247.6h1V245.9h1V246.5h1V245.9h1V246.8h1V246.3h1V249h1V250.3h1V252.2h1V253.4h1V254.2h1V254.6h1V255.1h1V255.2h1V254.9h1V254h1V253.5h1V253.1h1V252.5h1V252h1V251h1V249.9h1V249.1h1V249.4h1V249.5h1V248.7h1V248.9h1V249.4h1V249.1h1V249.1h1V248.6h1V248.8h1V249h1V249.5h1V249.8h1V249.5h1V249.8h1V250.5h1V250.3h1V249.9h1V248.9h1V247.7h1V246.5h1V246h1V246.7h1V244.7h1V244.4h1V244.5h1V244.9h1V246.8h1V248.7h1V248.9h1V249h1V248.4h1V247.6h1V247.6h1V247.9h1V247.7h1V249.2h1V251.3h1V253.1h1V254.3h1V254.5h1V254.8h1V255.3h1V255.7h1V256h1V256.3h1V256.4h1V256.5h1V256.6h1V256.6h1V256.6h1V256.7h1V256.6h1V256.5h1V256.7h1V256.6h1V256.6h1V256.8h1V256.8h1V256.8h1V256.7h1V256.8h1V256.8h1V256.9h1V256.8h1V206h1V205.8h1V207.4h1V206.9h1V208.6h1V210h1V211.4h1V209.1h1V210.1h1V214h1V212.7h1V214.6h1V216.4h1V215.2h1V217.9h1V220.7h1V221.6h1V221.2h1V222.6h1V223.8h1V225.4h1V228.9h1V230.4h1V230h1V232.3h1V233.3h1V236h1V236.5h1V239.5h1V240.9h1V242.5h1V244.3h1V244.5h1V245h1V245.6h1V245.7h1V246h1V245.8h1V246.2h1V246.4h1V206.9h1V205.3h1V206.3h1V207.9h1V209.9h1V209.9h1V208.8h1V211.2h1V213.4h1V212.2h1V213.8h1V213.4h1V216.7h1V217.4h1V219.5h1V217.8h1V221.4h1V220.5h1V223.7h1V225.4h1V225.3h1V227h1V227.4h1V228.6h1V230.9h1V231.8h1V231.8h1V232.9h1V234.7h1V236.6h1V237.9h1V238.6h1V239.6h1V241.6h1V242.7h1V244.5h1V245.7h1V247.2h1V248.9h1V249.7h1V251.3h1V252.8h1V252.5h1V252.4h1V252.6h1V252.7h1V252.6h1V252.6h1V252.6h1V252.6h1V252.7h1V252.5h1V234.6h1V207.6h1V208.1h1V205.7h1V206.9h1V208.5h1V208.2h1V210.7h1V211h1V210.9h1V211.8h1V212.1h1V213.2h1V214.7h1V213.8h1V216.4h1V214.4h1V215.2h1V215.7h1V218.4h1V217.7h1V218.6h1V219.5h1V217.7h1V219.7h1V221.3h1V221h1V223.3h1V223h1V224.3h1V225.7h1V225.4h1V227.8h1V226.5h1V227.9h1V230.5h1V230h1V233.1h1V233.2h1V235.5h1V235.5h1V237.2h1V238.4h1V240.6h1V242.3h1V242.9h1V244.1h1V245.3h1V245.9h1V246.4h1V247.5h1V248h1V248.8h1V208.2h1V207.5h1V211h1V212.6h1V212.6h1V214.2h1V217.6h1V219.3h1V219.4h1V221.2h1V221.7h1V225.8h1V225h1V225.2h1V227.4h1V226.6h1V228.5h1V227.5h1V228h1V229.3h1V229.2h1V230.1h1V232.2h1V232.5h1V232.7h1V233.7h1V233h1V234.3h1V235.2h1V235h1V234.6h1V235.5h1V236.3h1V238.2h1V239.5h1V242h1V243.4h1V246.5h1V248.4h1V250.6h1V252.7h1V253.7h1V253.6h1V253.6h1V253.5h1V253.5h1V253.5h1V253.7h1V253.5h1V253.5h1V253.5h1V253.6h1V209.4h1V211.5h1V214.4h1V218.1h1V221.8h1V223.7h1V226.5h1V228.3h1V226.8h1V223.4h1V221h1V218.3h1V216.4h1V215.4h1V213.2h1V210.5h1V211.4h1V210.8h1V214.3h1V214.3h1V213.5h1V217.3h1V217.7h1V217.3h1V218.4h1V218.4h1V219.2h1V220.8h1V222.9h1V222.8h1V224.1h1V225.8h1V226.6h1V225.9h1V227.3h1V230.5h1V233.2h1V236.5h1V240h1V241.1h1V199.2h1V201.3h1V203.4h1V204.7h1V205.8h1V208.5h1V209.1h1V210.9h1V212.2h1V213.5h1V214.9h1V214.2h1V214.5h1V214.9h1V213h1V212.4h1V210.9h1V208.1h1V206h1V208.2h1V208h1V210.5h1V211.2h1V213.6h1V215.8h1V216.5h1V219.6h1V220.2h1V221.2h1V223.5h1V225.5h1V224.7h1V227h1V227h1V229.1h1V230.6h1V231.4h1V231.6h1V232.9h1V231.6h1V206.7h1V208.3h1V210.1h1V209.3h1V210.7h1V214.8h1V214.9h1V215.4h1V216.4h1V212.6h1V210.3h1V210.4h1V209.7h1V207.3h1V203.2h1V205.2h1V210.3h1V209.1h1V210.5h1V215.5h1V216.7h1V219.1h1V219.8h1V221.7h1V222h1V225.7h1V225.6h1V229.3h1V229.2h1V231.2h1V233.1h1V235h1V236h1V238.1h1V240.3h1V241.8h1V242.5h1V243.3h1V219.8h1V218.8h1V218.5h1V221h1V220h1V220.8h1V219.1h1V221h1V222.3h1V223.7h1V223.6h1V223.4h1V224.3h1V225.1h1V227.5h1V227.8h1V229.1h1V230.4h1V231.2h1V232.9h1V233h1V233.7h1V235h1V236.7h1V237.1h1V238.5h1V238.8h1V240.4h1V240.9h1V243.1h1V243.9h1V244.6h1V246h1V246.4h1V247.3h1V248.7h1V248.9h1V248.3h1V248.7h1V248.7h1V215.4h1V215.3h1V216.1h1V217.5h1V218.6h1V220.9h1V220.8h1V223h1V222.6h1V225.9h1V224.7h1V225.8h1V227.3h1V227.1h1V229.3h1V229.5h1V228.5h1V229.9h1V231h1V230.2h1V231.8h1V231.2h1V232.3h1V233.5h1V233.4h1V234.8h1V234.8h1V235.4h1V235.8h1V237.4h1V238.2h1V237.7h1V239h1V240.1h1V239.8h1V241.2h1V243.6h1V246.6h1V250.7h1V199h1V202h1V203.7h1V209h1V210.5h1V212.7h1V215.7h1V215.8h1V220.7h1V221.4h1V224.7h1V225.8h1V228.4h1V230.4h1V233.2h1V235.2h1V237.6h1V240h1V242.8h1V245h1V247.3h1V249.1h1V251.4h1V253.5h1V254.6h1V254.6h1V211.9h1V209.2h1V212.3h1V212.8h1V213.3h1V211.4h1V212.1h1V211.6h1V213.2h1V212.1h1V213.9h1V215.8h1V219.6h1V219.5h1V223.1h1V223.8h1V226.1h1V226.6h1V229.2h1V229.7h1V230.9h1V233.6h1V233.9h1V236.5h1V237.5h1V239.5h1V240.6h1V241.3h1V241.7h1V243.4h1V243.5h1V244h1V245h1V246.4h1V247.2h1V247.3h1V248.3h1V248.5h1V248.6h1V248.9h1V200.3h1V204.6h1V202.8h1V204.6h1V205.5h1V207.3h1V210h1V209.1h1V212.4h1V214.8h1V214.9h1V215.8h1V215.5h1V217.4h1V218.6h1V219.3h1V222h1V220.6h1V222.9h1V224.2h1V224.3h1V226.5h1V228.1h1V229.9h1V230.6h1V232.2h1V232.4h1V234.2h1V236.3h1V237.2h1V239.1h1V240h1V242.6h1V243.4h1V245.4h1V246.3h1V248h1V249.9h1V250.5h1V250.7h1V251.1h1V251h1V251.1h1V251.3h1V251.5h1V251.8h1V252h1V251.9h1V252.1h1V252.2h1V252.6h1V252.5h1V203.8h1V202.9h1V204.4h1V206.4h1V206.3h1V210.3h1V209.6h1V210.6h1V212.2h1V214.8h1V214.9h1V216.1h1V214.5h1V215.2h1V216.9h1V214.5h1V216.2h1V216.8h1V216.9h1V214.6h1V217.5h1V217h1V217.9h1V217.6h1V220.6h1V221h1V222.8h1V224.9h1V225.6h1V225.3h1V227.7h1V228.5h1V230h1V230.1h1V232h1V233.6h1V233.9h1V235.1h1V236.9h1V238.5h1V239.7h1V240.4h1V241.3h1V242h1V242.6h1V244h1V244.8h1V245.9h1V246.7h1V246.8h1V248h1V248.8h1V208.8h1V210.5h1V213.1h1V212.2h1V215.5h1V216.8h1V218.5h1V218.2h1V220.5h1V220.8h1V224.3h1V224.8h1V226.2h1V227.6h1V227.5h1V230h1V230.7h1V231.7h1V231.8h1V233.9h1V234h1V234.9h1V234.2h1V235.5h1V235.3h1V234.8h1V235.1h1V235.5h1V235.6h1V236.6h1V236.3h1V237.8h1V239.6h1V241.9h1V242.8h1V244.7h1V246.9h1V248.4h1V250.8h1V252.2h1V254.3h1V254.7h1V254.5h1V254.6h1V254.6h1V254.7h1V254.6h1V254.6h1V254.7h1V254.7h1V254.5h1V254.6h1V254.6h1V208.4h1V211.4h1V211.8h1V214.3h1V217.4h1V217.3h1V219.3h1V223h1V224.9h1V226.7h1V225h1V224.2h1V222.1h1V218.7h1V217h1V213.8h1V212.1h1V212.2h1V213.5h1V213.4h1V215.2h1V217.9h1V218h1V220.5h1V223.6h1V223.4h1V226.3h1V228.6h1V230.6h1V230.9h1V232.4h1V234h1V235.3h1V236.8h1V238.4h1V238.9h1V241.1h1V242.4h1V243.1h1V212.8h1V213.4h1V215.6h1V216.4h1V216.8h1V221.1h1V223h1V223.4h1V224.7h1V227h1V229.6h1V227.9h1V228.5h1V227.6h1V227.7h1V226.3h1V227.3h1V225.4h1V224.7h1V224.9h1V223.6h1V226.7h1V226.3h1V227.2h1V228.3h1V229.1h1V230.7h1V232.5h1V233.7h1V233.7h1V235.2h1V234.5h1V233.7h1V233.1h1V233h1V232.3h1V234.1h1V235.5h1V231.4h1V232.2h1V230.7h1V229.8h1V231.2h1V231.2h1V231.3h1V231.4h1V230.7h1V232.1h1V231.3h1V232.8h1V232.4h1V231.3h1V232h1V232.4h1V232.8h1V233.1h1V235h1V234.7h1V236.3h1V236.5h1V236.5h1V237.4h1V237.9h1V238.6h1V240.2h1V240.8h1V240.8h1V242.3h1V242.7h1V243.5h1V244.9h1V245.4h1V246.8h1V247.3h1V248.3h1V249.2h1V250.3h1V250.4h1V239.3h1V239.6h1V239.3h1V239.2h1V240.6h1V240.1h1V240.4h1V241.7h1V242h1V242.1h1V242.8h1V242.7h1V243.2h1V243.7h1V244h1V244.2h1V244.8h1V244.9h1V245.2h1V245.5h1V246.1h1V247.1h1V247.4h1V248.1h1V248.7h1V249.3h1V249.9h1V250.5h1V251.1h1V251.7h1V252.3h1V252.6h1V252.9h1V253h1V253.1h1V253.2h1V253.7h1V253.5h1V253.7h1V248.3h1V248.6h1V249h1V249h1V249.3h1V249.3h1V249.5h1V250.1h1V250.1h1V250.1h1V250.1h1V250.5h1V250.6h1V250.8h1V250.9h1V251.5h1V251.7h1V251.5h1V251.7h1V252.1h1V252.5h1V252.6h1V252.7h1V252.9h1V253.2h1V253.3h1V253.5h1V253.9h1V254h1V254.1h1V254.4h1V254.6h1V254.8h1V254.9h1V255.1h1V255.3h1V255.6h1V255.7h1V256h1V256.1h1V256.4h1V256.6h1V256.6h1V256.6h1V256.7h1V256.7h1V256.7h1V256.7h1V256.8h1V256.8h1V256.8h1V256.8h1V256.8h1V256.9h1V256.9h1V256.9h1V257h1V257h1V257h1V257h1V257.1h1V257.1h1V257.1h1V258.1h-1V258.1h-1V258.1h-1V258.2h-1V258.2h-1V258.2h-1V258.2h-1V258.3h-1V258.3h-1V258.3h-1V258.4h-1V258.4h-1V258.4h-1V258.4h-1V258.4h-1V258.5h-1V258.5h-1V258.5h-1V258.5h-1V258.6h-1V258.6h-1V258.6h-1V258.8h-1V259.1h-1V259.2h-1V259.5h-1V259.6h-1V259.9h-1V260.1h-1V260.3h-1V260.4h-1V260.6h-1V260.8h-1V261.1h-1V261.2h-1V261.3h-1V261.7h-1V261.9h-1V262h-1V262.3h-1V262.5h-1V262.6h-1V262.7h-1V263.1h-1V263.5h-1V263.7h-1V263.5h-1V263.7h-1V264.3h-1V264.4h-1V264.6h-1V264.7h-1V265.1h-1V265.1h-1V265.1h-1V265.1h-1V265.7h-1V265.9h-1V265.9h-1V266.2h-1V266.2h-1V266.6h-1V266.9h-1V261.5h-1V261.7h-1V261.5h-1V262h-1V262.1h-1V262.2h-1V262.3h-1V262.6h-1V262.9h-1V263.5h-1V264.1h-1V264.7h-1V265.3h-1V265.9h-1V266.5h-1V267.1h-1V267.8h-1V268.1h-1V269.1h-1V269.7h-1V270h-1V270.3h-1V270.4h-1V271h-1V271.2h-1V271.5h-1V272h-1V272.5h-1V272.4h-1V273.1h-1V273.2h-1V273.5h-1V274.8h-1V275.1h-1V274.6h-1V276h-1V275.9h-1V275.6h-1V275.9h-1V264.8h-1V264.9h-1V266h-1V266.9h-1V267.9h-1V268.4h-1V269.8h-1V270.3h-1V271.7h-1V272.5h-1V272.9h-1V274.4h-1V274.4h-1V275h-1V276.6h-1V277.3h-1V277.8h-1V278.7h-1V278.7h-1V278.9h-1V280.5h-1V280.2h-1V282.1h-1V282.4h-1V282.8h-1V283.2h-1V283.9h-1V282.8h-1V282.4h-1V283.9h-1V283.1h-1V284.5h-1V283.8h-1V283.9h-1V284h-1V284h-1V285.4h-1V284.5h-1V283h-1V283.8h-1V279.7h-1V281.1h-1V282.9h-1V282.2h-1V282.1h-1V281.5h-1V280.7h-1V280h-1V281.5h-1V281.5h-1V282.7h-1V284.5h-1V286.1h-1V286.9h-1V288h-1V288.9h-1V288.5h-1V291.6h-1V290.3h-1V290.5h-1V289.8h-1V287.9h-1V288.9h-1V287.5h-1V287.6h-1V286.7h-1V287.3h-1V285.6h-1V288.2h-1V290.5h-1V291.8h-1V292.2h-1V294.1h-1V298.4h-1V298.8h-1V299.6h-1V301.8h-1V302.4h-1V272.1h-1V272.8h-1V274.1h-1V276.3h-1V276.8h-1V278.4h-1V279.9h-1V281.2h-1V282.8h-1V284.3h-1V284.6h-1V286.6h-1V288.9h-1V291.8h-1V291.6h-1V294.7h-1V297.2h-1V297.3h-1V300h-1V301.8h-1V301.7h-1V303h-1V303.1h-1V301.4h-1V298.2h-1V296.5h-1V293.1h-1V291h-1V290.2h-1V288.5h-1V290.3h-1V292.2h-1V295.9h-1V297.9h-1V297.8h-1V300.9h-1V303.4h-1V303.8h-1V306.8h-1V260.6h-1V260.6h-1V260.7h-1V260.5h-1V260.5h-1V260.6h-1V260.6h-1V260.5h-1V260.6h-1V260.6h-1V260.7h-1V260.5h-1V260.9h-1V263h-1V264.4h-1V266.8h-1V268.3h-1V270.5h-1V272.4h-1V273.3h-1V275.6h-1V277.4h-1V278.9h-1V278.6h-1V279.6h-1V279.7h-1V280.1h-1V280.4h-1V279.9h-1V279.7h-1V281h-1V280.3h-1V281.2h-1V281.3h-1V283.4h-1V283.5h-1V284.5h-1V285.2h-1V287.7h-1V287.6h-1V289h-1V290.4h-1V290.9h-1V294.4h-1V294.7h-1V297h-1V296.7h-1V298.4h-1V299.7h-1V303h-1V302.1h-1V304.7h-1V306.4h-1V266.4h-1V267.2h-1V268.4h-1V268.5h-1V269.3h-1V270.4h-1V271.2h-1V272.6h-1V273.2h-1V273.9h-1V274.8h-1V275.5h-1V276.7h-1V278.3h-1V280.1h-1V281.3h-1V281.6h-1V283.2h-1V285.1h-1V285.2h-1V286.7h-1V287.5h-1V289.9h-1V289.6h-1V290.3h-1V292.4h-1V294.2h-1V294.6h-1V297.6h-1V297.3h-1V298.2h-1V297.7h-1V300.6h-1V298.3h-1V298.4h-1V299h-1V300.7h-1V298.3h-1V300h-1V300.7h-1V299.1h-1V300.3h-1V300.4h-1V303h-1V304.6h-1V305.6h-1V304.9h-1V308.9h-1V308.8h-1V310.8h-1V312.3h-1V311.4h-1V262.7h-1V262.6h-1V263h-1V263.1h-1V263.3h-1V263.2h-1V263.4h-1V263.7h-1V263.9h-1V264.1h-1V264.2h-1V264.1h-1V264.5h-1V264.7h-1V265.3h-1V267.2h-1V268.9h-1V269.8h-1V271.8h-1V272.6h-1V275.2h-1V276.1h-1V278h-1V278.9h-1V281h-1V282.8h-1V283h-1V284.6h-1V285.3h-1V287.1h-1V288.7h-1V290.9h-1V291h-1V292.3h-1V294.6h-1V293.2h-1V295.9h-1V296.6h-1V297.8h-1V299.7h-1V299.4h-1V300.3h-1V300.4h-1V302.8h-1V306.1h-1V305.2h-1V307.9h-1V309.7h-1V310.6h-1V312.4h-1V310.6h-1V314.9h-1V266.3h-1V266.6h-1V266.7h-1V266.9h-1V267.9h-1V268h-1V268.8h-1V270.2h-1V271.2h-1V271.7h-1V271.8h-1V273.5h-1V273.9h-1V274.6h-1V275.7h-1V277.7h-1V278.7h-1V281.3h-1V281.6h-1V284.3h-1V285.5h-1V286h-1V288.6h-1V289.1h-1V291.4h-1V292.1h-1V295.7h-1V295.6h-1V299.4h-1V301.3h-1V303.1h-1V302h-1V303.6h-1V303.1h-1V303.8h-1V301.9h-1V302.4h-1V302.9h-1V306h-1V303.3h-1V260.6h-1V260.6h-1V261.7h-1V263.8h-1V266.1h-1V267.9h-1V270.2h-1V272.4h-1V275.2h-1V277.6h-1V280h-1V282h-1V284.8h-1V286.8h-1V289.4h-1V290.5h-1V293.8h-1V294.5h-1V299.4h-1V299.5h-1V302.5h-1V304.7h-1V306.2h-1V311.5h-1V313.2h-1V316.2h-1V264.5h-1V268.6h-1V271.6h-1V274h-1V275.4h-1V275.1h-1V276.2h-1V277.5h-1V277h-1V277.8h-1V279.4h-1V279.8h-1V280.4h-1V280.4h-1V281.8h-1V281.7h-1V282.9h-1V284h-1V283.4h-1V285h-1V284.2h-1V285.3h-1V286.7h-1V285.7h-1V285.9h-1V288.1h-1V287.9h-1V289.4h-1V290.5h-1V289.3h-1V292.6h-1V292.2h-1V294.4h-1V294.3h-1V296.6h-1V297.7h-1V299.1h-1V299.9h-1V299.8h-1V266.5h-1V266.5h-1V266.9h-1V266.3h-1V266.5h-1V267.9h-1V268.8h-1V269.2h-1V270.6h-1V271.3h-1V272.1h-1V274.3h-1V274.8h-1V276.4h-1V276.7h-1V278.1h-1V278.5h-1V280.2h-1V281.5h-1V282.2h-1V282.3h-1V284h-1V284.8h-1V286.1h-1V287.4h-1V287.7h-1V290.1h-1V290.9h-1V291.8h-1V291.6h-1V291.5h-1V292.9h-1V294.2h-1V296.1h-1V294.4h-1V295.2h-1V294.2h-1V296.7h-1V296.4h-1V295.4h-1V271.9h-1V272.7h-1V273.4h-1V274.9h-1V277.1h-1V279.2h-1V280.2h-1V282.1h-1V284h-1V286h-1V285.9h-1V289.6h-1V289.5h-1V293.2h-1V293.5h-1V295.4h-1V296.1h-1V298.5h-1V299.7h-1V304.7h-1V306.1h-1V304.9h-1V310h-1V312h-1V307.9h-1V305.5h-1V304.8h-1V304.9h-1V302.6h-1V298.8h-1V299.8h-1V300.3h-1V300.4h-1V304.5h-1V305.9h-1V305.1h-1V306.9h-1V308.5h-1V283.6h-1V282.3h-1V283.6h-1V283.8h-1V284.6h-1V286.1h-1V288.2h-1V288.2h-1V290.5h-1V289.7h-1V291.7h-1V294h-1V295h-1V295.6h-1V298.7h-1V299.4h-1V301.6h-1V304h-1V304.7h-1V307.2h-1V307h-1V309.2h-1V307.1h-1V304.3h-1V302.8h-1V302.2h-1V300.3h-1V300.7h-1V301h-1V300.3h-1V301.7h-1V303h-1V304.3h-1V306.1h-1V306.7h-1V309.4h-1V310.5h-1V311.8h-1V313.9h-1V316h-1V274.1h-1V275.2h-1V278.7h-1V282h-1V284.7h-1V287.9h-1V289.3h-1V288.6h-1V289.4h-1V291.1h-1V292.4h-1V292.3h-1V294.4h-1V296h-1V296.8h-1V296.8h-1V297.9h-1V297.5h-1V297.9h-1V301.7h-1V300.9h-1V300.9h-1V304.4h-1V303.8h-1V304.7h-1V302h-1V299.8h-1V298.8h-1V296.9h-1V294.2h-1V291.8h-1V288.4h-1V286.9h-1V288.7h-1V291.5h-1V293.4h-1V297.1h-1V300.8h-1V303.7h-1V305.8h-1V261.6h-1V261.7h-1V261.7h-1V261.7h-1V261.5h-1V261.7h-1V261.7h-1V261.7h-1V261.6h-1V261.6h-1V261.5h-1V262.5h-1V264.6h-1V266.8h-1V268.7h-1V271.8h-1V273.2h-1V275.7h-1V277h-1V278.9h-1V279.7h-1V280.6h-1V280.2h-1V280h-1V280.9h-1V282.2h-1V281.5h-1V282.5h-1V282.7h-1V283h-1V285.1h-1V286h-1V285.9h-1V287.2h-1V287.7h-1V286.7h-1V288.6h-1V287.8h-1V290h-1V290.2h-1V289.4h-1V293.5h-1V294h-1V295.8h-1V295.9h-1V297.6h-1V301h-1V302.6h-1V302.6h-1V304.2h-1V307.7h-1V307h-1V266.4h-1V267.2h-1V267.7h-1V268.8h-1V269.3h-1V269.9h-1V271.1h-1V272.3h-1V272.9h-1V274.6h-1V276.8h-1V278h-1V279.7h-1V279.7h-1V282h-1V282.1h-1V285.2h-1V284.7h-1V287.3h-1V288.7h-1V287.4h-1V289.8h-1V289.5h-1V290.9h-1V292.2h-1V291.9h-1V294.2h-1V293.9h-1V295.5h-1V297.5h-1V295.7h-1V296.6h-1V297.5h-1V296.8h-1V299.5h-1V300h-1V300.8h-1V298.8h-1V301.4h-1V300.5h-1V302h-1V303.1h-1V303.4h-1V304.3h-1V304.2h-1V304.5h-1V307h-1V306.7h-1V308.3h-1V309.5h-1V307.1h-1V307.6h-1V280.6h-1V262.7h-1V262.5h-1V262.6h-1V262.6h-1V262.6h-1V262.6h-1V262.5h-1V262.6h-1V262.8h-1V262.7h-1V262.4h-1V263.9h-1V265.5h-1V266.3h-1V268h-1V269.5h-1V270.7h-1V272.5h-1V273.6h-1V275.6h-1V276.6h-1V277.3h-1V278.6h-1V280.5h-1V282.3h-1V283.4h-1V283.4h-1V284.3h-1V286.6h-1V287.8h-1V288.2h-1V289.9h-1V289.8h-1V291.5h-1V294.7h-1V293.8h-1V297.4h-1V295.7h-1V297.8h-1V298.5h-1V301.8h-1V301.4h-1V303h-1V301.8h-1V304h-1V306.4h-1V305.3h-1V305.3h-1V307.3h-1V308.9h-1V309.9h-1V308.3h-1V268.8h-1V269h-1V269.4h-1V269.2h-1V269.5h-1V269.6h-1V270.2h-1V270.7h-1V270.9h-1V272.7h-1V274.3h-1V275.7h-1V278.7h-1V279.2h-1V281.9h-1V282.9h-1V285.2h-1V284.8h-1V286.3h-1V289.8h-1V291.4h-1V292.6h-1V294h-1V293.6h-1V294.5h-1V297.3h-1V300h-1V298.8h-1V300.6h-1V302.5h-1V301.2h-1V305.1h-1V306.1h-1V303.8h-1V305.2h-1V306.6h-1V308.3h-1V307.8h-1V309.4h-1V309.2h-1V258.4h-1V258.3h-1V258.4h-1V258.4h-1V258.5h-1V258.4h-1V258.4h-1V258.4h-1V258.6h-1V258.6h-1V258.5h-1V258.7h-1V258.6h-1V258.5h-1V258.6h-1V258.6h-1V258.6h-1V258.7h-1V258.8h-1V258.9h-1V259.2h-1V259.5h-1V259.9h-1V260.4h-1V260.7h-1V260.9h-1V262.1h-1V263.9h-1V266h-1V267.5h-1V267.3h-1V267.6h-1V267.6h-1V266.8h-1V266.2h-1V266.3h-1V266.5h-1V268.4h-1V270.3h-1V270.7h-1V270.8h-1V270.5h-1V268.5h-1V269.2h-1V268.7h-1V267.5h-1V266.3h-1V265.3h-1V264.9h-1V264.7h-1V265.4h-1V265.7h-1V265.4h-1V265.7h-1V266.2h-1V266.4h-1V266.6h-1V266.1h-1V266.1h-1V265.8h-1V266.3h-1V266.5h-1V265.7h-1V265.8h-1V266.1h-1V265.3h-1V264.2h-1V263.2h-1V262.7h-1V262.1h-1V261.7h-1V261.2h-1V260.3h-1V260h-1V260.1h-1V260.6h-1V261h-1V261.8h-1V263h-1V264.9h-1V266.2h-1V268.9h-1V268.4h-1V269.3h-1V268.7h-1V269.3h-1V267.6h-1V266.9h-1V267.1h-1V267.4h-1V268h-1V268.1h-1V268.8h-1V270.2h-1V271.8h-1V272.2h-1V271.3h-1V271h-1V270.3h-1V270.2h-1V270.5h-1V269.9h-1V270.3h-1V269.8h-1V267.4h-1V266.8h-1V265.3h-1V264.3h-1V263h-1V262.8h-1V262.1h-1V260.7h-1V260.2h-1V259.9h-1V259.9h-1V259.8h-1V260.2h-1V260.3h-1V260.4h-1V260.2h-1V260.3h-1V260.4h-1V260.4h-1V260h-1V259.9h-1V259.7h-1V259.8h-1V260.2h-1V260.9h-1V262.1h-1V263.3h-1V264.8h-1V266.9h-1V269.6h-1V271.5h-1V271h-1V271.3h-1V270.7h-1V269.5h-1V268.6h-1V270.5h-1V273h-1V275.5h-1V275.1h-1V274.9h-1V274.9h-1V273.7h-1V273.8h-1V272.6h-1V271.1h-1V271.6h-1V270.8h-1V269.3h-1V268.7h-1V269.9h-1V272.5h-1V273h-1V273h-1V272.9h-1V271.4h-1V269.7h-1V269.9h-1V269.7h-1V267.2h-1V266.3h-1V267.4h-1V268.4h-1V270.1h-1V269.8h-1V270.4h-1V270h-1V268.1h-1V267.1h-1V267.2h-1V266.4h-1V264.6h-1V262.7h-1V261.3h-1V261.2h-1V261.4h-1V262.2h-1V263.1h-1V264.4h-1V265.9h-1V266.6h-1V268.4h-1V269.1h-1V268.8h-1V270h-1V270h-1V267.6h-1V266.6h-1V266.7h-1V267.5h-1V268.5h-1V270h-1V270h-1V271.4h-1V271.2h-1V269.6h-1V268.3h-1V266.2h-1V265.5h-1V265.4h-1V266.2h-1V265.9h-1V265.9h-1V265.9h-1V260.9h-1V260.4h-1V259.3h-1V259.4h-1V259.6h-1V259.8h-1V260.5h-1V261.6h-1V262.1h-1V261.9h-1V261.7h-1V261.2h-1V259.9h-1V259.4h-1V259.3h-1V259.3h-1V259.7h-1V259.9h-1V260.1h-1V260h-1V259.8h-1V259.7h-1V259.6h-1V259.5h-1V259.6h-1V260.4h-1V261.8h-1V263.4h-1V265.7h-1V267.8h-1V270.1h-1V271.6h-1V269.9h-1V268.5h-1V269.2h-1V268.4h-1V267h-1V267.5h-1V267.9h-1V268.8h-1V271.4h-1V271.9h-1V272.6h-1V272.8h-1V272.6h-1V270.9h-1V272.3h-1V270.6h-1V269.4h-1V269h-1V268.7h-1V267.5h-1V267h-1V266.7h-1V267.1h-1V266.9h-1V267h-1V265.5h-1V265.5h-1V265.8h-1V266.5h-1V266.9h-1V266.1h-1V265.8h-1V266.8h-1V266.1h-1V265.2h-1V264.8h-1V264.3h-1V263.5h-1V262.3h-1V261.5h-1V261.1h-1V260.4h-1V260.1h-1V260.6h-1V261.3h-1V262.3h-1V264.1h-1V267.1h-1V271.7h-1V273.7h-1V275.4h-1V275.8h-1V273.5h-1V272.7h-1V271.4h-1V269.6h-1V268.8h-1V270.6h-1V271.6h-1V272h-1V273.5h-1V274.6h-1V274.7h-1V275.3h-1V274.8h-1V273.4h-1V273.9h-1V273.4h-1V271.9h-1V271.9h-1V270.4h-1V268.9h-1V267.4h-1V267.8h-1V266.8h-1V264.9h-1V264.2h-1V262.8h-1V261.9h-1V261.8h-1V261.2h-1V260.5h-1V260h-1V259.7h-1V259.8h-1V260h-1V260.3h-1V260.2h-1V260.6h-1V260.5h-1V260.8h-1V260.6h-1V260.7h-1V260.2h-1V260.3h-1V260.3h-1V260.2h-1V260.3h-1V260.8h-1V261.8h-1V262.4h-1V263.3h-1V264.8h-1V266.1h-1V267.6h-1V268.4h-1V269h-1V269.4h-1V267.8h-1V267.4h-1V267.7h-1V269.4h-1V270.8h-1V272.2h-1V271.6h-1V272.6h-1V272.1h-1V271.4h-1V271h-1V269.4h-1V269h-1V267.7h-1V267.6h-1V267.8h-1V267.5h-1V268h-1V270h-1V270.3h-1V269.6h-1V270.3h-1V270.2h-1V268.8h-1V268.7h-1V269h-1V268.2h-1V268.3h-1V267.9h-1V267.3h-1V267.5h-1V267.4h-1V266.8h-1V266.4h-1V267.2h-1V266.1h-1V265.1h-1V263.3h-1V261.7h-1V261.1h-1V261.2h-1V261.5h-1V262.8h-1V264.4h-1V266h-1V267.4h-1V267.5h-1V270.6h-1V270.8h-1V269h-1V268.1h-1V267.4h-1V266.1h-1V265.6h-1V265h-1V266.5h-1V268h-1V270.1h-1V270.9h-1V273h-1V272.8h-1V270.2h-1V268.5h-1V267.4h-1V266.3h-1V266h-1V265.2h-1V265.7h-1V266.3h-1Z"/>
</svg>
<div style="left:6px;top:6px;width:20.4px;height:20.4px;background:#cddaf2;box-shadow:inset 1px 1px 0 #fdfdfd, inset -1.1px -1.1px 0 #8690a6;"></div>
<div style="left:28px;top:6px;width:88.4px;height:20.6px;background:#cddaf2;box-shadow:inset 1px 1px 0 #fdfdfd, inset -1.1px -1.1px 0 #8690a6;"></div>
<div style="left:6px;top:27.4px;width:55.2px;height:19.6px;background:#cddaf2;box-shadow:inset 1px 1px 0 #fdfdfd, inset -1.1px -1.1px 0 #8690a6;"></div>
<div style="left:62px;top:27.4px;width:54.4px;height:19.6px;background:#cddaf2;box-shadow:inset 1px 1px 0 #fdfdfd, inset -1.1px -1.1px 0 #8690a6;"></div>
<div style="left:6px;top:326px;width:20.6px;height:20.4px;background:#cddaf2;box-shadow:inset 1px 1px 0 #fdfdfd, inset -1.1px -1.1px 0 #8690a6;"></div>
<div style="left:27.4px;top:326px;width:68.2px;height:20.4px;background:#cddaf2;box-shadow:inset 1px 1px 0 #fdfdfd, inset -1.1px -1.1px 0 #8690a6;"></div>
<svg style="left:6px;top:6px;" width="20.4" height="20.4" viewBox="0 0 20.4 20.4"><path d="M6.6 6.6 L14.2 14.2 M14.2 6.6 L6.6 14.2" stroke="#000" stroke-width="1.9"/></svg>
<div style="left:28px;top:6px;width:75.4px;height:20px;overflow:hidden;">
<div class="t" style="left:3.3px;top:3.76px;font-size:12.6px;line-height:12.6px;letter-spacing:-0.170px;">Drake_Stafford</div>
</div>
<svg style="left:100px;top:6px;" width="16" height="20.4" viewBox="0 0 16 20.4"><path d="M2.2 7 H13.6 L7.9 12.8 Z" fill="#000"/></svg>
<div class="t" style="left:19.3px;top:31.76px;font-size:12.6px;line-height:12.6px;letter-spacing:0.463px;">Mute</div>
<div class="t" style="left:77.2px;top:31.76px;font-size:12.6px;line-height:12.6px;letter-spacing:-0.240px;">Solo</div>
<svg style="left:6px;top:326px;" width="20.6" height="20.4" viewBox="0 0 20.6 20.4"><path d="M4.2 14 H16.8 L10.5 8 Z" fill="#000"/></svg>
<div class="t" style="left:47px;top:329.86px;font-size:12.4px;line-height:12.4px;letter-spacing:-0.173px;">Select</div>
<div class="t" style="left:10px;top:120.96px;font-size:12.2px;line-height:12.2px;letter-spacing:0.131px;">Stereo, 48000Hz</div>
<div class="t" style="left:10px;top:134.96px;font-size:12.2px;line-height:12.2px;letter-spacing:0.457px;">32-bit float</div>
<div style="left:18.4px;top:67.4px;width:87.8px;height:2.1px;background:#a8a8a8;"></div>
<div style="left:18.4px;top:62.4px;width:1.2px;height:5px;background:#ffffff;"></div>
<div style="left:29.2px;top:64.6px;width:1.2px;height:2.8px;background:#ffffff;"></div>
<div style="left:40px;top:64.6px;width:1.2px;height:2.8px;background:#ffffff;"></div>
<div style="left:50.8px;top:64.6px;width:1.2px;height:2.8px;background:#ffffff;"></div>
<div style="left:61.6px;top:64.6px;width:1.2px;height:2.8px;background:#ffffff;"></div>
<div style="left:72.4px;top:64.6px;width:1.2px;height:2.8px;background:#ffffff;"></div>
<div style="left:83.2px;top:64.6px;width:1.2px;height:2.8px;background:#ffffff;"></div>
<div style="left:94px;top:64.6px;width:1.2px;height:2.8px;background:#ffffff;"></div>
<div style="left:104.8px;top:62.4px;width:1.2px;height:5px;background:#ffffff;"></div>
<svg style="left:54.8px;top:61.3px;" width="14" height="14" viewBox="0 0 14 14"><circle cx="7" cy="7" r="3.8" stroke="#5252f0" stroke-width="4.2" fill="#c4cdea"/></svg>
<div style="left:18.4px;top:102.4px;width:87.8px;height:2.1px;background:#a8a8a8;"></div>
<div style="left:18.4px;top:97.4px;width:1.2px;height:5px;background:#ffffff;"></div>
<div style="left:29.2px;top:99.6px;width:1.2px;height:2.8px;background:#ffffff;"></div>
<div style="left:40px;top:99.6px;width:1.2px;height:2.8px;background:#ffffff;"></div>
<div style="left:50.8px;top:99.6px;width:1.2px;height:2.8px;background:#ffffff;"></div>
<div style="left:61.6px;top:99.6px;width:1.2px;height:2.8px;background:#ffffff;"></div>
<div style="left:72.4px;top:99.6px;width:1.2px;height:2.8px;background:#ffffff;"></div>
<div style="left:83.2px;top:99.6px;width:1.2px;height:2.8px;background:#ffffff;"></div>
<div style="left:94px;top:99.6px;width:1.2px;height:2.8px;background:#ffffff;"></div>
<div style="left:104.8px;top:97.4px;width:1.2px;height:5px;background:#ffffff;"></div>
<svg style="left:54.8px;top:96.3px;" width="14" height="14" viewBox="0 0 14 14"><circle cx="7" cy="7" r="3.8" stroke="#5252f0" stroke-width="4.2" fill="#c4cdea"/></svg>
<div style="left:18.4px;top:55.6px;width:5.4px;height:1.4px;background:#111;"></div>
<div style="left:97.4px;top:55.6px;width:5.6px;height:1.4px;background:#111;"></div>
<div style="left:99.5px;top:53.5px;width:1.4px;height:5.6px;background:#111;"></div>
<div class="t" style="left:18.4px;top:85.46px;font-size:11.2px;line-height:11.2px;">L</div>
<div class="t" style="left:96.8px;top:85.46px;font-size:11.2px;line-height:11.2px;">R</div>
<div class="t" style="left:126.4px;top:7.66px;font-size:8.8px;line-height:8.8px;letter-spacing:0.184px;font-weight:bold;">1.0</div>
<div class="t" style="left:126.4px;top:43.66px;font-size:8.8px;line-height:8.8px;letter-spacing:0.184px;">0.5</div>
<div style="left:140.4px;top:47.5px;width:3.2px;height:1.1px;background:#222;"></div>
<div class="t" style="left:126.4px;top:84.66px;font-size:8.8px;line-height:8.8px;letter-spacing:0.184px;font-weight:bold;">0.0</div>
<div style="left:140.4px;top:88.2px;width:3.4px;height:1.1px;background:#222;"></div>
<div class="t" style="left:123.381px;top:126.66px;font-size:8.8px;line-height:8.8px;letter-spacing:0.152px;">-0.5</div>
<div style="left:140.4px;top:130.2px;width:3.2px;height:1.1px;background:#222;"></div>
<div class="t" style="left:123.381px;top:161.66px;font-size:8.8px;line-height:8.8px;letter-spacing:0.152px;font-weight:bold;">-1.0</div>
<div class="t" style="left:126.4px;top:182.66px;font-size:8.8px;line-height:8.8px;letter-spacing:0.184px;font-weight:bold;">1.0</div>
<div class="t" style="left:126.4px;top:218.66px;font-size:8.8px;line-height:8.8px;letter-spacing:0.184px;">0.5</div>
<div style="left:140.4px;top:222.2px;width:3.2px;height:1.1px;background:#222;"></div>
<div class="t" style="left:126.4px;top:258.66px;font-size:8.8px;line-height:8.8px;letter-spacing:0.184px;font-weight:bold;">0.0</div>
<div style="left:140.4px;top:263px;width:3.4px;height:1.1px;background:#222;"></div>
<div class="t" style="left:123.381px;top:300.66px;font-size:8.8px;line-height:8.8px;letter-spacing:0.152px;">-0.5</div>
<div style="left:140.4px;top:305px;width:3.2px;height:1.1px;background:#222;"></div>
<div class="t" style="left:123.381px;top:336.66px;font-size:8.8px;line-height:8.8px;letter-spacing:0.152px;font-weight:bold;">-1.0</div>
<div style="left:139px;top:345.4px;width:5px;height:1.2px;background:#555;"></div>
</div>
<div style="left:1582.5px;top:128px;width:17.5px;height:646px;background:#a0a0a0;"></div>
<svg style="left:1582px;top:128px;" width="18" height="646" viewBox="0 0 18 646"><rect x="2.4" y="2.6" width="14" height="640.6" rx="7" fill="#e6e6e6" stroke="#ececec" stroke-width="0.6"/></svg>
<div style="left:0px;top:774px;width:1600px;height:17.6px;background:#e6e6e6;"></div>
<div style="left:158px;top:774px;width:1424.5px;height:17px;background:#a0a0a0;"></div>
<svg style="left:158px;top:774px;" width="1425" height="17" viewBox="0 0 1425 17"><rect x="0.6" y="1.6" width="1262.6" height="14.4" rx="7.2" fill="#e6e6e6"/></svg>
<div style="left:1582.5px;top:774px;width:17.5px;height:17.4px;background:#e6e6e6;"></div>
<div style="left:0px;top:791px;width:1600px;height:1px;background:#c6c6c6;"></div>
<div id="selectionbar" style="left:0;top:791px;width:1600px;height:66px;">
<svg style="left:3.2px;top:2px;" width="7.6" height="62" viewBox="0 0 7.6 62"><rect x="0" y="0" width="7.6" height="62" fill="#e4e4e4"/><rect x="0" y="0" width="1" height="62" fill="#f8f8f8"/><rect x="6.6" y="0" width="1" height="62" fill="#c2c2c2"/><rect x="2.4" y="4.2" width="2.8" height="1.1" fill="#fafafa"/><rect x="2.4" y="5.3" width="2.8" height="0.9" fill="#cacaca"/><rect x="2.4" y="8.86" width="2.8" height="1.1" fill="#fafafa"/><rect x="2.4" y="9.96" width="2.8" height="0.9" fill="#cacaca"/><rect x="2.4" y="13.52" width="2.8" height="1.1" fill="#fafafa"/><rect x="2.4" y="14.62" width="2.8" height="0.9" fill="#cacaca"/><rect x="2.4" y="18.18" width="2.8" height="1.1" fill="#fafafa"/><rect x="2.4" y="19.28" width="2.8" height="0.9" fill="#cacaca"/><rect x="2.4" y="22.84" width="2.8" height="1.1" fill="#fafafa"/><rect x="2.4" y="23.94" width="2.8" height="0.9" fill="#cacaca"/><rect x="2.4" y="27.5" width="2.8" height="1.1" fill="#fafafa"/><rect x="2.4" y="28.6" width="2.8" height="0.9" fill="#cacaca"/><rect x="2.4" y="32.16" width="2.8" height="1.1" fill="#fafafa"/><rect x="2.4" y="33.26" width="2.8" height="0.9" fill="#cacaca"/><rect x="2.4" y="36.82" width="2.8" height="1.1" fill="#fafafa"/><rect x="2.4" y="37.92" width="2.8" height="0.9" fill="#cacaca"/><rect x="2.4" y="41.48" width="2.8" height="1.1" fill="#fafafa"/><rect x="2.4" y="42.58" width="2.8" height="0.9" fill="#cacaca"/><rect x="2.4" y="46.14" width="2.8" height="1.1" fill="#fafafa"/><rect x="2.4" y="47.24" width="2.8" height="0.9" fill="#cacaca"/><rect x="2.4" y="50.8" width="2.8" height="1.1" fill="#fafafa"/><rect x="2.4" y="51.9" width="2.8" height="0.9" fill="#cacaca"/><rect x="2.4" y="55.46" width="2.8" height="1.1" fill="#fafafa"/><rect x="2.4" y="56.56" width="2.8" height="0.9" fill="#cacaca"/></svg>
<div class="t" style="left:20.6px;top:10.01px;font-size:17.1px;line-height:17.1px;letter-spacing:-0.083px;">Project Rate (Hz)</div>
<div class="t" style="left:166px;top:10.01px;font-size:17.1px;line-height:17.1px;letter-spacing:-0.349px;">Snap-To</div>
<div style="left:20px;top:34px;width:130px;height:32px;background:#fff;border:1px solid #d0d0d0;border-top-color:#b8b8b8;border-left-color:#bdbdbd;"></div>
<div style="left:127.8px;top:35px;width:21.2px;height:30px;background:#e6e6e6;"></div>
<svg style="left:132.5px;top:47.2px;" width="10" height="6" viewBox="0 0 10 6"><path d="M0.8 0.6 H9.2 L5 5.2 Z" fill="#111"/></svg>
<div class="t" style="left:25px;top:41.56px;font-size:16px;line-height:16px;letter-spacing:-0.173px;">48000</div>
<div style="left:166px;top:34px;width:102px;height:32px;background:#fff;border:1px solid #d0d0d0;border-top-color:#b8b8b8;border-left-color:#bdbdbd;"></div>
<div style="left:245px;top:35px;width:22px;height:30px;background:#e6e6e6;"></div>
<svg style="left:250.1px;top:47.2px;" width="10" height="6" viewBox="0 0 10 6"><path d="M0.8 0.6 H9.2 L5 5.2 Z" fill="#111"/></svg>
<div class="t" style="left:171.4px;top:41.56px;font-size:16px;line-height:16px;letter-spacing:-0.104px;">Nearest</div>
<div style="left:283px;top:2px;width:350px;height:30px;background:#fff;border:1px solid #d0d0d0;border-top-color:#b8b8b8;border-left-color:#bdbdbd;"></div>
<div style="left:609.4px;top:3px;width:22.6px;height:28px;background:#e6e6e6;"></div>
<svg style="left:614.8px;top:14.2px;" width="10" height="6" viewBox="0 0 10 6"><path d="M0.8 0.6 H9.2 L5 5.2 Z" fill="#111"/></svg>
<div class="t" style="left:287.6px;top:9.56px;font-size:16px;line-height:16px;">Start and End of Selection</div>
<div style="left:157.2px;top:7.6px;width:1px;height:19px;background:#cfcfcf;"></div>
<div style="left:157.2px;top:40px;width:1px;height:19.4px;background:#cfcfcf;"></div>
<div style="left:275.6px;top:7.6px;width:1px;height:19px;background:#cfcfcf;"></div>
<div style="left:275.6px;top:40px;width:1px;height:19.4px;background:#cfcfcf;"></div>
<div style="left:283.4px;top:34.6px;width:171.8px;height:21.4px;background:#bcc0cc;"></div>
<div style="left:284.4px;top:35.6px;width:160px;height:19.4px;background:#d4d4d4;"></div>
<div style="left:309.9px;top:34.6px;width:14px;height:21.4px;background:#bcc0cc;"></div>
<div style="left:349.5px;top:34.6px;width:17.2px;height:21.4px;background:#bcc0cc;"></div>
<div style="left:392.8px;top:34.6px;width:3.1px;height:21.4px;background:#bcc0cc;"></div>
<div style="left:435px;top:34.6px;width:10.4px;height:21.4px;background:#bcc0cc;"></div>
<div style="left:445.4px;top:34.6px;width:1px;height:21.4px;background:#f4f4f4;"></div>
<svg style="left:446.6px;top:40.6px;" width="8.6" height="6" viewBox="0 0 8.6 6"><path d="M0.4 0.6 H8.2 L4.3 4.8 Z" fill="#000"/></svg>
<div class="t" style="left:285.855px;top:38.26px;font-size:14.6px;line-height:14.6px;color:#0000b8;font-family:'DejaVu Sans','Liberation Sans',sans-serif;">0</div>
<div class="t" style="left:298.655px;top:38.26px;font-size:14.6px;line-height:14.6px;color:#0000b8;font-family:'DejaVu Sans','Liberation Sans',sans-serif;">0</div>
<div class="t" style="left:312.273px;top:38.26px;font-size:14.6px;line-height:14.6px;color:#0000b8;font-family:'DejaVu Sans','Liberation Sans',sans-serif;">h</div>
<div class="t" style="left:325.355px;top:38.26px;font-size:14.6px;line-height:14.6px;color:#0000b8;font-family:'DejaVu Sans','Liberation Sans',sans-serif;">0</div>
<div class="t" style="left:338.355px;top:38.26px;font-size:14.6px;line-height:14.6px;color:#0000b8;font-family:'DejaVu Sans','Liberation Sans',sans-serif;">0</div>
<div class="t" style="left:351.189px;top:38.26px;font-size:14.6px;line-height:14.6px;color:#0000b8;font-family:'DejaVu Sans','Liberation Sans',sans-serif;">m</div>
<div class="t" style="left:368.655px;top:38.26px;font-size:14.6px;line-height:14.6px;color:#0000b8;font-family:'DejaVu Sans','Liberation Sans',sans-serif;">0</div>
<div class="t" style="left:381.555px;top:38.26px;font-size:14.6px;line-height:14.6px;color:#0000b8;font-family:'DejaVu Sans','Liberation Sans',sans-serif;">0</div>
<div class="t" style="left:391.679px;top:38.26px;font-size:14.6px;line-height:14.6px;color:#0000b8;font-family:'DejaVu Sans','Liberation Sans',sans-serif;">.</div>
<div class="t" style="left:397.855px;top:38.26px;font-size:14.6px;line-height:14.6px;color:#0000b8;font-family:'DejaVu Sans','Liberation Sans',sans-serif;">0</div>
<div class="t" style="left:410.655px;top:38.26px;font-size:14.6px;line-height:14.6px;color:#0000b8;font-family:'DejaVu Sans','Liberation Sans',sans-serif;">0</div>
<div class="t" style="left:423.855px;top:38.26px;font-size:14.6px;line-height:14.6px;color:#0000b8;font-family:'DejaVu Sans','Liberation Sans',sans-serif;">0</div>
<div class="t" style="left:436.497px;top:38.26px;font-size:14.6px;line-height:14.6px;color:#0000b8;font-family:'DejaVu Sans','Liberation Sans',sans-serif;">s</div>
<div style="left:461.3px;top:34.6px;width:171.8px;height:21.4px;background:#bcc0cc;"></div>
<div style="left:462.3px;top:35.6px;width:160px;height:19.4px;background:#d4d4d4;"></div>
<div style="left:487.8px;top:34.6px;width:14px;height:21.4px;background:#bcc0cc;"></div>
<div style="left:527.4px;top:34.6px;width:17.2px;height:21.4px;background:#bcc0cc;"></div>
<div style="left:570.7px;top:34.6px;width:3.1px;height:21.4px;background:#bcc0cc;"></div>
<div style="left:612.9px;top:34.6px;width:10.4px;height:21.4px;background:#bcc0cc;"></div>
<div style="left:623.3px;top:34.6px;width:1px;height:21.4px;background:#f4f4f4;"></div>
<svg style="left:624.5px;top:40.6px;" width="8.6" height="6" viewBox="0 0 8.6 6"><path d="M0.4 0.6 H8.2 L4.3 4.8 Z" fill="#000"/></svg>
<div class="t" style="left:463.755px;top:38.26px;font-size:14.6px;line-height:14.6px;color:#0000b8;font-family:'DejaVu Sans','Liberation Sans',sans-serif;">0</div>
<div class="t" style="left:476.555px;top:38.26px;font-size:14.6px;line-height:14.6px;color:#0000b8;font-family:'DejaVu Sans','Liberation Sans',sans-serif;">0</div>
<div class="t" style="left:490.173px;top:38.26px;font-size:14.6px;line-height:14.6px;color:#0000b8;font-family:'DejaVu Sans','Liberation Sans',sans-serif;">h</div>
<div class="t" style="left:503.255px;top:38.26px;font-size:14.6px;line-height:14.6px;color:#0000b8;font-family:'DejaVu Sans','Liberation Sans',sans-serif;">0</div>
<div class="t" style="left:516.255px;top:38.26px;font-size:14.6px;line-height:14.6px;color:#0000b8;font-family:'DejaVu Sans','Liberation Sans',sans-serif;">0</div>
<div class="t" style="left:529.089px;top:38.26px;font-size:14.6px;line-height:14.6px;color:#0000b8;font-family:'DejaVu Sans','Liberation Sans',sans-serif;">m</div>
<div class="t" style="left:546.555px;top:38.26px;font-size:14.6px;line-height:14.6px;color:#0000b8;font-family:'DejaVu Sans','Liberation Sans',sans-serif;">0</div>
<div class="t" style="left:559.455px;top:38.26px;font-size:14.6px;line-height:14.6px;color:#0000b8;font-family:'DejaVu Sans','Liberation Sans',sans-serif;">0</div>
<div class="t" style="left:569.579px;top:38.26px;font-size:14.6px;line-height:14.6px;color:#0000b8;font-family:'DejaVu Sans','Liberation Sans',sans-serif;">.</div>
<div class="t" style="left:575.755px;top:38.26px;font-size:14.6px;line-height:14.6px;color:#0000b8;font-family:'DejaVu Sans','Liberation Sans',sans-serif;">0</div>
<div class="t" style="left:588.555px;top:38.26px;font-size:14.6px;line-height:14.6px;color:#0000b8;font-family:'DejaVu Sans','Liberation Sans',sans-serif;">0</div>
<div class="t" style="left:601.755px;top:38.26px;font-size:14.6px;line-height:14.6px;color:#0000b8;font-family:'DejaVu Sans','Liberation Sans',sans-serif;">0</div>
<div class="t" style="left:614.397px;top:38.26px;font-size:14.6px;line-height:14.6px;color:#0000b8;font-family:'DejaVu Sans','Liberation Sans',sans-serif;">s</div>
<svg style="left:641.4px;top:2px;" width="9" height="62" viewBox="0 0 9 62"><rect x="0" y="0" width="9" height="62" fill="#e4e4e4"/><rect x="0" y="0" width="1" height="62" fill="#f8f8f8"/><rect x="8" y="0" width="1" height="62" fill="#c2c2c2"/><rect x="2.4" y="4.2" width="4.2" height="1.1" fill="#fafafa"/><rect x="2.4" y="5.3" width="4.2" height="0.9" fill="#cacaca"/><rect x="2.4" y="8.86" width="4.2" height="1.1" fill="#fafafa"/><rect x="2.4" y="9.96" width="4.2" height="0.9" fill="#cacaca"/><rect x="2.4" y="13.52" width="4.2" height="1.1" fill="#fafafa"/><rect x="2.4" y="14.62" width="4.2" height="0.9" fill="#cacaca"/><rect x="2.4" y="18.18" width="4.2" height="1.1" fill="#fafafa"/><rect x="2.4" y="19.28" width="4.2" height="0.9" fill="#cacaca"/><rect x="2.4" y="22.84" width="4.2" height="1.1" fill="#fafafa"/><rect x="2.4" y="23.94" width="4.2" height="0.9" fill="#cacaca"/><rect x="2.4" y="27.5" width="4.2" height="1.1" fill="#fafafa"/><rect x="2.4" y="28.6" width="4.2" height="0.9" fill="#cacaca"/><rect x="2.4" y="32.16" width="4.2" height="1.1" fill="#fafafa"/><rect x="2.4" y="33.26" width="4.2" height="0.9" fill="#cacaca"/><rect x="2.4" y="36.82" width="4.2" height="1.1" fill="#fafafa"/><rect x="2.4" y="37.92" width="4.2" height="0.9" fill="#cacaca"/><rect x="2.4" y="41.48" width="4.2" height="1.1" fill="#fafafa"/><rect x="2.4" y="42.58" width="4.2" height="0.9" fill="#cacaca"/><rect x="2.4" y="46.14" width="4.2" height="1.1" fill="#fafafa"/><rect x="2.4" y="47.24" width="4.2" height="0.9" fill="#cacaca"/><rect x="2.4" y="50.8" width="4.2" height="1.1" fill="#fafafa"/><rect x="2.4" y="51.9" width="4.2" height="0.9" fill="#cacaca"/><rect x="2.4" y="55.46" width="4.2" height="1.1" fill="#fafafa"/><rect x="2.4" y="56.56" width="4.2" height="0.9" fill="#cacaca"/></svg>
<div style="left:653.7px;top:15.7px;width:260.6px;height:35.6px;background:#bcc0cc;"></div>
<div style="left:655.8px;top:17px;width:38.2px;height:33px;background:#d4d4d4;"></div>
<div style="left:721.8px;top:17px;width:39.8px;height:33px;background:#d4d4d4;"></div>
<div style="left:798px;top:17px;width:39.3px;height:33px;background:#d4d4d4;"></div>
<div style="left:844px;top:17px;width:40px;height:33px;background:#d4d4d4;"></div>
<div style="left:903.3px;top:15.7px;width:1px;height:35.6px;background:#f6f6f6;"></div>
<svg style="left:903.6px;top:29.6px;" width="9.4" height="7" viewBox="0 0 9.4 7"><path d="M0.8 0.6 H8.2 L4.5 4.6 Z" fill="#000"/></svg>
<div class="t" style="left:656.436px;top:21.96px;font-size:27.2px;line-height:27.2px;color:#0000b8;">0</div>
<div class="t" style="left:676.636px;top:21.96px;font-size:27.2px;line-height:27.2px;color:#0000b8;">0</div>
<div class="t" style="left:700.436px;top:21.96px;font-size:27.2px;line-height:27.2px;color:#0000b8;">h</div>
<div class="t" style="left:723.936px;top:21.96px;font-size:27.2px;line-height:27.2px;color:#0000b8;">0</div>
<div class="t" style="left:744.136px;top:21.96px;font-size:27.2px;line-height:27.2px;color:#0000b8;">0</div>
<div class="t" style="left:768.171px;top:21.96px;font-size:27.2px;line-height:27.2px;color:#0000b8;">m</div>
<div class="t" style="left:799.436px;top:21.96px;font-size:27.2px;line-height:27.2px;color:#0000b8;">0</div>
<div class="t" style="left:819.436px;top:21.96px;font-size:27.2px;line-height:27.2px;color:#0000b8;">0</div>
<div class="t" style="left:836.622px;top:21.96px;font-size:27.2px;line-height:27.2px;color:#0000b8;">.</div>
<div class="t" style="left:846.236px;top:21.96px;font-size:27.2px;line-height:27.2px;color:#0000b8;">0</div>
<div class="t" style="left:866.236px;top:21.96px;font-size:27.2px;line-height:27.2px;color:#0000b8;">0</div>
<div class="t" style="left:889.2px;top:21.96px;font-size:27.2px;line-height:27.2px;color:#0000b8;">s</div>
<div style="left:928px;top:2px;width:1px;height:63px;background:#d0d0d0;"></div>
<div style="left:929.6px;top:2px;width:1px;height:63px;background:#f2f2f2;"></div>
</div>
<div style="left:0px;top:857px;width:1600px;height:1.2px;background:#c4c4c4;"></div>
<div id="statusbar" style="left:0;top:858px;width:1600px;height:28px;">
<div class="t" style="left:6.4px;top:5.86px;font-size:15.4px;line-height:15.4px;letter-spacing:0.249px;">Stopped.</div>
<div style="left:217.6px;top:1px;width:1.2px;height:26px;background:#bdbdbd;"></div>
<div style="left:220px;top:1px;width:1px;height:26px;background:#c9c9c9;"></div>
<div style="left:1423px;top:1px;width:1.2px;height:26px;background:#bdbdbd;"></div>
<div style="left:1425.4px;top:1px;width:1px;height:26px;background:#c9c9c9;"></div>
<div style="left:1.6px;top:0.6px;width:1px;height:26px;background:#cfcfcf;"></div>
<div style="left:0px;top:26.6px;width:1600px;height:1.2px;background:#cdcdcd;"></div>
</div>
</div></body></html>
